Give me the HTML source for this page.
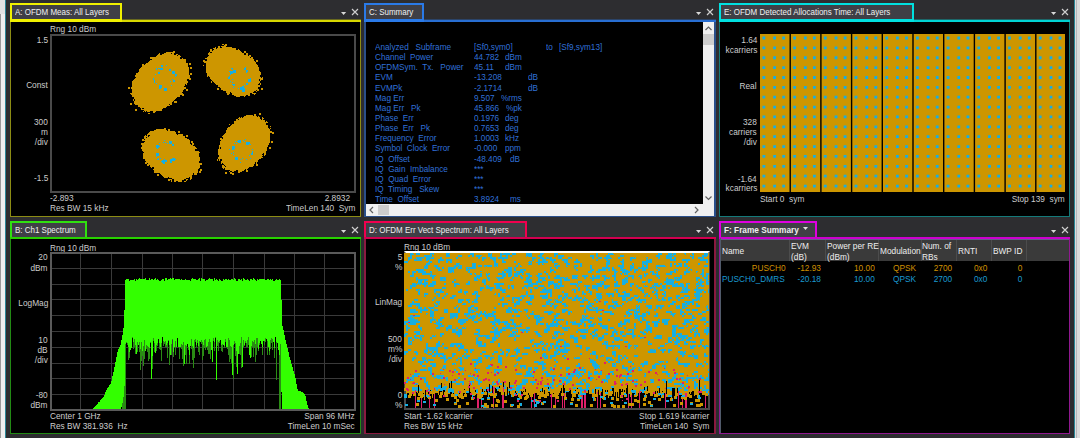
<!DOCTYPE html>
<html><head><meta charset="utf-8"><style>
html,body{margin:0;padding:0;width:1080px;height:438px;overflow:hidden;background:#2d2d30;font-family:"Liberation Sans", sans-serif;}
</style></head><body>
<div style="position:absolute;left:0px;top:0px;width:1px;height:438px;background:#9a9a9a;"></div><div style="position:absolute;left:1px;top:0px;width:4px;height:438px;background:#efefef;"></div><div style="position:absolute;left:0px;top:0px;width:5px;height:14px;background:#e2e2e2;"></div><div style="position:absolute;left:5px;top:0px;width:1px;height:438px;background:#2b8797;"></div><div style="position:absolute;left:1074px;top:0px;width:1px;height:438px;background:#2b8797;"></div><div style="position:absolute;left:1075px;top:0px;width:5px;height:438px;background:#dcdcdc;"></div><div style="position:absolute;left:1076px;top:0px;width:1px;height:438px;background:#b8b8bc;"></div><div style="position:absolute;left:10px;top:19px;width:351px;height:1px;background:#69691f;"></div><div style="position:absolute;left:10px;top:20px;width:351px;height:2px;background:#d8d800;"></div><div style="position:absolute;left:10px;top:3px;width:112px;height:19px;background:#f0f000;"></div><div style="position:absolute;left:12px;top:5px;width:108px;height:14px;background:#3f3f46;"></div><div style="position:absolute;left:10px;top:22px;width:351px;height:195px;background:#8c8c14;"></div><div style="position:absolute;left:11px;top:22px;width:349px;height:194px;background:#000000;"></div><div style="position:absolute;left:15px;top:6px;font-size:9.5px;line-height:12px;color:#f0f0f0;white-space:pre;transform:scaleX(0.84);transform-origin:0 0;">A: OFDM Meas: All Layers</div><svg style="position:absolute;left:341px;top:3px" width="20" height="16" viewBox="0 0 20 16"><path d="M0 9 L5.2 9 L2.6 12 Z" fill="#d8d8d8"/><path d="M11 6 L17 12 M17 6 L11 12" stroke="#cfcfcf" stroke-width="1.15"/></svg><div style="position:absolute;left:364px;top:19px;width:352px;height:1px;background:#2b4469;"></div><div style="position:absolute;left:364px;top:20px;width:352px;height:2px;background:#286ed2;"></div><div style="position:absolute;left:364px;top:3px;width:60px;height:19px;background:#2a7ae8;"></div><div style="position:absolute;left:366px;top:5px;width:56px;height:14px;background:#3f3f46;"></div><div style="position:absolute;left:364px;top:22px;width:352px;height:195px;background:#2a4f8a;"></div><div style="position:absolute;left:366px;top:22px;width:348px;height:194px;background:#000000;"></div><div style="position:absolute;left:369px;top:6px;font-size:9.5px;line-height:12px;color:#f0f0f0;white-space:pre;transform:scaleX(0.84);transform-origin:0 0;">C: Summary</div><svg style="position:absolute;left:696px;top:3px" width="20" height="16" viewBox="0 0 20 16"><path d="M0 9 L5.2 9 L2.6 12 Z" fill="#d8d8d8"/><path d="M11 6 L17 12 M17 6 L11 12" stroke="#cfcfcf" stroke-width="1.15"/></svg><div style="position:absolute;left:719px;top:19px;width:351px;height:1px;background:#1d6769;"></div><div style="position:absolute;left:719px;top:20px;width:351px;height:2px;background:#00d2d2;"></div><div style="position:absolute;left:719px;top:3px;width:195px;height:19px;background:#00e0e0;"></div><div style="position:absolute;left:721px;top:5px;width:191px;height:14px;background:#3f3f46;"></div><div style="position:absolute;left:719px;top:22px;width:351px;height:195px;background:#147a7a;"></div><div style="position:absolute;left:720px;top:22px;width:349px;height:194px;background:#000000;"></div><div style="position:absolute;left:724px;top:6px;font-size:9.5px;line-height:12px;color:#f0f0f0;white-space:pre;transform:scaleX(0.84);transform-origin:0 0;">E: OFDM Detected Allocations Time: All Layers</div><svg style="position:absolute;left:1051px;top:3px" width="20" height="16" viewBox="0 0 20 16"><path d="M0 9 L5.2 9 L2.6 12 Z" fill="#d8d8d8"/><path d="M11 6 L17 12 M17 6 L11 12" stroke="#cfcfcf" stroke-width="1.15"/></svg><div style="position:absolute;left:10px;top:237px;width:351px;height:2px;background:#28d000;"></div><div style="position:absolute;left:10px;top:221px;width:77px;height:16px;background:#30e010;"></div><div style="position:absolute;left:12px;top:223px;width:73px;height:14px;background:#3f3f46;"></div><div style="position:absolute;left:10px;top:239px;width:351px;height:195px;background:#228a14;"></div><div style="position:absolute;left:11px;top:239px;width:349px;height:194px;background:#000000;"></div><div style="position:absolute;left:15px;top:224px;font-size:9.5px;line-height:12px;color:#f0f0f0;white-space:pre;transform:scaleX(0.84);transform-origin:0 0;">B: Ch1 Spectrum</div><svg style="position:absolute;left:341px;top:221px" width="20" height="16" viewBox="0 0 20 16"><path d="M0 9 L5.2 9 L2.6 12 Z" fill="#d8d8d8"/><path d="M11 6 L17 12 M17 6 L11 12" stroke="#cfcfcf" stroke-width="1.15"/></svg><div style="position:absolute;left:364px;top:237px;width:352px;height:2px;background:#d20050;"></div><div style="position:absolute;left:364px;top:221px;width:163px;height:16px;background:#f0004f;"></div><div style="position:absolute;left:366px;top:223px;width:159px;height:14px;background:#3f3f46;"></div><div style="position:absolute;left:364px;top:239px;width:352px;height:195px;background:#8a1a40;"></div><div style="position:absolute;left:366px;top:239px;width:348px;height:194px;background:#000000;"></div><div style="position:absolute;left:369px;top:224px;font-size:9.5px;line-height:12px;color:#f0f0f0;white-space:pre;transform:scaleX(0.84);transform-origin:0 0;">D: OFDM Err Vect Spectrum: All Layers</div><svg style="position:absolute;left:696px;top:221px" width="20" height="16" viewBox="0 0 20 16"><path d="M0 9 L5.2 9 L2.6 12 Z" fill="#d8d8d8"/><path d="M11 6 L17 12 M17 6 L11 12" stroke="#cfcfcf" stroke-width="1.15"/></svg><div style="position:absolute;left:719px;top:237px;width:351px;height:2px;background:#cd00cd;"></div><div style="position:absolute;left:719px;top:221px;width:98px;height:16px;background:#e000e0;"></div><div style="position:absolute;left:721px;top:223px;width:94px;height:14px;background:#3f3f46;"></div><div style="position:absolute;left:719px;top:239px;width:351px;height:195px;background:#901890;"></div><div style="position:absolute;left:720px;top:239px;width:349px;height:194px;background:#000000;"></div><div style="position:absolute;left:724px;top:224px;font-size:9.5px;line-height:12px;color:#f0f0f0;white-space:pre;transform:scaleX(0.87);transform-origin:0 0;font-weight:bold;">F: Frame Summary</div><svg style="position:absolute;left:803px;top:227px" width="6" height="4"><path d="M0 0 L5 0 L2.5 3 Z" fill="#e0e0e0"/></svg><svg style="position:absolute;left:1051px;top:221px" width="20" height="16" viewBox="0 0 20 16"><path d="M0 9 L5.2 9 L2.6 12 Z" fill="#d8d8d8"/><path d="M11 6 L17 12 M17 6 L11 12" stroke="#cfcfcf" stroke-width="1.15"/></svg><div style="position:absolute;left:50px;top:24px;font-size:9.5px;line-height:10px;color:#cccccc;white-space:pre;transform:scaleX(0.874);transform-origin:0 0;">Rng 10 dBm</div><div style="position:absolute;right:1032px;top:35px;font-size:9.5px;line-height:10px;color:#cccccc;white-space:pre;transform:scaleX(0.874);transform-origin:100% 0;text-align:right;">1.5</div><div style="position:absolute;right:1032px;top:80px;font-size:9.5px;line-height:10px;color:#cccccc;white-space:pre;transform:scaleX(0.874);transform-origin:100% 0;text-align:right;">Const</div><div style="position:absolute;right:1032px;top:117px;font-size:9.5px;line-height:10px;color:#cccccc;white-space:pre;transform:scaleX(0.874);transform-origin:100% 0;text-align:right;">300</div><div style="position:absolute;right:1032px;top:127px;font-size:9.5px;line-height:10px;color:#cccccc;white-space:pre;transform:scaleX(0.874);transform-origin:100% 0;text-align:right;">m</div><div style="position:absolute;right:1032px;top:136.5px;font-size:9.5px;line-height:10px;color:#cccccc;white-space:pre;transform:scaleX(0.874);transform-origin:100% 0;text-align:right;">/div</div><div style="position:absolute;right:1032px;top:173px;font-size:9.5px;line-height:10px;color:#cccccc;white-space:pre;transform:scaleX(0.874);transform-origin:100% 0;text-align:right;">-1.5</div><div style="position:absolute;left:50px;top:193px;font-size:9.5px;line-height:10px;color:#cccccc;white-space:pre;transform:scaleX(0.874);transform-origin:0 0;">-2.893</div><div style="position:absolute;right:730px;top:193px;font-size:9.5px;line-height:10px;color:#cccccc;white-space:pre;transform:scaleX(0.874);transform-origin:100% 0;text-align:right;">2.8932</div><div style="position:absolute;left:50px;top:203px;font-size:9.5px;line-height:10px;color:#cccccc;white-space:pre;transform:scaleX(0.874);transform-origin:0 0;">Res BW 15 kHz</div><div style="position:absolute;right:724.5px;top:203px;font-size:9.5px;line-height:10px;color:#cccccc;white-space:pre;transform:scaleX(0.874);transform-origin:100% 0;text-align:right;">TimeLen 140  Sym</div><div style="position:absolute;left:50px;top:34px;width:302px;height:155px;border:2px solid #4a4a4a"></div><svg style="position:absolute;left:0;top:0" width="1080" height="438"><path d="M222 44h2v1h-2zM225 44h2v1h-2zM224 45h3v1h-3zM221 46h5v1h-5zM218 46h2v2h-2zM215 47h1v1h-1zM222 47h10v1h-10zM213 48h3v1h-3zM217 48h19v1h-19zM238 49h1v1h-1zM214 49h22v1h-22zM210 49h2v2h-2zM213 50h27v1h-27zM173 51h2v1h-2zM210 51h31v1h-31zM244 51h2v2h-2zM212 52h30v1h-30zM166 52h9v1h-9zM209 52h1v1h-1zM172 53h2v1h-2zM164 53h7v1h-7zM159 53h1v1h-1zM246 53h2v2h-2zM208 53h36v2h-36zM176 54h2v1h-2zM162 54h12v1h-12zM158 54h2v1h-2zM209 55h39v1h-39zM249 55h2v1h-2zM157 55h20v1h-20zM178 55h2v1h-2zM156 56h25v1h-25zM208 56h43v1h-43zM207 57h43v1h-43zM251 57h2v1h-2zM150 57h30v2h-30zM182 58h1v1h-1zM205 58h48v1h-48zM152 59h34v1h-34zM207 59h47v2h-47zM203 60h2v1h-2zM150 60h36v1h-36zM256 60h2v2h-2zM149 61h37v1h-37zM203 61h52v1h-52zM148 62h38v1h-38zM204 62h52v1h-52zM146 63h42v1h-42zM206 63h50v1h-50zM189 63h2v2h-2zM145 64h43v1h-43zM142 64h2v1h-2zM206 64h51v1h-51zM203 65h1v1h-1zM167 65h21v1h-21zM163 65h3v1h-3zM206 65h52v2h-52zM142 65h19v2h-19zM163 66h25v1h-25zM206 67h39v1h-39zM141 67h48v1h-48zM190 67h2v2h-2zM157 68h1v1h-1zM206 68h25v1h-25zM163 68h26v1h-26zM140 68h16v1h-16zM246 67h13v3h-13zM233 68h11v2h-11zM206 69h26v1h-26zM157 69h3v1h-3zM139 69h17v1h-17zM163 69h6v1h-6zM171 69h18v2h-18zM248 70h11v1h-11zM139 70h30v1h-30zM206 70h27v1h-27zM206 71h23v1h-23zM248 71h12v1h-12zM139 71h33v1h-33zM236 70h10v3h-10zM247 72h14v1h-14zM138 72h20v1h-20zM206 72h24v1h-24zM175 71h14v3h-14zM160 72h12v2h-12zM136 73h22v1h-22zM233 73h28v1h-28zM190 73h2v2h-2zM207 73h23v2h-23zM156 74h19v1h-19zM231 74h30v1h-30zM136 74h19v1h-19zM177 74h12v1h-12zM177 75h13v1h-13zM207 75h53v1h-53zM135 75h40v2h-40zM176 76h14v1h-14zM209 76h20v1h-20zM230 76h30v1h-30zM207 76h1v1h-1zM136 77h54v1h-54zM230 77h31v1h-31zM262 77h1v1h-1zM210 77h18v2h-18zM154 78h37v1h-37zM251 78h12v1h-12zM135 78h18v1h-18zM230 78h20v1h-20zM189 79h2v1h-2zM154 79h18v1h-18zM173 79h14v1h-14zM211 79h21v1h-21zM260 79h3v1h-3zM134 79h19v1h-19zM233 79h15v1h-15zM251 79h8v2h-8zM155 80h18v1h-18zM260 80h1v1h-1zM212 80h36v1h-36zM175 80h12v1h-12zM133 80h21v1h-21zM171 81h2v1h-2zM175 81h13v1h-13zM231 81h17v1h-17zM251 81h9v1h-9zM155 81h15v1h-15zM213 81h17v1h-17zM211 81h1v2h-1zM132 81h22v2h-22zM155 82h33v1h-33zM214 82h18v1h-18zM233 82h27v1h-27zM132 83h24v1h-24zM157 83h30v1h-30zM248 83h11v1h-11zM215 83h31v1h-31zM260 83h1v2h-1zM186 84h1v1h-1zM235 84h11v1h-11zM132 84h53v1h-53zM248 84h10v1h-10zM216 84h16v1h-16zM218 85h15v1h-15zM235 85h9v1h-9zM162 85h9v1h-9zM172 85h13v1h-13zM245 85h15v1h-15zM132 85h27v2h-27zM244 86h16v1h-16zM162 86h22v1h-22zM218 86h24v1h-24zM162 87h24v1h-24zM220 87h13v1h-13zM244 87h14v1h-14zM234 87h6v1h-6zM131 87h28v2h-28zM128 87h2v2h-2zM161 88h3v1h-3zM167 88h19v1h-19zM245 88h13v1h-13zM221 88h17v1h-17zM239 88h1v1h-1zM217 88h2v2h-2zM261 88h2v2h-2zM221 89h19v1h-19zM167 89h17v1h-17zM245 89h14v1h-14zM132 89h32v2h-32zM186 89h2v2h-2zM223 90h19v1h-19zM245 90h11v1h-11zM167 90h16v1h-16zM257 90h2v1h-2zM245 91h9v1h-9zM256 91h1v1h-1zM132 91h51v1h-51zM226 91h16v1h-16zM132 92h50v1h-50zM231 92h22v1h-22zM226 92h4v1h-4zM227 93h3v1h-3zM130 93h53v1h-53zM252 93h4v1h-4zM232 93h18v2h-18zM254 94h1v1h-1zM131 94h53v1h-53zM227 94h2v1h-2zM234 95h12v1h-12zM182 95h2v1h-2zM248 95h2v1h-2zM132 95h48v2h-48zM236 96h4v1h-4zM244 96h1v1h-1zM134 97h43v1h-43zM134 98h42v1h-42zM135 99h40v1h-40zM133 99h1v2h-1zM135 100h39v1h-39zM134 101h39v1h-39zM174 101h3v2h-3zM134 102h38v2h-38zM130 103h2v2h-2zM135 104h34v1h-34zM170 104h2v1h-2zM138 105h32v1h-32zM138 106h29v1h-29zM140 107h26v1h-26zM144 108h19v1h-19zM141 108h1v1h-1zM141 109h21v1h-21zM135 109h2v2h-2zM144 110h18v1h-18zM147 111h3v1h-3zM153 111h3v1h-3zM145 111h1v1h-1zM143 111h1v1h-1zM153 112h2v1h-2zM148 113h2v1h-2zM259 113h2v2h-2zM254 114h2v2h-2zM246 115h7v1h-7zM244 116h13v1h-13zM258 116h1v1h-1zM241 117h1v1h-1zM239 117h1v1h-1zM243 117h17v1h-17zM262 117h1v1h-1zM238 118h22v1h-22zM262 118h2v1h-2zM262 119h1v1h-1zM236 119h2v1h-2zM239 119h22v1h-22zM236 120h29v1h-29zM234 121h31v1h-31zM266 121h1v1h-1zM234 122h34v1h-34zM234 123h32v1h-32zM232 124h34v1h-34zM229 124h1v1h-1zM231 125h37v1h-37zM230 126h38v1h-38zM270 126h1v1h-1zM228 127h40v1h-40zM164 128h2v1h-2zM270 128h1v1h-1zM227 128h42v1h-42zM227 129h43v1h-43zM156 129h10v1h-10zM168 129h2v2h-2zM226 130h44v1h-44zM154 130h13v1h-13zM226 131h46v1h-46zM150 131h25v1h-25zM178 131h2v2h-2zM226 132h48v1h-48zM149 132h27v1h-27zM225 133h45v1h-45zM148 133h28v1h-28zM272 133h2v1h-2zM147 134h30v1h-30zM178 134h5v1h-5zM224 134h46v1h-46zM223 135h47v1h-47zM145 135h1v1h-1zM147 135h1v1h-1zM150 135h33v1h-33zM186 135h2v2h-2zM149 136h36v1h-36zM222 136h48v1h-48zM144 136h4v1h-4zM147 137h38v1h-38zM144 137h2v1h-2zM223 137h47v2h-47zM220 138h2v1h-2zM144 138h43v1h-43zM246 139h24v1h-24zM145 139h44v1h-44zM142 139h2v1h-2zM220 139h25v1h-25zM241 140h2v1h-2zM165 140h25v1h-25zM244 140h26v1h-26zM142 140h22v1h-22zM221 140h17v1h-17zM145 141h24v1h-24zM220 141h15v1h-15zM236 141h1v1h-1zM241 141h3v1h-3zM245 141h25v1h-25zM191 141h2v2h-2zM271 141h2v2h-2zM166 142h3v1h-3zM164 142h1v1h-1zM250 142h20v1h-20zM144 142h19v1h-19zM220 142h18v1h-18zM241 142h5v1h-5zM172 141h18v3h-18zM237 143h9v1h-9zM141 143h18v1h-18zM235 143h1v1h-1zM160 143h7v1h-7zM250 143h19v1h-19zM168 143h1v1h-1zM220 143h14v1h-14zM192 143h2v2h-2zM249 144h1v1h-1zM220 144h26v1h-26zM174 144h17v1h-17zM251 144h18v1h-18zM141 144h31v1h-31zM159 145h13v1h-13zM174 145h19v1h-19zM219 145h49v1h-49zM142 145h14v2h-14zM160 146h35v1h-35zM235 146h33v1h-33zM219 146h13v1h-13zM141 147h15v1h-15zM159 147h37v1h-37zM219 147h1v2h-1zM221 147h11v2h-11zM235 147h32v2h-32zM269 147h2v2h-2zM158 148h39v1h-39zM141 148h16v1h-16zM234 149h18v1h-18zM253 149h14v1h-14zM218 149h11v1h-11zM230 149h2v1h-2zM142 149h53v2h-53zM218 150h49v1h-49zM143 151h56v1h-56zM218 151h34v1h-34zM253 151h13v2h-13zM144 152h56v1h-56zM234 152h18v1h-18zM218 152h15v1h-15zM253 153h10v1h-10zM232 153h19v1h-19zM218 153h13v1h-13zM264 153h2v2h-2zM218 154h15v1h-15zM234 154h17v1h-17zM253 154h9v1h-9zM159 153h40v3h-40zM219 155h30v1h-30zM264 155h1v1h-1zM250 155h13v1h-13zM143 153h13v4h-13zM219 156h43v1h-43zM157 156h42v1h-42zM143 157h57v1h-57zM238 157h25v1h-25zM218 157h17v2h-17zM251 158h10v1h-10zM175 158h25v1h-25zM238 158h4v1h-4zM143 158h15v1h-15zM243 158h7v1h-7zM161 158h11v1h-11zM159 158h1v1h-1zM247 159h12v1h-12zM238 159h2v1h-2zM222 159h13v1h-13zM165 159h5v1h-5zM176 159h24v1h-24zM159 159h5v1h-5zM145 159h12v1h-12zM241 159h5v1h-5zM219 159h1v2h-1zM217 159h1v2h-1zM222 160h36v1h-36zM175 160h25v1h-25zM145 160h17v1h-17zM167 160h3v2h-3zM221 161h37v1h-37zM146 161h15v1h-15zM172 161h27v2h-27zM221 162h19v1h-19zM241 162h14v1h-14zM165 162h5v1h-5zM145 162h17v1h-17zM256 162h1v2h-1zM145 163h2v1h-2zM223 163h32v1h-32zM165 163h37v1h-37zM221 163h1v1h-1zM148 163h15v1h-15zM224 164h30v1h-30zM147 164h55v1h-55zM256 164h2v2h-2zM147 165h2v1h-2zM225 165h29v1h-29zM222 165h2v1h-2zM150 165h50v2h-50zM226 166h27v1h-27zM222 166h3v1h-3zM151 167h1v1h-1zM222 167h27v1h-27zM154 167h46v1h-46zM225 168h23v1h-23zM154 168h45v1h-45zM223 168h1v1h-1zM246 169h1v1h-1zM225 169h20v1h-20zM153 169h45v1h-45zM200 169h2v2h-2zM230 170h6v1h-6zM238 170h6v1h-6zM246 170h2v2h-2zM238 171h4v1h-4zM232 171h2v1h-2zM229 171h1v1h-1zM154 170h44v3h-44zM199 171h2v2h-2zM238 172h2v1h-2zM230 172h2v1h-2zM225 172h2v2h-2zM230 173h4v1h-4zM160 173h33v1h-33zM194 173h3v2h-3zM161 174h32v1h-32zM232 174h2v1h-2zM157 174h2v2h-2zM162 175h30v1h-30zM163 176h29v1h-29zM169 177h20v1h-20zM164 177h4v1h-4zM190 177h2v2h-2zM172 178h14v1h-14zM174 179h10v1h-10zM190 179h1v1h-1zM186 179h2v1h-2zM168 179h4v1h-4zM186 180h1v1h-1zM168 180h2v1h-2zM174 180h8v1h-8zM171 180h1v2h-1zM178 181h4v1h-4zM184 181h2v1h-2zM174 181h2v1h-2z" fill="#cd9600"/><path d="M166 65h1v1h-1zM161 65h2v2h-2zM245 67h1v1h-1zM231 68h2v1h-2zM158 68h5v1h-5zM244 68h2v2h-2zM156 68h1v2h-1zM160 69h3v1h-3zM232 69h1v1h-1zM169 69h2v2h-2zM233 70h3v1h-3zM246 70h2v2h-2zM229 71h7v1h-7zM230 72h6v1h-6zM246 72h1v1h-1zM172 71h3v3h-3zM158 72h2v2h-2zM230 73h3v1h-3zM155 74h1v1h-1zM230 74h1v1h-1zM175 74h2v2h-2zM175 76h1v1h-1zM229 76h1v1h-1zM228 77h2v2h-2zM250 78h1v1h-1zM153 78h1v2h-1zM232 79h1v1h-1zM172 79h1v1h-1zM248 79h3v3h-3zM173 80h2v2h-2zM170 81h1v1h-1zM230 81h1v1h-1zM154 80h1v3h-1zM232 82h1v1h-1zM156 83h1v1h-1zM246 83h2v2h-2zM232 84h3v1h-3zM244 85h1v1h-1zM233 85h2v1h-2zM171 85h1v1h-1zM242 86h2v1h-2zM159 85h3v3h-3zM240 87h4v1h-4zM233 87h1v1h-1zM238 88h1v1h-1zM159 88h2v1h-2zM240 88h5v2h-5zM164 88h3v3h-3zM242 90h3v2h-3zM245 139h1v1h-1zM164 140h1v1h-1zM243 140h1v1h-1zM238 140h3v1h-3zM237 141h4v1h-4zM244 141h1v1h-1zM235 141h1v1h-1zM163 142h1v1h-1zM165 142h1v1h-1zM238 142h3v1h-3zM169 141h3v3h-3zM246 142h4v2h-4zM167 143h1v1h-1zM234 143h1v1h-1zM236 143h1v1h-1zM159 143h1v1h-1zM250 144h1v1h-1zM246 144h3v1h-3zM172 144h2v2h-2zM156 145h3v1h-3zM156 146h4v1h-4zM156 147h3v1h-3zM232 146h3v3h-3zM157 148h1v1h-1zM252 149h1v1h-1zM232 149h2v1h-2zM229 149h1v1h-1zM252 151h1v2h-1zM233 152h1v1h-1zM231 153h1v1h-1zM251 153h2v2h-2zM233 154h1v1h-1zM156 153h3v3h-3zM249 155h1v1h-1zM156 156h1v1h-1zM242 158h1v1h-1zM158 158h1v1h-1zM160 158h1v1h-1zM250 158h1v1h-1zM172 158h3v1h-3zM235 157h3v3h-3zM157 159h2v1h-2zM164 159h1v1h-1zM240 159h1v1h-1zM246 159h1v1h-1zM170 159h6v1h-6zM170 160h5v1h-5zM162 160h5v1h-5zM161 161h6v1h-6zM170 161h2v2h-2zM162 162h3v1h-3zM240 162h1v1h-1zM163 163h2v1h-2z" fill="#18aee0"/></svg><div style="position:absolute;left:50px;top:242.5px;font-size:9.5px;line-height:10px;color:#cccccc;white-space:pre;transform:scaleX(0.874);transform-origin:0 0;">Rng 10 dBm</div><div style="position:absolute;right:1032px;top:252px;font-size:9.5px;line-height:10px;color:#cccccc;white-space:pre;transform:scaleX(0.874);transform-origin:100% 0;text-align:right;">20</div><div style="position:absolute;right:1032px;top:262.5px;font-size:9.5px;line-height:10px;color:#cccccc;white-space:pre;transform:scaleX(0.874);transform-origin:100% 0;text-align:right;">dBm</div><div style="position:absolute;right:1032px;top:297.5px;font-size:9.5px;line-height:10px;color:#cccccc;white-space:pre;transform:scaleX(0.874);transform-origin:100% 0;text-align:right;">LogMag</div><div style="position:absolute;right:1032px;top:334.5px;font-size:9.5px;line-height:10px;color:#cccccc;white-space:pre;transform:scaleX(0.874);transform-origin:100% 0;text-align:right;">10</div><div style="position:absolute;right:1032px;top:344.5px;font-size:9.5px;line-height:10px;color:#cccccc;white-space:pre;transform:scaleX(0.874);transform-origin:100% 0;text-align:right;">dB</div><div style="position:absolute;right:1032px;top:354.5px;font-size:9.5px;line-height:10px;color:#cccccc;white-space:pre;transform:scaleX(0.874);transform-origin:100% 0;text-align:right;">/div</div><div style="position:absolute;right:1032px;top:390px;font-size:9.5px;line-height:10px;color:#cccccc;white-space:pre;transform:scaleX(0.874);transform-origin:100% 0;text-align:right;">-80</div><div style="position:absolute;right:1032px;top:400px;font-size:9.5px;line-height:10px;color:#cccccc;white-space:pre;transform:scaleX(0.874);transform-origin:100% 0;text-align:right;">dBm</div><div style="position:absolute;left:50px;top:411px;font-size:9.5px;line-height:10px;color:#cccccc;white-space:pre;transform:scaleX(0.874);transform-origin:0 0;">Center 1 GHz</div><div style="position:absolute;right:725px;top:411px;font-size:9.5px;line-height:10px;color:#cccccc;white-space:pre;transform:scaleX(0.874);transform-origin:100% 0;text-align:right;">Span 96 MHz</div><div style="position:absolute;left:50px;top:421px;font-size:9.5px;line-height:10px;color:#cccccc;white-space:pre;transform:scaleX(0.874);transform-origin:0 0;">Res BW 381.936  Hz</div><div style="position:absolute;right:725px;top:421px;font-size:9.5px;line-height:10px;color:#cccccc;white-space:pre;transform:scaleX(0.874);transform-origin:100% 0;text-align:right;">TimeLen 10 mSec</div><svg style="position:absolute;left:0;top:0" width="1080" height="438"><path d="M80 253h1v157h-1zM51 268h304v1h-304zM111 253h1v157h-1zM51 284h304v1h-304zM142 253h1v157h-1zM51 299h304v1h-304zM172 253h1v157h-1zM51 315h304v1h-304zM202 253h1v157h-1zM51 331h304v1h-304zM233 253h1v157h-1zM51 347h304v1h-304zM264 253h1v157h-1zM51 363h304v1h-304zM294 253h1v157h-1zM51 378h304v1h-304zM324 253h1v157h-1zM51 394h304v1h-304z" fill="#3a3a3a"/></svg><div style="position:absolute;left:50px;top:252px;width:302px;height:155px;border:2px solid #5a5a5a"></div><svg style="position:absolute;left:0;top:0" width="1080" height="438"><path d="M215 337h1v1h-1zM132 337h1v1h-1zM271 338h1v1h-1zM248 337h1v3h-1zM228 338h1v2h-1zM205 339h1v1h-1zM172 339h1v1h-1zM271 339h2v1h-2zM195 339h1v1h-1zM265 338h1v3h-1zM153 338h1v3h-1zM213 338h1v3h-1zM168 340h1v1h-1zM225 339h1v3h-1zM209 339h1v3h-1zM134 339h1v3h-1zM194 340h2v2h-2zM217 340h1v2h-1zM254 340h1v2h-1zM201 340h1v2h-1zM252 341h1v1h-1zM165 341h1v1h-1zM264 341h2v1h-2zM163 341h1v1h-1zM219 341h1v1h-1zM241 337h1v6h-1zM197 340h1v3h-1zM270 340h3v3h-3zM247 340h2v3h-2zM234 341h1v2h-1zM245 341h1v2h-1zM126 342h1v1h-1zM150 342h1v1h-1zM217 342h3v1h-3zM256 338h2v6h-2zM252 342h3v2h-3zM201 342h2v2h-2zM163 342h3v2h-3zM234 343h2v1h-2zM243 340h1v5h-1zM204 340h2v5h-2zM264 342h1v3h-1zM133 342h2v3h-2zM183 342h1v3h-1zM246 343h3v2h-3zM157 343h1v2h-1zM259 343h1v2h-1zM167 343h1v2h-1zM127 343h1v2h-1zM202 344h1v1h-1zM165 344h1v1h-1zM222 344h1v1h-1zM181 344h1v1h-1zM191 339h1v7h-1zM228 340h2v6h-2zM144 340h1v6h-1zM199 341h1v5h-1zM208 342h3v4h-3zM240 343h2v3h-2zM217 343h2v3h-2zM252 344h6v2h-6zM163 344h1v2h-1zM185 345h1v1h-1zM243 345h2v1h-2zM156 345h2v1h-2zM146 345h1v1h-1zM161 343h1v4h-1zM159 343h1v4h-1zM133 345h3v2h-3zM246 345h2v2h-2zM165 345h3v2h-3zM196 345h1v2h-1zM243 346h1v1h-1zM228 346h3v1h-3zM146 346h2v1h-2zM251 346h7v1h-7zM194 342h1v6h-1zM202 345h4v3h-4zM191 346h2v2h-2zM224 346h1v2h-1zM146 347h3v1h-3zM253 347h4v1h-4zM139 342h1v7h-1zM141 342h1v7h-1zM270 343h1v6h-1zM181 345h3v4h-3zM133 347h1v2h-1zM159 347h3v2h-3zM227 347h5v2h-5zM191 348h4v1h-4zM146 348h4v1h-4zM272 343h1v7h-1zM207 346h4v4h-4zM188 347h1v3h-1zM205 348h1v2h-1zM160 349h2v1h-2zM214 342h1v9h-1zM235 344h1v7h-1zM221 345h2v6h-2zM156 346h1v5h-1zM218 346h1v5h-1zM143 346h2v5h-2zM258 349h1v2h-1zM139 349h3v2h-3zM137 342h1v10h-1zM154 343h1v9h-1zM198 346h2v6h-2zM128 347h1v5h-1zM147 349h3v3h-3zM222 351h1v1h-1zM139 351h6v1h-6zM239 346h3v8h-3zM135 347h1v7h-1zM208 350h3v4h-3zM175 341h1v14h-1zM267 341h1v14h-1zM280 344h1v11h-1zM171 344h1v11h-1zM185 346h2v9h-2zM262 347h1v8h-1zM255 348h2v7h-2zM228 349h4v6h-4zM269 351h1v4h-1zM199 352h1v3h-1zM240 354h2v1h-2zM202 348h2v8h-2zM235 351h2v5h-2zM140 352h5v4h-5zM251 347h1v10h-1zM253 348h1v9h-1zM173 352h1v5h-1zM167 347h1v11h-1zM274 348h1v10h-1zM192 349h3v9h-3zM128 352h2v6h-2zM179 347h1v12h-1zM182 349h2v10h-2zM148 352h2v7h-2zM210 354h1v5h-1zM229 355h3v4h-3zM143 356h2v3h-2zM202 356h1v4h-1zM192 358h2v2h-2zM128 358h1v2h-1zM161 350h1v11h-1zM140 356h2v5h-2zM148 359h1v2h-1zM255 355h1v7h-1zM229 359h1v3h-1zM231 359h1v4h-1zM189 355h1v9h-1zM186 355h1v9h-1zM169 345h1v20h-1zM143 359h1v7h-1zM183 359h1v7h-1zM236 356h1v11h-1zM241 355h1v13h-1zM193 360h1v8h-1zM152 356h1v13h-1zM140 361h1v9h-1zM233 345h1v34h-1zM276 342h1v38h-1zM125 344h1v42h-1zM124 386h2v11h-2zM123 397h3v6h-3zM279 355h2v54h-2zM122 403h4v6h-4z" fill="#2a8c14"/><path d="M172 278h2v1h-2zM253 278h1v1h-1zM155 278h1v1h-1zM170 278h1v1h-1zM234 278h1v1h-1zM145 278h1v1h-1zM209 278h1v1h-1zM243 278h1v1h-1zM199 278h1v1h-1zM192 278h1v1h-1zM201 278h1v1h-1zM139 278h1v1h-1zM165 278h2v2h-2zM214 278h1v2h-1zM149 278h1v2h-1zM198 279h2v1h-2zM253 279h2v1h-2zM168 279h6v1h-6zM216 279h1v1h-1zM208 279h5v1h-5zM231 279h2v1h-2zM257 279h1v1h-1zM250 279h2v1h-2zM276 279h1v1h-1zM154 279h2v1h-2zM157 279h1v1h-1zM134 279h1v1h-1zM272 279h1v1h-1zM191 279h5v1h-5zM185 279h1v1h-1zM181 279h1v1h-1zM238 279h2v1h-2zM241 279h1v1h-1zM151 279h2v1h-2zM223 279h1v1h-1zM136 279h1v1h-1zM225 279h2v1h-2zM234 279h2v1h-2zM243 279h2v1h-2zM259 279h6v1h-6zM138 279h8v1h-8zM219 279h1v1h-1zM228 279h1v1h-1zM126 279h3v1h-3zM270 279h1v1h-1zM279 279h1v1h-1zM247 279h1v1h-1zM175 279h5v1h-5zM162 279h2v1h-2zM267 279h2v1h-2zM201 279h4v2h-4zM223 280h13v1h-13zM250 280h6v1h-6zM136 280h23v1h-23zM257 280h16v1h-16zM165 280h25v1h-25zM206 280h7v1h-7zM191 280h9v1h-9zM125 280h4v1h-4zM275 280h6v1h-6zM161 280h3v1h-3zM238 280h4v1h-4zM130 280h5v1h-5zM214 280h4v1h-4zM243 280h6v1h-6zM219 280h2v1h-2zM125 281h156v19h-156zM125 300h157v10h-157zM124 310h158v16h-158zM124 326h159v2h-159zM123 328h160v2h-160zM123 330h161v5h-161zM122 335h163v2h-163zM249 337h26v1h-26zM133 337h29v1h-29zM163 337h52v1h-52zM216 337h25v1h-25zM133 338h20v1h-20zM154 338h8v1h-8zM163 338h14v1h-14zM266 338h5v1h-5zM178 338h35v1h-35zM216 338h12v1h-12zM272 338h3v1h-3zM122 337h10v3h-10zM242 337h6v3h-6zM276 337h9v3h-9zM249 338h7v2h-7zM229 338h12v2h-12zM163 339h9v1h-9zM196 339h9v1h-9zM192 339h3v1h-3zM267 339h4v1h-4zM216 339h9v1h-9zM135 339h18v1h-18zM258 338h7v3h-7zM173 339h4v2h-4zM249 340h5v1h-5zM218 340h2v1h-2zM163 340h5v1h-5zM267 340h3v1h-3zM244 340h3v1h-3zM198 340h3v1h-3zM230 340h11v1h-11zM214 338h1v4h-1zM133 339h1v3h-1zM273 339h2v3h-2zM210 339h3v3h-3zM206 339h3v3h-3zM178 339h13v3h-13zM121 340h11v2h-11zM145 340h8v2h-8zM276 340h10v2h-10zM202 340h2v2h-2zM135 340h9v2h-9zM253 341h1v1h-1zM200 341h1v1h-1zM218 341h1v1h-1zM164 341h1v1h-1zM159 339h3v4h-3zM154 339h4v4h-4zM235 341h6v2h-6zM246 341h1v2h-1zM166 341h2v2h-2zM258 341h2v2h-2zM127 342h5v1h-5zM277 342h9v1h-9zM221 340h4v4h-4zM169 340h3v4h-3zM255 340h1v4h-1zM261 341h2v3h-2zM121 342h5v2h-5zM184 342h7v2h-7zM178 342h5v2h-5zM278 343h8v1h-8zM196 340h1v5h-1zM230 341h4v4h-4zM244 341h1v4h-1zM138 342h1v3h-1zM135 342h2v3h-2zM145 342h5v3h-5zM203 342h1v3h-1zM166 343h1v2h-1zM155 343h2v2h-2zM221 344h1v1h-1zM223 344h2v1h-2zM121 344h4v1h-4zM169 344h2v1h-2zM184 344h3v1h-3zM182 344h1v1h-1zM192 340h2v6h-2zM198 341h1v5h-1zM249 341h3v5h-3zM142 342h2v4h-2zM206 342h2v4h-2zM236 343h4v3h-4zM188 344h3v2h-3zM147 345h3v1h-3zM230 345h3v1h-3zM186 345h1v1h-1zM224 345h1v1h-1zM226 339h2v8h-2zM268 341h2v6h-2zM176 341h1v6h-1zM173 341h2v6h-2zM160 343h1v4h-1zM128 343h4v4h-4zM178 344h3v3h-3zM262 344h1v3h-1zM120 345h5v2h-5zM206 346h1v1h-1zM231 346h2v1h-2zM188 346h2v1h-2zM148 346h2v1h-2zM274 342h1v6h-1zM281 344h6v4h-6zM193 346h1v2h-1zM129 347h3v1h-3zM149 347h1v1h-1zM140 342h1v7h-1zM258 343h1v6h-1zM119 347h6v2h-6zM211 342h2v8h-2zM278 344h2v6h-2zM129 348h2v2h-2zM145 345h1v6h-1zM142 346h1v5h-1zM236 346h3v5h-3zM269 347h1v4h-1zM173 347h1v5h-1zM281 348h7v4h-7zM118 349h7v3h-7zM129 350h1v2h-1zM155 345h1v8h-1zM136 345h1v9h-1zM237 351h2v3h-2zM170 345h1v10h-1zM249 346h2v9h-2zM189 347h1v8h-1zM279 350h1v5h-1zM151 342h2v14h-2zM281 352h8v5h-8zM117 352h8v5h-8zM250 355h1v3h-1zM281 357h9v3h-9zM212 350h1v12h-1zM116 357h9v5h-9zM184 345h1v19h-1zM281 360h10v4h-10zM242 340h1v27h-1zM115 362h10v5h-10zM281 364h11v3h-11zM281 367h12v4h-12zM114 367h11v5h-11zM237 354h1v20h-1zM281 371h13v3h-13zM232 347h1v28h-1zM113 372h12v4h-12zM281 374h14v4h-14zM151 356h1v23h-1zM216 340h1v40h-1zM112 376h13v5h-13zM281 378h15v6h-15zM111 381h14v3h-14zM110 384h15v1h-15zM109 385h16v1h-16zM109 386h15v1h-15zM108 387h16v1h-16zM281 384h16v5h-16zM107 388h17v2h-17zM281 389h17v2h-17zM106 390h18v2h-18zM281 391h20v1h-20zM282 392h21v1h-21zM282 393h22v1h-22zM105 392h19v3h-19zM282 394h23v2h-23zM104 395h20v2h-20zM103 397h20v1h-20zM102 398h21v1h-21zM101 399h22v1h-22zM282 396h24v5h-24zM100 400h23v2h-23zM98 402h25v1h-25zM98 403h24v1h-24zM282 401h25v4h-25zM97 404h25v1h-25zM96 405h26v1h-26zM95 406h27v1h-27zM282 405h26v3h-26zM94 407h27v1h-27zM93 408h28v1h-28zM282 408h27v1h-27z" fill="#33ff00"/></svg><div style="position:absolute;left:404px;top:242px;font-size:9.5px;line-height:10px;color:#cccccc;white-space:pre;transform:scaleX(0.874);transform-origin:0 0;">Rng 10 dBm</div><div style="position:absolute;right:678px;top:251.5px;font-size:9.5px;line-height:10px;color:#cccccc;white-space:pre;transform:scaleX(0.874);transform-origin:100% 0;text-align:right;">5</div><div style="position:absolute;right:678px;top:261.5px;font-size:9.5px;line-height:10px;color:#cccccc;white-space:pre;transform:scaleX(0.874);transform-origin:100% 0;text-align:right;">%</div><div style="position:absolute;right:678px;top:297px;font-size:9.5px;line-height:10px;color:#cccccc;white-space:pre;transform:scaleX(0.874);transform-origin:100% 0;text-align:right;">LinMag</div><div style="position:absolute;right:678px;top:334px;font-size:9.5px;line-height:10px;color:#cccccc;white-space:pre;transform:scaleX(0.874);transform-origin:100% 0;text-align:right;">500</div><div style="position:absolute;right:678px;top:344px;font-size:9.5px;line-height:10px;color:#cccccc;white-space:pre;transform:scaleX(0.874);transform-origin:100% 0;text-align:right;">m%</div><div style="position:absolute;right:678px;top:354px;font-size:9.5px;line-height:10px;color:#cccccc;white-space:pre;transform:scaleX(0.874);transform-origin:100% 0;text-align:right;">/div</div><div style="position:absolute;right:678px;top:389.5px;font-size:9.5px;line-height:10px;color:#cccccc;white-space:pre;transform:scaleX(0.874);transform-origin:100% 0;text-align:right;">0</div><div style="position:absolute;right:678px;top:399.5px;font-size:9.5px;line-height:10px;color:#cccccc;white-space:pre;transform:scaleX(0.874);transform-origin:100% 0;text-align:right;">%</div><div style="position:absolute;left:404px;top:411px;font-size:9.5px;line-height:10px;color:#cccccc;white-space:pre;transform:scaleX(0.874);transform-origin:0 0;">Start -1.62 kcarrier</div><div style="position:absolute;right:370.5px;top:411px;font-size:9.5px;line-height:10px;color:#cccccc;white-space:pre;transform:scaleX(0.874);transform-origin:100% 0;text-align:right;">Stop 1.619 kcarrier</div><div style="position:absolute;left:404px;top:421px;font-size:9.5px;line-height:10px;color:#cccccc;white-space:pre;transform:scaleX(0.874);transform-origin:0 0;">Res BW 15 kHz</div><div style="position:absolute;right:370.5px;top:421px;font-size:9.5px;line-height:10px;color:#cccccc;white-space:pre;transform:scaleX(0.874);transform-origin:100% 0;text-align:right;">TimeLen 140  Sym</div><div style="position:absolute;left:404px;top:251px;width:302px;height:155px;border:2px solid #4a4a4a;border-top-color:#ffffff"></div><svg style="position:absolute;left:0;top:0" width="1080" height="438"><path d="M599 301h2v1h-2zM602 310h2v1h-2zM413 315h2v1h-2zM408 322h2v1h-2zM521 332h2v1h-2zM644 337h2v1h-2zM560 346h2v1h-2zM625 346h2v1h-2zM540 357h2v2h-2zM589 358h1v1h-1zM567 358h2v2h-2zM604 362h2v2h-2zM470 363h2v2h-2zM490 364h3v1h-3zM491 365h2v1h-2zM630 366h1v1h-1zM505 366h2v2h-2zM497 366h2v2h-2zM579 367h2v2h-2zM475 368h1v1h-1zM664 368h1v1h-1zM553 368h2v2h-2zM443 369h1v1h-1zM595 369h1v1h-1zM673 369h2v2h-2zM515 369h2v2h-2zM574 369h2v2h-2zM616 369h2v2h-2zM465 370h1v1h-1zM601 370h1v1h-1zM415 370h2v2h-2zM449 370h2v2h-2zM632 370h2v2h-2zM452 371h2v2h-2zM573 371h2v2h-2zM533 371h2v2h-2zM648 371h2v2h-2zM491 372h1v1h-1zM497 372h2v2h-2zM655 372h2v2h-2zM674 372h2v2h-2zM487 372h2v2h-2zM470 373h1v1h-1zM440 373h1v1h-1zM608 373h2v2h-2zM568 373h2v2h-2zM627 373h2v2h-2zM458 373h2v2h-2zM432 373h2v2h-2zM657 374h1v1h-1zM410 374h1v1h-1zM620 374h2v1h-2zM560 374h2v2h-2zM473 374h2v2h-2zM494 374h2v2h-2zM687 375h1v1h-1zM452 375h1v1h-1zM619 375h3v1h-3zM477 375h2v2h-2zM616 375h2v2h-2zM418 376h1v1h-1zM619 376h2v1h-2zM598 376h2v2h-2zM533 377h1v1h-1zM619 377h1v1h-1zM541 377h2v2h-2zM588 377h2v2h-2zM443 377h2v2h-2zM407 377h2v2h-2zM485 378h2v1h-2zM699 378h2v2h-2zM679 378h2v2h-2zM464 378h2v2h-2zM420 378h2v2h-2zM676 378h2v2h-2zM596 379h1v1h-1zM410 379h1v1h-1zM483 379h4v1h-4zM547 379h1v1h-1zM454 379h2v2h-2zM535 379h2v2h-2zM553 379h2v2h-2zM488 379h2v2h-2zM658 379h2v2h-2zM542 380h1v1h-1zM483 380h2v1h-2zM515 380h2v2h-2zM559 380h2v2h-2zM632 380h2v2h-2zM538 381h1v1h-1zM469 381h1v1h-1zM636 381h1v1h-1zM502 381h1v1h-1zM644 381h2v2h-2zM614 381h2v2h-2zM601 381h2v2h-2zM504 381h2v2h-2zM496 381h2v2h-2zM413 382h2v1h-2zM682 382h2v2h-2zM404 382h2v2h-2zM514 382h2v2h-2zM614 383h3v1h-3zM626 383h2v1h-2zM412 383h3v1h-3zM540 381h2v4h-2zM497 383h2v2h-2zM563 383h2v2h-2zM537 383h2v2h-2zM547 383h2v2h-2zM469 383h2v2h-2zM416 384h1v1h-1zM614 384h2v1h-2zM444 384h1v1h-1zM625 384h3v1h-3zM640 384h2v2h-2zM572 384h2v2h-2zM621 384h2v2h-2zM516 385h1v1h-1zM635 385h2v2h-2zM468 386h2v2h-2zM688 386h2v2h-2zM550 387h1v1h-1zM523 387h2v2h-2zM473 387h2v2h-2zM536 387h2v2h-2zM510 387h2v2h-2zM493 387h2v2h-2zM406 388h2v1h-2zM688 388h1v1h-1zM665 388h1v1h-1zM569 388h2v2h-2zM434 388h1v2h-1zM428 389h1v1h-1zM406 389h3v1h-3zM487 389h2v2h-2zM407 390h2v1h-2zM503 387h1v5h-1zM426 390h2v2h-2zM584 390h2v2h-2zM415 390h1v3h-1zM459 391h2v2h-2zM698 391h4v2h-4zM639 391h2v2h-2zM493 389h1v5h-1zM653 392h2v2h-2zM597 392h1v2h-1zM412 392h2v2h-2zM585 392h1v3h-1zM470 393h2v2h-2zM581 393h1v2h-1zM477 394h1v1h-1zM551 394h1v1h-1zM429 391h1v5h-1zM515 394h2v2h-2zM521 394h2v2h-2zM581 395h2v1h-2zM564 393h1v4h-1zM685 393h2v4h-2zM550 395h2v2h-2zM443 395h2v2h-2zM621 395h2v2h-2zM628 394h1v4h-1zM534 393h1v6h-1zM582 396h1v3h-1zM473 397h2v2h-2zM639 393h1v7h-1zM626 398h3v2h-3zM622 400h1v1h-1zM682 399h1v3h-1zM533 400h2v2h-2zM539 400h2v2h-2zM557 400h2v2h-2zM517 400h2v2h-2zM631 395h1v8h-1zM628 400h1v3h-1zM493 398h1v6h-1zM555 398h1v7h-1zM678 391h1v17h-1zM600 393h1v15h-1zM665 393h1v15h-1zM434 394h1v14h-1zM502 395h2v13h-2zM584 395h2v13h-2zM705 396h1v12h-1zM415 396h1v12h-1zM562 396h1v12h-1zM597 397h1v11h-1zM551 397h1v11h-1zM531 397h1v11h-1zM477 398h2v10h-2zM421 398h1v10h-1zM481 399h1v9h-1zM581 399h2v9h-2zM429 399h1v9h-1zM564 400h1v8h-1zM685 400h2v8h-2zM534 402h1v6h-1zM639 403h1v5h-1zM682 405h1v3h-1zM628 406h1v2h-1zM631 406h1v2h-1zM493 407h1v1h-1z" fill="#e0206a"/><path d="M490 253h1v1h-1zM450 253h20v1h-20zM676 253h8v1h-8zM613 253h45v1h-45zM672 253h1v1h-1zM502 253h1v1h-1zM413 253h3v1h-3zM544 253h10v1h-10zM532 253h8v2h-8zM420 253h10v2h-10zM662 253h6v2h-6zM686 253h6v2h-6zM510 253h2v2h-2zM434 253h12v2h-12zM474 253h14v2h-14zM694 253h10v2h-10zM598 253h10v2h-10zM516 253h10v2h-10zM558 253h38v2h-38zM614 254h44v1h-44zM676 254h9v1h-9zM414 254h2v1h-2zM609 254h1v1h-1zM543 254h11v1h-11zM432 254h1v1h-1zM449 254h21v1h-21zM708 253h1v3h-1zM691 255h2v1h-2zM672 255h1v1h-1zM482 255h6v1h-6zM492 253h8v4h-8zM404 253h6v4h-6zM564 255h26v2h-26zM556 255h2v2h-2zM450 255h8v2h-8zM694 255h8v2h-8zM624 255h32v2h-32zM432 255h14v2h-14zM610 255h10v2h-10zM674 255h16v2h-16zM598 255h8v2h-8zM462 255h6v2h-6zM594 255h2v2h-2zM474 255h2v2h-2zM470 255h2v2h-2zM412 255h12v2h-12zM532 255h6v2h-6zM502 255h4v2h-4zM512 255h14v2h-14zM508 255h2v2h-2zM542 255h12v2h-12zM707 256h2v1h-2zM481 256h7v1h-7zM527 256h1v1h-1zM549 257h1v1h-1zM636 257h10v1h-10zM431 257h1v1h-1zM611 257h7v1h-7zM634 257h1v1h-1zM660 255h6v4h-6zM458 257h20v2h-20zM412 257h4v2h-4zM496 257h2v2h-2zM536 257h4v2h-4zM562 257h6v2h-6zM602 257h2v2h-2zM434 257h6v2h-6zM486 257h4v2h-4zM672 257h2v2h-2zM424 257h2v2h-2zM442 257h14v2h-14zM620 257h10v2h-10zM694 257h4v2h-4zM704 257h5v2h-5zM480 257h2v2h-2zM544 257h2v2h-2zM508 257h24v2h-24zM648 257h10v2h-10zM572 257h20v2h-20zM594 257h4v2h-4zM676 257h16v2h-16zM552 257h6v2h-6zM701 258h1v1h-1zM612 258h6v1h-6zM422 258h1v1h-1zM570 258h1v1h-1zM636 258h11v1h-11zM416 259h1v1h-1zM484 259h8v1h-8zM648 259h1v1h-1zM608 259h14v1h-14zM410 259h4v1h-4zM404 257h4v4h-4zM676 259h6v2h-6zM452 259h30v2h-30zM598 259h8v2h-8zM422 259h4v2h-4zM504 259h28v2h-28zM546 259h4v2h-4zM540 259h2v2h-2zM578 259h18v2h-18zM624 259h6v2h-6zM430 259h8v2h-8zM568 259h8v2h-8zM632 259h14v2h-14zM690 259h10v2h-10zM444 259h2v2h-2zM534 259h4v2h-4zM556 259h6v2h-6zM652 259h18v2h-18zM409 260h5v1h-5zM484 260h9v1h-9zM428 260h1v1h-1zM610 260h12v1h-12zM580 261h27v1h-27zM610 261h10v1h-10zM408 261h21v1h-21zM516 261h13v1h-13zM532 261h6v1h-6zM708 259h1v4h-1zM496 259h6v4h-6zM448 261h2v2h-2zM506 261h8v2h-8zM548 261h4v2h-4zM624 261h18v2h-18zM688 261h18v2h-18zM440 261h6v2h-6zM452 261h42v2h-42zM554 261h10v2h-10zM652 261h34v2h-34zM432 261h6v2h-6zM568 261h6v2h-6zM610 262h11v1h-11zM408 262h20v1h-20zM516 262h12v1h-12zM532 262h4v1h-4zM580 262h26v1h-26zM530 262h1v1h-1zM460 263h12v1h-12zM520 263h9v1h-9zM543 263h11v1h-11zM676 263h2v1h-2zM558 263h8v1h-8zM624 263h8v2h-8zM686 263h12v2h-12zM700 263h9v2h-9zM672 263h2v2h-2zM476 263h18v2h-18zM404 263h22v2h-22zM570 263h10v2h-10zM540 263h2v2h-2zM582 263h24v2h-24zM610 263h12v2h-12zM532 263h6v2h-6zM648 263h22v2h-22zM498 263h20v2h-20zM430 263h26v2h-26zM676 264h3v1h-3zM557 264h9v1h-9zM459 264h13v1h-13zM643 264h1v1h-1zM519 264h9v1h-9zM544 264h10v1h-10zM665 265h5v1h-5zM567 265h7v1h-7zM632 265h1v1h-1zM521 265h33v1h-33zM404 265h21v1h-21zM555 265h2v1h-2zM634 263h8v4h-8zM682 263h2v4h-2zM428 265h6v2h-6zM462 265h10v2h-10zM482 265h2v2h-2zM592 265h14v2h-14zM644 265h2v2h-2zM492 265h2v2h-2zM498 265h18v2h-18zM688 265h16v2h-16zM708 265h1v2h-1zM476 265h2v2h-2zM672 265h4v2h-4zM560 265h6v2h-6zM518 265h2v2h-2zM582 265h8v2h-8zM608 265h10v2h-10zM578 265h2v2h-2zM438 265h16v2h-16zM458 266h1v1h-1zM486 266h1v1h-1zM679 266h1v1h-1zM568 266h6v1h-6zM496 266h1v1h-1zM666 266h4v1h-4zM575 266h1v1h-1zM522 266h32v1h-32zM624 265h6v3h-6zM552 267h4v1h-4zM657 267h31v1h-31zM690 267h19v1h-19zM640 267h1v1h-1zM648 265h8v4h-8zM404 266h20v3h-20zM516 267h34v2h-34zM462 267h4v2h-4zM558 267h16v2h-16zM444 267h4v2h-4zM428 267h8v2h-8zM456 267h2v2h-2zM592 267h10v2h-10zM614 267h6v2h-6zM576 267h14v2h-14zM634 267h4v2h-4zM476 267h32v2h-32zM440 267h2v2h-2zM551 268h5v1h-5zM623 268h7v1h-7zM689 268h20v1h-20zM658 268h30v1h-30zM468 268h1v1h-1zM688 269h2v1h-2zM616 269h5v1h-5zM578 269h13v1h-13zM441 269h7v1h-7zM626 269h4v1h-4zM512 267h2v4h-2zM610 267h2v4h-2zM606 269h2v2h-2zM470 269h34v2h-34zM554 269h22v2h-22zM692 269h10v2h-10zM526 269h24v2h-24zM424 269h14v2h-14zM638 269h4v2h-4zM646 269h12v2h-12zM632 269h2v2h-2zM454 269h12v2h-12zM594 269h4v2h-4zM516 269h4v2h-4zM678 269h8v2h-8zM404 269h12v2h-12zM660 269h14v2h-14zM442 270h6v1h-6zM468 270h1v1h-1zM523 270h1v1h-1zM616 270h4v1h-4zM578 270h12v1h-12zM688 270h3v1h-3zM676 270h1v1h-1zM628 270h2v1h-2zM482 271h20v1h-20zM552 271h2v1h-2zM698 271h4v1h-4zM654 271h2v1h-2zM470 271h10v1h-10zM618 271h4v1h-4zM704 269h5v4h-5zM512 271h4v2h-4zM454 271h14v2h-14zM690 271h6v2h-6zM426 271h4v2h-4zM658 271h12v2h-12zM410 271h2v2h-2zM556 271h32v2h-32zM592 271h4v2h-4zM524 271h20v2h-20zM546 271h4v2h-4zM676 271h8v2h-8zM404 271h4v2h-4zM432 271h16v2h-16zM630 271h4v2h-4zM636 271h14v2h-14zM416 271h2v2h-2zM504 271h2v2h-2zM600 271h14v2h-14zM673 272h1v1h-1zM517 272h1v1h-1zM651 272h1v1h-1zM654 272h3v1h-3zM617 272h5v1h-5zM551 272h3v1h-3zM470 272h32v1h-32zM452 272h1v1h-1zM697 272h5v1h-5zM430 273h1v1h-1zM655 273h1v1h-1zM686 273h15v1h-15zM487 273h1v1h-1zM616 273h4v1h-4zM625 273h1v1h-1zM523 273h3v1h-3zM472 273h2v1h-2zM645 273h1v1h-1zM476 273h4v2h-4zM672 273h12v2h-12zM404 273h8v2h-8zM414 273h8v2h-8zM628 273h16v2h-16zM520 273h2v2h-2zM432 273h38v2h-38zM530 273h8v2h-8zM658 273h8v2h-8zM548 273h66v2h-66zM622 273h2v2h-2zM648 273h4v2h-4zM542 273h4v2h-4zM490 273h8v2h-8zM616 274h5v1h-5zM524 274h2v1h-2zM686 274h14v1h-14zM472 274h3v1h-3zM482 273h4v3h-4zM512 273h2v3h-2zM549 275h7v1h-7zM634 275h5v1h-5zM532 275h4v1h-4zM436 275h40v1h-40zM660 275h20v1h-20zM521 275h7v1h-7zM506 273h2v4h-2zM704 273h2v4h-2zM646 275h10v2h-10zM578 275h4v2h-4zM594 275h2v2h-2zM488 275h14v2h-14zM414 275h16v2h-16zM588 275h4v2h-4zM606 275h6v2h-6zM540 275h8v2h-8zM682 275h20v2h-20zM560 275h12v2h-12zM404 275h6v2h-6zM518 275h2v2h-2zM600 275h2v2h-2zM642 275h2v2h-2zM616 275h12v2h-12zM532 276h5v1h-5zM511 276h3v1h-3zM435 276h41v1h-41zM482 276h5v1h-5zM522 276h6v1h-6zM659 276h21v1h-21zM634 276h4v1h-4zM550 276h6v1h-6zM577 277h7v1h-7zM546 277h2v1h-2zM660 277h7v1h-7zM591 277h1v1h-1zM490 277h6v1h-6zM565 277h1v1h-1zM514 277h6v1h-6zM608 277h1v1h-1zM616 277h9v1h-9zM568 277h4v2h-4zM586 277h4v2h-4zM418 277h14v2h-14zM668 277h6v2h-6zM600 277h4v2h-4zM610 277h4v2h-4zM628 277h4v2h-4zM434 277h6v2h-6zM550 277h4v2h-4zM642 277h16v2h-16zM530 277h8v2h-8zM523 277h3v2h-3zM682 277h14v2h-14zM446 277h28v2h-28zM504 277h8v2h-8zM700 277h4v2h-4zM480 277h7v2h-7zM634 277h6v2h-6zM490 278h7v1h-7zM616 278h8v1h-8zM514 278h7v1h-7zM477 278h1v1h-1zM545 278h3v1h-3zM660 278h6v1h-6zM578 278h6v1h-6zM677 278h1v1h-1zM562 278h1v1h-1zM708 275h1v5h-1zM673 279h1v1h-1zM545 279h15v1h-15zM477 279h6v1h-6zM626 279h1v1h-1zM529 279h1v1h-1zM512 279h14v1h-14zM443 279h1v1h-1zM404 277h12v4h-12zM486 279h2v2h-2zM628 279h20v2h-20zM428 279h12v2h-12zM606 279h8v2h-8zM698 279h2v2h-2zM456 279h18v2h-18zM652 279h14v2h-14zM500 279h10v2h-10zM702 279h4v2h-4zM446 279h8v2h-8zM675 279h1v2h-1zM562 279h2v2h-2zM540 279h2v2h-2zM680 279h16v2h-16zM532 279h6v2h-6zM570 279h22v2h-22zM490 279h8v2h-8zM594 279h10v2h-10zM616 279h6v2h-6zM546 280h14v1h-14zM417 280h1v1h-1zM513 280h13v1h-13zM478 280h4v1h-4zM423 280h1v1h-1zM426 281h6v1h-6zM708 281h1v1h-1zM699 281h1v1h-1zM646 281h2v1h-2zM562 281h16v2h-16zM628 281h14v2h-14zM422 281h2v2h-2zM454 281h14v2h-14zM554 281h4v2h-4zM486 281h38v2h-38zM404 281h14v2h-14zM470 281h12v2h-12zM532 281h4v2h-4zM604 281h12v2h-12zM436 281h16v2h-16zM704 281h2v2h-2zM582 281h18v2h-18zM674 281h24v2h-24zM650 281h14v2h-14zM542 281h6v2h-6zM601 282h1v1h-1zM645 282h3v1h-3zM428 282h4v1h-4zM577 283h1v1h-1zM416 283h1v1h-1zM674 283h1v1h-1zM459 283h7v1h-7zM579 283h17v1h-17zM683 283h3v1h-3zM699 283h1v1h-1zM530 283h1v1h-1zM626 283h4v1h-4zM618 281h4v4h-4zM436 283h8v2h-8zM604 283h10v2h-10zM486 283h8v2h-8zM690 283h6v2h-6zM404 283h8v2h-8zM428 283h2v2h-2zM634 283h20v2h-20zM702 283h4v2h-4zM446 283h8v2h-8zM658 283h2v2h-2zM470 283h14v2h-14zM562 283h8v2h-8zM504 283h24v2h-24zM558 283h2v2h-2zM662 283h4v2h-4zM538 283h10v2h-10zM678 283h2v2h-2zM460 284h6v1h-6zM421 284h1v1h-1zM625 284h5v1h-5zM578 284h1v1h-1zM688 284h1v1h-1zM418 284h1v1h-1zM580 284h17v1h-17zM552 284h1v1h-1zM647 285h5v1h-5zM688 285h8v1h-8zM490 285h6v1h-6zM510 285h1v1h-1zM488 285h1v1h-1zM697 285h2v1h-2zM645 285h1v1h-1zM684 284h2v3h-2zM500 285h8v2h-8zM632 285h4v2h-4zM533 285h5v2h-5zM456 285h30v2h-30zM602 285h2v2h-2zM610 285h4v2h-4zM550 285h4v2h-4zM514 285h10v2h-10zM620 285h10v2h-10zM590 285h2v2h-2zM704 285h5v2h-5zM578 285h6v2h-6zM564 285h12v2h-12zM434 285h20v2h-20zM416 285h8v2h-8zM660 285h2v2h-2zM426 285h2v2h-2zM638 285h6v2h-6zM544 285h4v2h-4zM666 285h6v2h-6zM509 286h2v1h-2zM648 286h4v1h-4zM653 286h1v1h-1zM585 286h1v1h-1zM688 286h9v1h-9zM655 286h2v1h-2zM489 286h7v1h-7zM700 286h1v1h-1zM524 287h2v1h-2zM608 287h30v1h-30zM556 287h1v1h-1zM656 287h6v1h-6zM404 285h6v4h-6zM514 287h8v2h-8zM598 287h6v2h-6zM502 287h6v2h-6zM688 287h8v2h-8zM546 287h8v2h-8zM538 287h6v2h-6zM698 287h11v2h-11zM510 287h2v2h-2zM666 287h2v2h-2zM484 287h2v2h-2zM588 287h4v2h-4zM412 287h30v2h-30zM494 287h2v2h-2zM670 287h12v2h-12zM528 287h6v2h-6zM560 287h18v2h-18zM446 287h34v2h-34zM642 287h8v2h-8zM683 288h1v1h-1zM656 288h7v1h-7zM652 288h1v1h-1zM607 288h31v1h-31zM654 288h1v1h-1zM524 288h3v1h-3zM641 289h1v1h-1zM656 289h1v1h-1zM547 289h1v1h-1zM580 287h6v4h-6zM506 289h24v2h-24zM408 289h8v2h-8zM404 289h2v2h-2zM482 289h8v2h-8zM442 289h18v2h-18zM590 289h6v2h-6zM552 289h20v2h-20zM492 289h8v2h-8zM532 289h10v2h-10zM618 289h12v2h-12zM658 289h2v2h-2zM462 289h18v2h-18zM664 289h18v2h-18zM576 289h2v2h-2zM644 289h10v2h-10zM598 289h16v2h-16zM632 289h8v2h-8zM690 289h4v2h-4zM704 289h4v2h-4zM573 290h1v1h-1zM683 290h1v1h-1zM615 290h1v1h-1zM418 290h1v1h-1zM588 290h1v1h-1zM658 291h6v1h-6zM584 291h5v1h-5zM618 291h5v1h-5zM505 291h21v1h-21zM666 291h15v1h-15zM420 289h14v4h-14zM532 291h8v2h-8zM528 291h2v2h-2zM688 291h8v2h-8zM576 291h6v2h-6zM644 291h8v2h-8zM436 291h4v2h-4zM564 291h10v2h-10zM552 291h10v2h-10zM468 291h6v2h-6zM654 291h2v2h-2zM462 291h2v2h-2zM706 291h2v2h-2zM592 291h24v2h-24zM626 291h16v2h-16zM444 291h14v2h-14zM478 291h24v2h-24zM702 291h2v2h-2zM666 292h14v1h-14zM506 292h20v1h-20zM657 292h7v1h-7zM584 292h4v1h-4zM618 292h4v1h-4zM476 293h1v1h-1zM664 293h1v1h-1zM448 293h16v1h-16zM478 293h17v1h-17zM630 293h14v1h-14zM528 293h19v1h-19zM645 293h1v1h-1zM648 293h7v1h-7zM602 293h4v1h-4zM404 291h14v4h-14zM420 293h4v2h-4zM500 293h26v2h-26zM586 293h4v2h-4zM496 293h2v2h-2zM466 293h6v2h-6zM700 293h9v2h-9zM428 293h8v2h-8zM592 293h4v2h-4zM620 293h4v2h-4zM440 293h6v2h-6zM666 293h28v2h-28zM658 293h4v2h-4zM568 293h14v2h-14zM552 293h12v2h-12zM630 294h15v1h-15zM583 294h1v1h-1zM478 294h16v1h-16zM448 294h17v1h-17zM528 294h18v1h-18zM648 294h6v1h-6zM601 294h5v1h-5zM475 294h1v1h-1zM425 295h13v1h-13zM510 295h11v1h-11zM562 295h3v1h-3zM500 295h7v1h-7zM689 295h6v1h-6zM700 295h1v1h-1zM614 293h4v4h-4zM548 293h2v4h-2zM446 295h6v2h-6zM658 295h6v2h-6zM534 295h6v2h-6zM440 295h4v2h-4zM404 295h20v2h-20zM480 295h18v2h-18zM702 295h7v2h-7zM650 295h6v2h-6zM456 295h20v2h-20zM526 295h2v2h-2zM680 295h4v2h-4zM666 295h10v2h-10zM630 295h4v2h-4zM578 295h18v2h-18zM568 295h8v2h-8zM646 295h2v2h-2zM638 295h6v2h-6zM552 295h6v2h-6zM610 295h2v2h-2zM602 295h6v2h-6zM426 296h12v1h-12zM510 296h10v1h-10zM562 296h2v1h-2zM500 296h6v1h-6zM690 296h4v1h-4zM652 297h5v1h-5zM585 297h12v1h-12zM684 297h5v1h-5zM634 297h5v1h-5zM626 297h5v1h-5zM678 297h3v1h-3zM640 297h11v1h-11zM404 297h30v2h-30zM524 297h6v2h-6zM560 297h2v2h-2zM664 297h4v2h-4zM690 297h6v2h-6zM602 297h20v2h-20zM566 297h2v2h-2zM520 297h2v2h-2zM454 297h22v2h-22zM444 297h6v2h-6zM534 297h8v2h-8zM572 297h2v2h-2zM436 297h6v2h-6zM672 297h4v2h-4zM658 297h4v2h-4zM582 297h2v2h-2zM548 297h10v2h-10zM478 297h24v2h-24zM586 298h10v1h-10zM514 298h1v1h-1zM564 298h1v1h-1zM684 298h4v1h-4zM652 298h4v1h-4zM634 298h4v1h-4zM626 298h4v1h-4zM678 298h2v1h-2zM640 298h10v1h-10zM504 297h8v3h-8zM660 299h1v1h-1zM552 299h2v1h-2zM555 299h1v1h-1zM557 299h5v1h-5zM404 299h10v1h-10zM478 299h22v1h-22zM585 299h1v1h-1zM470 299h4v1h-4zM700 297h9v4h-9zM596 299h2v2h-2zM564 299h8v2h-8zM670 299h8v2h-8zM632 299h4v2h-4zM464 299h2v2h-2zM418 299h14v2h-14zM666 299h2v2h-2zM514 299h4v2h-4zM613 299h9v2h-9zM434 299h24v2h-24zM532 299h16v2h-16zM626 299h2v2h-2zM580 299h2v2h-2zM576 299h2v2h-2zM646 299h12v2h-12zM600 299h12v2h-12zM522 299h8v2h-8zM588 299h6v2h-6zM680 299h12v2h-12zM558 300h4v1h-4zM477 300h23v1h-23zM510 300h2v1h-2zM469 300h5v1h-5zM404 300h11v1h-11zM504 300h4v1h-4zM661 300h1v1h-1zM698 300h1v1h-1zM552 300h3v1h-3zM628 301h10v1h-10zM478 301h35v1h-35zM676 301h8v1h-8zM642 301h3v1h-3zM601 301h3v1h-3zM618 301h8v1h-8zM598 301h1v1h-1zM520 301h6v2h-6zM404 301h8v2h-8zM590 301h6v2h-6zM555 301h1v2h-1zM550 301h4v2h-4zM562 301h18v2h-18zM462 301h6v2h-6zM470 301h2v2h-2zM414 301h22v2h-22zM440 301h18v2h-18zM584 301h4v2h-4zM530 301h16v2h-16zM694 301h15v2h-15zM608 301h4v2h-4zM514 301h2v2h-2zM646 301h26v2h-26zM598 302h6v1h-6zM642 302h2v1h-2zM676 302h9v1h-9zM617 302h9v1h-9zM473 302h1v1h-1zM639 302h1v1h-1zM627 302h11v1h-11zM478 302h34v1h-34zM549 303h1v1h-1zM439 303h24v1h-24zM435 303h3v1h-3zM589 303h1v1h-1zM566 303h22v1h-22zM686 303h1v1h-1zM532 303h14v2h-14zM606 303h8v2h-8zM698 303h11v2h-11zM694 303h2v2h-2zM520 303h8v2h-8zM500 303h2v2h-2zM690 303h2v2h-2zM508 303h6v2h-6zM624 303h46v2h-46zM420 303h14v2h-14zM466 303h32v2h-32zM554 303h8v2h-8zM594 303h10v2h-10zM404 303h6v2h-6zM618 303h4v2h-4zM674 303h8v2h-8zM436 304h2v1h-2zM591 304h1v1h-1zM440 304h22v1h-22zM550 304h1v1h-1zM566 304h23v1h-23zM700 305h7v1h-7zM458 305h13v1h-13zM558 305h6v1h-6zM420 305h15v1h-15zM687 305h9v1h-9zM638 305h1v1h-1zM677 305h1v1h-1zM438 305h19v1h-19zM664 305h4v2h-4zM412 305h4v2h-4zM640 305h6v2h-6zM552 305h2v2h-2zM504 305h10v2h-10zM584 305h2v2h-2zM546 305h4v2h-4zM592 305h16v2h-16zM568 305h12v2h-12zM404 305h4v2h-4zM622 305h14v2h-14zM516 305h26v2h-26zM670 305h6v2h-6zM614 305h2v2h-2zM474 305h28v2h-28zM688 306h8v1h-8zM637 306h1v1h-1zM417 306h1v1h-1zM438 306h18v1h-18zM700 306h6v1h-6zM620 306h1v1h-1zM684 306h1v1h-1zM458 306h12v1h-12zM420 306h14v1h-14zM566 306h1v1h-1zM557 306h7v1h-7zM589 307h3v1h-3zM456 307h3v1h-3zM686 307h20v1h-20zM594 307h1v1h-1zM426 307h2v1h-2zM472 307h2v1h-2zM610 307h2v1h-2zM680 305h2v4h-2zM652 305h4v4h-4zM708 305h1v4h-1zM556 307h30v2h-30zM422 307h2v2h-2zM404 307h14v2h-14zM616 307h20v2h-20zM662 307h14v2h-14zM658 307h2v2h-2zM640 307h8v2h-8zM478 307h16v2h-16zM512 307h42v2h-42zM598 307h10v2h-10zM434 307h20v2h-20zM496 307h12v2h-12zM590 308h3v1h-3zM471 308h3v1h-3zM456 308h2v1h-2zM426 308h3v1h-3zM610 308h3v1h-3zM685 308h22v1h-22zM471 309h1v1h-1zM595 309h1v1h-1zM633 309h1v1h-1zM638 309h1v1h-1zM510 309h1v1h-1zM431 309h3v1h-3zM593 309h1v1h-1zM630 309h1v1h-1zM598 309h1v1h-1zM473 309h3v1h-3zM698 309h9v1h-9zM416 309h4v2h-4zM568 309h16v2h-16zM517 309h1v2h-1zM438 309h6v2h-6zM428 309h2v2h-2zM604 309h24v2h-24zM690 309h2v2h-2zM528 309h34v2h-34zM640 309h14v2h-14zM478 309h28v2h-28zM656 309h24v2h-24zM520 309h4v2h-4zM586 309h2v2h-2zM682 309h4v2h-4zM698 310h8v1h-8zM432 310h2v1h-2zM474 310h2v1h-2zM635 310h1v1h-1zM511 310h1v1h-1zM637 310h2v1h-2zM471 311h1v1h-1zM476 311h4v1h-4zM522 311h4v1h-4zM629 311h5v1h-5zM553 311h9v1h-9zM566 311h2v1h-2zM647 311h1v1h-1zM528 311h4v1h-4zM649 311h17v1h-17zM518 311h2v1h-2zM534 311h10v1h-10zM460 307h8v6h-8zM448 309h10v4h-10zM404 309h6v4h-6zM598 311h6v2h-6zM422 311h8v2h-8zM418 311h2v2h-2zM482 311h2v2h-2zM586 311h10v2h-10zM640 311h6v2h-6zM572 311h12v2h-12zM672 311h8v2h-8zM706 311h3v2h-3zM612 311h14v2h-14zM496 311h10v2h-10zM512 311h2v2h-2zM486 311h6v2h-6zM684 311h18v2h-18zM434 311h10v2h-10zM474 312h6v1h-6zM650 312h16v1h-16zM533 312h11v1h-11zM570 312h1v1h-1zM630 312h4v1h-4zM554 312h8v1h-8zM565 312h3v1h-3zM518 312h8v1h-8zM527 312h5v1h-5zM485 313h1v1h-1zM428 313h2v1h-2zM478 313h1v1h-1zM487 313h1v1h-1zM552 313h4v1h-4zM614 313h12v1h-12zM635 313h1v1h-1zM658 313h13v1h-13zM676 313h4v1h-4zM560 313h8v2h-8zM570 313h30v2h-30zM470 313h6v2h-6zM602 313h8v2h-8zM702 313h7v2h-7zM650 313h6v2h-6zM686 313h2v2h-2zM638 313h4v2h-4zM494 313h36v2h-36zM534 313h14v2h-14zM404 313h22v2h-22zM682 313h2v2h-2zM692 313h6v2h-6zM458 313h6v2h-6zM632 313h2v2h-2zM646 313h2v2h-2zM551 314h5v1h-5zM481 314h1v1h-1zM658 314h12v1h-12zM675 314h5v1h-5zM614 314h13v1h-13zM628 314h1v1h-1zM427 314h3v1h-3zM471 315h1v1h-1zM520 315h6v1h-6zM491 315h1v1h-1zM658 315h14v1h-14zM585 315h1v1h-1zM434 313h16v4h-16zM468 315h2v2h-2zM420 315h10v2h-10zM588 315h36v2h-36zM684 315h8v2h-8zM626 315h2v2h-2zM558 315h24v2h-24zM496 315h16v2h-16zM476 315h2v2h-2zM630 315h4v2h-4zM540 315h14v2h-14zM528 315h6v2h-6zM404 315h6v2h-6zM646 315h8v2h-8zM694 315h15v2h-15zM480 315h4v2h-4zM514 315h2v2h-2zM674 315h8v2h-8zM458 315h8v2h-8zM658 316h15v1h-15zM583 316h1v1h-1zM520 316h7v1h-7zM476 317h4v1h-4zM602 317h33v1h-33zM412 317h1v1h-1zM458 317h10v1h-10zM592 317h1v1h-1zM584 317h1v1h-1zM538 317h1v1h-1zM433 317h7v1h-7zM599 317h1v1h-1zM454 317h2v2h-2zM488 317h6v2h-6zM586 317h4v2h-4zM644 317h48v2h-48zM556 317h26v2h-26zM696 317h6v2h-6zM496 317h32v2h-32zM482 317h4v2h-4zM404 317h4v2h-4zM444 317h6v2h-6zM594 317h4v2h-4zM530 317h4v2h-4zM544 317h10v2h-10zM414 317h18v2h-18zM434 318h6v1h-6zM602 318h32v1h-32zM542 318h1v1h-1zM475 318h5v1h-5zM457 318h11v1h-11zM452 318h1v1h-1zM416 319h1v1h-1zM670 319h14v1h-14zM404 319h5v1h-5zM693 319h7v1h-7zM442 319h17v1h-17zM542 319h10v1h-10zM706 317h3v4h-3zM640 317h2v4h-2zM436 319h2v2h-2zM590 319h9v2h-9zM468 319h4v2h-4zM500 319h10v2h-10zM564 319h16v2h-16zM630 319h8v2h-8zM646 319h12v2h-12zM474 319h4v2h-4zM660 319h2v2h-2zM418 319h12v2h-12zM482 319h12v2h-12zM602 319h6v2h-6zM610 319h14v2h-14zM542 320h11v1h-11zM689 320h1v1h-1zM556 320h1v1h-1zM404 320h4v1h-4zM669 320h15v1h-15zM561 320h1v1h-1zM442 320h16v1h-16zM694 320h6v1h-6zM434 320h1v1h-1zM573 321h1v1h-1zM659 321h3v1h-3zM501 321h1v1h-1zM437 321h1v1h-1zM571 321h1v1h-1zM576 321h4v1h-4zM514 319h22v4h-22zM420 321h10v2h-10zM508 321h4v2h-4zM642 321h4v2h-4zM540 321h12v2h-12zM622 321h2v2h-2zM592 321h28v2h-28zM432 321h4v2h-4zM466 321h8v2h-8zM440 321h18v2h-18zM558 321h8v2h-8zM568 321h2v2h-2zM584 321h4v2h-4zM630 321h10v2h-10zM554 321h2v2h-2zM650 321h2v2h-2zM690 321h16v2h-16zM668 321h16v2h-16zM478 321h12v2h-12zM495 322h1v1h-1zM576 322h5v1h-5zM660 322h2v1h-2zM627 322h1v1h-1zM496 323h2v1h-2zM559 323h7v1h-7zM416 323h18v1h-18zM406 323h2v1h-2zM668 323h14v1h-14zM464 323h28v1h-28zM511 323h1v1h-1zM594 323h1v1h-1zM591 323h2v1h-2zM596 323h2v2h-2zM568 323h4v2h-4zM658 323h6v2h-6zM586 323h4v2h-4zM442 323h18v2h-18zM500 323h4v2h-4zM538 323h2v2h-2zM706 323h3v2h-3zM626 323h8v2h-8zM548 323h2v2h-2zM544 323h2v2h-2zM602 323h16v2h-16zM692 323h12v2h-12zM582 323h2v2h-2zM686 323h4v2h-4zM516 323h4v2h-4zM522 323h14v2h-14zM648 323h6v2h-6zM463 324h29v1h-29zM406 324h3v1h-3zM668 324h15v1h-15zM510 324h1v1h-1zM495 324h3v1h-3zM560 324h6v1h-6zM507 324h1v1h-1zM416 324h20v1h-20zM636 323h10v3h-10zM521 325h25v1h-25zM517 325h1v1h-1zM440 325h1v1h-1zM620 325h1v1h-1zM510 325h4v1h-4zM678 325h9v1h-9zM688 325h6v1h-6zM562 325h16v2h-16zM650 325h4v2h-4zM444 325h4v2h-4zM594 325h6v2h-6zM698 325h11v2h-11zM622 325h12v2h-12zM452 325h42v2h-42zM420 325h18v2h-18zM408 325h10v2h-10zM658 325h14v2h-14zM496 325h10v2h-10zM558 325h2v2h-2zM586 325h2v2h-2zM580 325h4v2h-4zM608 325h10v2h-10zM554 326h1v1h-1zM510 326h5v1h-5zM635 326h11v1h-11zM688 326h7v1h-7zM522 326h24v1h-24zM678 326h8v1h-8zM696 327h10v1h-10zM513 327h1v1h-1zM652 327h20v1h-20zM410 327h8v1h-8zM693 327h1v1h-1zM464 327h1v1h-1zM530 327h17v1h-17zM570 327h19v1h-19zM636 327h10v2h-10zM422 327h14v2h-14zM684 327h8v2h-8zM614 327h10v2h-10zM590 327h12v2h-12zM458 327h4v2h-4zM626 327h8v2h-8zM676 327h2v2h-2zM608 327h2v2h-2zM440 327h6v2h-6zM494 327h2v2h-2zM550 327h12v2h-12zM466 327h26v2h-26zM452 327h4v2h-4zM516 327h10v2h-10zM498 327h4v2h-4zM410 328h9v1h-9zM570 328h18v1h-18zM568 328h1v1h-1zM652 328h21v1h-21zM696 328h11v1h-11zM530 328h16v1h-16zM512 329h4v1h-4zM504 329h1v1h-1zM528 329h16v1h-16zM566 329h1v1h-1zM408 329h12v1h-12zM526 329h1v1h-1zM404 325h2v6h-2zM550 329h14v2h-14zM448 329h4v2h-4zM568 329h10v2h-10zM694 329h2v2h-2zM608 329h6v2h-6zM598 329h8v2h-8zM456 329h2v2h-2zM498 329h2v2h-2zM506 329h4v2h-4zM634 329h10v2h-10zM480 329h14v2h-14zM462 329h14v2h-14zM422 329h24v2h-24zM518 329h2v2h-2zM588 329h6v2h-6zM616 329h12v2h-12zM408 330h13v1h-13zM530 330h14v1h-14zM512 330h5v1h-5zM631 330h1v1h-1zM691 330h1v1h-1zM586 331h1v1h-1zM518 331h4v1h-4zM642 331h1v1h-1zM644 331h2v1h-2zM596 331h16v1h-16zM692 331h2v1h-2zM618 331h2v1h-2zM528 331h6v1h-6zM578 331h2v1h-2zM652 329h20v4h-20zM676 329h14v4h-14zM698 329h6v4h-6zM624 331h8v2h-8zM538 331h6v2h-6zM462 331h16v2h-16zM548 331h6v2h-6zM648 331h2v2h-2zM524 331h2v2h-2zM560 331h16v2h-16zM404 331h10v2h-10zM588 331h4v2h-4zM502 331h10v2h-10zM420 331h32v2h-32zM480 331h10v2h-10zM634 331h6v2h-6zM644 332h3v1h-3zM696 332h1v1h-1zM617 332h3v1h-3zM528 332h7v1h-7zM518 332h3v1h-3zM692 332h3v1h-3zM578 332h3v1h-3zM516 332h1v1h-1zM595 332h17v1h-17zM592 333h2v1h-2zM595 333h1v1h-1zM513 333h1v1h-1zM479 333h15v1h-15zM634 333h8v1h-8zM597 333h7v1h-7zM404 333h1v1h-1zM561 333h1v1h-1zM511 333h1v1h-1zM676 333h1v1h-1zM408 333h8v2h-8zM564 333h26v2h-26zM700 333h6v2h-6zM682 333h12v2h-12zM500 333h10v2h-10zM462 333h12v2h-12zM444 333h12v2h-12zM516 333h20v2h-20zM618 333h2v2h-2zM708 333h1v2h-1zM558 333h2v2h-2zM540 333h14v2h-14zM420 333h20v2h-20zM622 333h4v2h-4zM614 333h2v2h-2zM608 333h4v2h-4zM646 333h26v2h-26zM598 334h6v1h-6zM697 334h1v1h-1zM556 334h1v1h-1zM480 334h14v1h-14zM592 334h3v1h-3zM634 334h9v1h-9zM604 335h7v1h-7zM541 335h11v1h-11zM490 335h4v1h-4zM553 335h3v1h-3zM500 335h9v1h-9zM696 335h2v1h-2zM434 335h1v1h-1zM416 335h4v2h-4zM460 335h18v2h-18zM626 335h6v2h-6zM520 335h18v2h-18zM496 335h2v2h-2zM700 335h9v2h-9zM436 335h4v2h-4zM558 335h12v2h-12zM424 335h8v2h-8zM586 335h6v2h-6zM676 335h2v2h-2zM406 335h8v2h-8zM636 335h2v2h-2zM598 335h4v2h-4zM662 335h10v2h-10zM688 335h6v2h-6zM442 335h16v2h-16zM574 335h6v2h-6zM614 335h8v2h-8zM514 335h2v2h-2zM640 335h16v2h-16zM500 336h8v1h-8zM421 336h1v1h-1zM542 336h11v1h-11zM604 336h6v1h-6zM696 336h3v1h-3zM489 336h5v1h-5zM483 336h1v1h-1zM554 336h2v1h-2zM586 337h7v1h-7zM419 337h1v1h-1zM498 337h17v1h-17zM412 337h2v1h-2zM620 337h12v1h-12zM646 337h8v1h-8zM604 337h10v2h-10zM662 337h6v2h-6zM422 337h8v2h-8zM692 337h17v2h-17zM556 337h14v2h-14zM478 337h8v2h-8zM578 337h4v2h-4zM516 337h36v2h-36zM432 337h44v2h-44zM686 337h2v2h-2zM672 337h4v2h-4zM594 337h4v2h-4zM490 337h2v2h-2zM678 337h2v2h-2zM634 337h6v2h-6zM498 338h16v1h-16zM642 338h1v1h-1zM417 338h1v1h-1zM586 338h6v1h-6zM412 338h3v1h-3zM620 338h13v1h-13zM644 338h10v1h-10zM681 338h1v1h-1zM571 338h1v1h-1zM602 339h12v1h-12zM679 339h2v1h-2zM531 339h1v1h-1zM422 339h54v2h-54zM578 339h20v2h-20zM670 339h2v2h-2zM684 339h2v2h-2zM478 339h14v2h-14zM534 339h24v2h-24zM410 339h2v2h-2zM564 339h10v2h-10zM516 339h14v2h-14zM704 339h5v2h-5zM623 339h45v2h-45zM690 339h10v2h-10zM414 339h6v2h-6zM674 339h2v2h-2zM496 339h18v2h-18zM619 340h1v1h-1zM602 340h13v1h-13zM543 341h13v1h-13zM532 341h8v2h-8zM628 341h20v2h-20zM696 341h4v2h-4zM578 341h26v2h-26zM482 341h8v2h-8zM614 341h10v2h-10zM702 341h7v2h-7zM672 341h2v2h-2zM560 341h4v2h-4zM566 341h8v2h-8zM650 341h18v2h-18zM494 341h36v2h-36zM680 341h4v2h-4zM440 341h36v2h-36zM686 341h4v2h-4zM608 341h4v2h-4zM412 341h26v2h-26zM544 342h12v1h-12zM606 342h1v1h-1zM542 342h1v1h-1zM410 342h1v1h-1zM691 342h1v1h-1zM444 343h7v1h-7zM541 343h1v1h-1zM608 343h21v1h-21zM649 343h1v1h-1zM701 343h8v1h-8zM668 343h7v1h-7zM569 343h33v1h-33zM404 337h4v8h-4zM630 343h18v2h-18zM482 343h2v2h-2zM558 343h6v2h-6zM548 343h2v2h-2zM500 343h34v2h-34zM652 343h13v2h-13zM678 343h6v2h-6zM544 343h2v2h-2zM462 343h14v2h-14zM554 343h2v2h-2zM688 343h12v2h-12zM412 343h14v2h-14zM440 343h2v2h-2zM540 344h1v1h-1zM666 344h8v1h-8zM477 344h1v1h-1zM702 344h7v1h-7zM570 344h32v1h-32zM444 344h6v1h-6zM608 344h20v1h-20zM603 344h1v1h-1zM560 345h2v1h-2zM620 345h8v1h-8zM440 345h1v1h-1zM579 345h1v1h-1zM708 345h1v1h-1zM632 345h2v1h-2zM704 345h1v1h-1zM691 345h1v1h-1zM428 343h8v4h-8zM486 343h12v4h-12zM454 345h2v2h-2zM538 345h6v2h-6zM500 345h32v2h-32zM464 345h14v2h-14zM546 345h4v2h-4zM442 345h8v2h-8zM534 345h2v2h-2zM680 345h10v2h-10zM638 345h22v2h-22zM700 345h2v2h-2zM582 345h24v2h-24zM696 345h2v2h-2zM664 345h14v2h-14zM458 345h2v2h-2zM570 345h6v2h-6zM620 346h5v1h-5zM631 346h3v1h-3zM615 346h1v1h-1zM635 346h1v1h-1zM627 346h1v1h-1zM550 347h1v1h-1zM464 347h53v1h-53zM630 347h5v1h-5zM608 347h5v1h-5zM552 345h2v4h-2zM404 345h22v4h-22zM636 347h22v2h-22zM448 347h10v2h-10zM556 347h2v2h-2zM530 347h12v2h-12zM620 347h8v2h-8zM614 347h4v2h-4zM438 347h6v2h-6zM582 347h4v2h-4zM560 347h4v2h-4zM566 347h14v2h-14zM706 347h3v2h-3zM694 347h10v2h-10zM518 347h6v2h-6zM682 347h8v2h-8zM544 347h4v2h-4zM660 347h20v2h-20zM590 347h16v2h-16zM464 348h52v1h-52zM630 348h4v1h-4zM608 348h4v1h-4zM425 349h1v1h-1zM438 349h21v1h-21zM535 349h1v1h-1zM656 349h5v1h-5zM654 349h1v1h-1zM411 349h13v2h-13zM546 349h2v2h-2zM666 349h2v2h-2zM520 349h14v2h-14zM510 349h4v2h-4zM404 349h4v2h-4zM474 349h26v2h-26zM428 349h1v2h-1zM540 349h2v2h-2zM588 349h62v2h-62zM460 349h4v2h-4zM570 349h16v2h-16zM550 349h6v2h-6zM502 349h4v2h-4zM672 349h37v2h-37zM656 350h4v1h-4zM432 350h1v1h-1zM438 350h20v1h-20zM543 350h1v1h-1zM683 351h1v1h-1zM417 351h7v1h-7zM428 351h4v1h-4zM510 351h6v1h-6zM468 349h2v4h-2zM438 351h28v2h-28zM670 351h8v2h-8zM486 351h8v2h-8zM664 351h4v2h-4zM504 351h4v2h-4zM472 351h10v2h-10zM616 351h32v2h-32zM568 351h24v2h-24zM656 351h6v2h-6zM434 351h2v2h-2zM686 351h23v2h-23zM558 351h2v2h-2zM408 351h6v2h-6zM520 351h16v2h-16zM538 351h16v2h-16zM498 351h4v2h-4zM427 352h5v1h-5zM509 352h7v1h-7zM561 352h1v1h-1zM418 352h6v1h-6zM560 353h20v1h-20zM418 353h8v1h-8zM428 353h1v1h-1zM685 353h7v1h-7zM528 353h15v1h-15zM557 353h1v1h-1zM596 351h16v4h-16zM546 353h8v2h-8zM432 353h2v2h-2zM518 353h4v2h-4zM494 353h6v2h-6zM706 353h3v2h-3zM456 353h8v2h-8zM482 353h10v2h-10zM694 353h10v2h-10zM466 353h14v2h-14zM444 353h8v2h-8zM508 353h8v2h-8zM582 353h8v2h-8zM406 353h10v2h-10zM504 353h2v2h-2zM616 353h64v2h-64zM528 354h14v1h-14zM686 354h6v1h-6zM591 354h1v1h-1zM560 354h4v1h-4zM566 354h14v1h-14zM418 354h10v1h-10zM598 355h3v1h-3zM692 355h1v1h-1zM508 355h3v1h-3zM440 355h2v1h-2zM436 355h2v2h-2zM604 355h10v2h-10zM446 355h6v2h-6zM454 355h8v2h-8zM464 355h2v2h-2zM564 355h32v2h-32zM616 355h2v2h-2zM638 355h44v2h-44zM626 355h8v2h-8zM684 355h4v2h-4zM622 355h2v2h-2zM470 355h14v2h-14zM516 355h26v2h-26zM404 355h28v2h-28zM708 355h1v2h-1zM500 355h6v2h-6zM698 355h6v2h-6zM490 355h8v2h-8zM556 355h6v2h-6zM545 356h1v1h-1zM507 356h3v1h-3zM598 356h2v1h-2zM620 356h1v1h-1zM440 356h3v1h-3zM602 356h1v1h-1zM459 357h1v1h-1zM566 357h8v1h-8zM628 357h49v1h-49zM575 357h1v1h-1zM404 357h9v1h-9zM580 357h16v1h-16zM548 355h2v4h-2zM494 357h4v2h-4zM624 357h2v2h-2zM620 357h2v2h-2zM698 357h11v2h-11zM612 357h6v2h-6zM452 357h6v2h-6zM542 357h2v2h-2zM678 357h16v2h-16zM446 357h2v2h-2zM598 357h8v2h-8zM468 357h10v2h-10zM488 357h2v2h-2zM482 357h4v2h-4zM416 357h6v2h-6zM522 357h18v2h-18zM462 357h2v2h-2zM502 357h16v2h-16zM426 357h14v2h-14zM552 357h12v2h-12zM569 358h5v1h-5zM580 358h9v1h-9zM590 358h6v1h-6zM492 358h1v1h-1zM566 358h1v1h-1zM628 358h48v1h-48zM492 359h6v1h-6zM425 359h1v1h-1zM556 359h11v1h-11zM414 359h8v1h-8zM592 359h1v1h-1zM448 359h8v1h-8zM569 359h21v1h-21zM480 359h1v1h-1zM404 358h8v3h-8zM462 359h10v2h-10zM594 359h12v2h-12zM482 359h8v2h-8zM614 359h4v2h-4zM678 359h31v2h-31zM502 359h14v2h-14zM622 359h54v2h-54zM427 359h1v2h-1zM608 359h2v2h-2zM520 359h34v2h-34zM458 359h2v2h-2zM434 359h10v2h-10zM447 360h9v1h-9zM491 360h7v1h-7zM620 360h1v1h-1zM556 360h34v1h-34zM479 360h1v1h-1zM414 360h9v1h-9zM539 361h2v1h-2zM478 361h1v1h-1zM648 361h10v1h-10zM596 361h12v1h-12zM618 361h1v1h-1zM620 361h8v2h-8zM404 361h14v2h-14zM544 361h12v2h-12zM446 361h14v2h-14zM424 361h2v2h-2zM706 361h3v2h-3zM632 361h12v2h-12zM482 361h16v2h-16zM502 361h32v2h-32zM610 361h6v2h-6zM428 361h16v2h-16zM462 361h14v2h-14zM664 361h2v2h-2zM558 361h32v2h-32zM668 361h10v2h-10zM680 361h24v2h-24zM596 362h8v1h-8zM606 362h2v1h-2zM648 362h11v1h-11zM662 362h1v1h-1zM502 363h15v1h-15zM659 363h19v1h-19zM597 363h7v1h-7zM648 363h7v1h-7zM634 363h7v1h-7zM478 363h22v1h-22zM606 363h6v1h-6zM699 363h1v1h-1zM422 363h8v2h-8zM690 363h6v2h-6zM546 363h32v2h-32zM702 363h4v2h-4zM436 363h16v2h-16zM404 363h16v2h-16zM708 363h1v2h-1zM616 363h16v2h-16zM456 363h4v2h-4zM462 363h8v2h-8zM472 363h2v2h-2zM518 363h20v2h-20zM614 364h1v1h-1zM454 364h1v1h-1zM502 364h14v1h-14zM598 364h14v1h-14zM660 364h18v1h-18zM493 364h7v1h-7zM648 364h6v1h-6zM478 364h12v1h-12zM634 364h6v1h-6zM580 363h12v3h-12zM493 365h21v1h-21zM600 365h12v1h-12zM624 365h18v1h-18zM666 365h18v2h-18zM688 365h8v2h-8zM544 365h10v2h-10zM556 365h20v2h-20zM644 365h8v2h-8zM436 365h7v2h-7zM476 365h12v2h-12zM698 365h4v2h-4zM426 365h6v2h-6zM704 365h5v2h-5zM656 365h6v2h-6zM516 365h4v2h-4zM446 365h28v2h-28zM616 365h6v2h-6zM404 365h18v2h-18zM526 365h16v2h-16zM492 366h5v1h-5zM631 366h11v1h-11zM624 366h6v1h-6zM507 366h7v1h-7zM663 366h1v1h-1zM580 366h13v1h-13zM599 366h13v1h-13zM499 366h6v2h-6zM462 367h1v1h-1zM446 367h12v1h-12zM490 367h7v1h-7zM552 367h8v1h-8zM633 367h1v1h-1zM546 367h4v1h-4zM464 367h22v1h-22zM636 367h2v1h-2zM584 367h10v1h-10zM507 367h13v1h-13zM532 367h2v2h-2zM570 367h9v2h-9zM640 367h12v2h-12zM628 367h4v2h-4zM600 367h22v2h-22zM526 367h2v2h-2zM432 367h10v2h-10zM522 367h2v2h-2zM538 367h4v2h-4zM666 367h43v2h-43zM656 367h8v2h-8zM562 367h4v2h-4zM404 367h24v2h-24zM581 367h1v2h-1zM555 368h5v1h-5zM476 368h10v1h-10zM546 368h5v1h-5zM464 368h11v1h-11zM583 368h11v1h-11zM490 368h31v1h-31zM552 368h1v1h-1zM635 368h4v1h-4zM598 368h1v1h-1zM446 368h13v1h-13zM443 368h1v1h-1zM555 369h11v1h-11zM596 369h20v1h-20zM444 369h10v1h-10zM544 369h6v1h-6zM464 369h10v1h-10zM586 369h9v1h-9zM404 369h16v1h-16zM532 369h3v1h-3zM442 369h1v1h-1zM432 369h8v2h-8zM568 369h6v2h-6zM427 369h1v2h-1zM536 369h6v2h-6zM618 369h8v2h-8zM634 369h4v2h-4zM480 369h14v2h-14zM456 369h4v2h-4zM502 369h13v2h-13zM517 369h11v2h-11zM652 369h21v2h-21zM578 369h2v2h-2zM642 369h8v2h-8zM628 369h2v2h-2zM675 369h33v2h-33zM462 370h1v1h-1zM602 370h14v1h-14zM551 370h1v1h-1zM464 370h1v1h-1zM531 370h3v1h-3zM554 370h12v1h-12zM586 370h15v1h-15zM478 370h1v1h-1zM417 370h3v1h-3zM466 370h8v1h-8zM543 370h7v1h-7zM444 370h5v1h-5zM451 370h3v1h-3zM404 370h11v2h-11zM496 371h2v1h-2zM548 371h24v1h-24zM634 371h14v1h-14zM432 371h17v1h-17zM417 371h13v1h-13zM650 371h12v1h-12zM478 371h16v1h-16zM668 371h26v1h-26zM451 371h1v1h-1zM631 371h1v1h-1zM614 371h14v1h-14zM454 371h2v2h-2zM500 371h26v2h-26zM698 371h11v2h-11zM535 371h9v2h-9zM602 371h8v2h-8zM598 371h2v2h-2zM530 371h2v2h-2zM458 371h18v2h-18zM586 371h2v2h-2zM580 371h4v2h-4zM590 371h4v2h-4zM632 372h16v1h-16zM668 372h6v1h-6zM676 372h18v1h-18zM657 372h5v1h-5zM404 372h26v1h-26zM492 372h2v1h-2zM432 372h20v1h-20zM613 372h15v1h-15zM496 372h1v1h-1zM489 372h2v1h-2zM650 372h5v1h-5zM478 372h9v1h-9zM548 372h25v1h-25zM471 373h16v1h-16zM614 373h13v1h-13zM434 373h6v1h-6zM441 373h17v1h-17zM550 373h16v1h-16zM404 373h10v1h-10zM646 373h9v1h-9zM464 373h6v1h-6zM499 373h17v1h-17zM629 373h15v1h-15zM489 373h7v1h-7zM657 373h9v1h-9zM420 373h10v2h-10zM592 373h2v2h-2zM522 373h4v2h-4zM684 373h8v2h-8zM694 373h14v2h-14zM460 373h2v2h-2zM532 373h10v2h-10zM670 373h4v2h-4zM544 373h2v2h-2zM584 373h4v2h-4zM678 373h2v2h-2zM610 373h2v2h-2zM602 373h6v2h-6zM475 374h19v1h-19zM577 374h1v1h-1zM411 374h3v1h-3zM597 374h1v1h-1zM498 374h18v1h-18zM434 374h24v1h-24zM550 374h10v1h-10zM658 374h8v1h-8zM614 374h6v1h-6zM622 374h5v1h-5zM570 374h1v1h-1zM629 374h16v1h-16zM464 374h9v1h-9zM404 374h6v1h-6zM646 374h11v1h-11zM581 374h1v1h-1zM562 374h4v2h-4zM471 375h1v1h-1zM688 375h8v1h-8zM418 375h14v1h-14zM479 375h15v1h-15zM578 375h1v1h-1zM676 375h11v1h-11zM453 375h15v1h-15zM475 375h2v1h-2zM496 375h28v1h-28zM626 375h1v1h-1zM556 375h3v1h-3zM669 375h5v1h-5zM444 375h8v1h-8zM590 375h16v1h-16zM698 375h2v2h-2zM574 375h2v2h-2zM404 375h8v2h-8zM534 375h12v2h-12zM646 375h22v2h-22zM632 375h12v2h-12zM582 375h6v2h-6zM434 375h2v2h-2zM610 375h6v2h-6zM702 375h6v2h-6zM618 375h1v2h-1zM567 376h1v1h-1zM474 376h3v1h-3zM556 376h2v1h-2zM670 376h4v1h-4zM479 376h45v1h-45zM590 376h8v1h-8zM676 376h20v1h-20zM444 376h24v1h-24zM419 376h13v1h-13zM560 376h6v1h-6zM621 376h1v1h-1zM600 376h6v2h-6zM440 377h1v1h-1zM593 377h5v1h-5zM445 377h1v1h-1zM460 377h14v1h-14zM698 377h1v1h-1zM580 377h8v1h-8zM610 377h9v1h-9zM478 377h55v1h-55zM676 377h4v1h-4zM620 377h6v1h-6zM534 377h7v1h-7zM475 377h1v1h-1zM543 377h9v2h-9zM448 377h10v2h-10zM684 377h2v2h-2zM628 377h44v2h-44zM572 377h6v2h-6zM566 377h2v2h-2zM409 377h1v2h-1zM554 377h6v2h-6zM704 377h2v2h-2zM426 377h8v2h-8zM404 377h3v2h-3zM579 378h9v1h-9zM696 378h1v1h-1zM412 378h1v1h-1zM594 378h12v1h-12zM487 378h54v1h-54zM678 378h1v1h-1zM610 378h16v1h-16zM478 378h7v1h-7zM466 378h8v1h-8zM460 378h4v1h-4zM435 378h2v1h-2zM414 377h6v3h-6zM466 379h10v1h-10zM422 379h2v1h-2zM597 379h5v1h-5zM688 379h5v1h-5zM404 379h2v1h-2zM683 379h1v1h-1zM555 379h7v1h-7zM569 379h1v1h-1zM592 379h4v1h-4zM606 379h1v1h-1zM500 379h22v1h-22zM537 379h10v1h-10zM701 379h3v1h-3zM478 379h1v1h-1zM487 379h1v1h-1zM458 379h6v1h-6zM630 379h1v1h-1zM632 379h2v1h-2zM681 379h1v1h-1zM548 379h4v1h-4zM674 379h2v1h-2zM654 379h4v2h-4zM572 379h10v2h-10zM624 379h2v2h-2zM586 379h4v2h-4zM694 379h5v2h-5zM480 379h3v2h-3zM666 379h2v2h-2zM608 379h12v2h-12zM528 379h7v2h-7zM448 379h6v2h-6zM660 379h2v2h-2zM490 379h8v2h-8zM426 379h20v2h-20zM638 379h12v2h-12zM543 380h9v1h-9zM537 380h5v1h-5zM680 380h2v1h-2zM674 380h4v1h-4zM555 380h4v1h-4zM485 380h3v1h-3zM688 380h4v1h-4zM592 380h10v1h-10zM414 380h10v1h-10zM458 380h18v1h-18zM500 380h15v1h-15zM404 380h3v1h-3zM700 380h4v1h-4zM561 380h1v2h-1zM517 380h5v2h-5zM506 381h9v1h-9zM503 381h1v1h-1zM464 381h5v1h-5zM426 381h1v1h-1zM404 381h2v1h-2zM482 381h11v1h-11zM637 381h7v1h-7zM634 381h2v1h-2zM672 381h14v1h-14zM408 381h16v1h-16zM539 381h1v1h-1zM554 381h5v1h-5zM582 381h2v1h-2zM646 381h5v1h-5zM536 381h2v1h-2zM500 381h2v1h-2zM528 381h2v2h-2zM654 381h10v2h-10zM608 381h6v2h-6zM696 381h3v2h-3zM586 381h15v2h-15zM542 381h10v2h-10zM616 381h4v2h-4zM570 381h10v2h-10zM494 381h2v2h-2zM456 381h4v2h-4zM688 381h6v2h-6zM428 381h22v2h-22zM474 381h4v2h-4zM603 381h1v2h-1zM667 381h1v2h-1zM622 381h10v2h-10zM564 381h2v2h-2zM605 382h2v1h-2zM408 382h5v1h-5zM684 382h2v1h-2zM499 382h4v1h-4zM646 382h4v1h-4zM516 382h6v1h-6zM536 382h4v1h-4zM472 382h1v1h-1zM415 382h9v1h-9zM482 382h10v1h-10zM582 382h3v1h-3zM634 382h10v1h-10zM464 382h6v1h-6zM554 382h8v1h-8zM672 382h10v1h-10zM506 382h3v1h-3zM510 382h4v2h-4zM406 383h6v1h-6zM617 383h9v1h-9zM480 383h12v1h-12zM638 383h28v1h-28zM554 383h5v1h-5zM442 383h7v1h-7zM568 383h8v1h-8zM589 383h25v1h-25zM493 383h1v1h-1zM516 383h4v1h-4zM700 381h9v4h-9zM464 383h5v2h-5zM499 383h1v2h-1zM418 383h8v2h-8zM542 383h5v2h-5zM526 383h6v2h-6zM534 383h3v2h-3zM460 383h2v2h-2zM584 383h2v2h-2zM565 383h1v2h-1zM684 383h10v2h-10zM496 383h1v2h-1zM472 383h6v2h-6zM628 383h6v2h-6zM428 383h13v2h-13zM502 383h1v2h-1zM539 383h1v2h-1zM667 383h7v2h-7zM452 383h4v2h-4zM504 383h5v2h-5zM562 383h1v2h-1zM554 384h4v1h-4zM574 384h2v1h-2zM638 384h2v1h-2zM616 384h5v1h-5zM480 384h9v1h-9zM590 384h24v1h-24zM445 384h4v1h-4zM442 384h2v1h-2zM510 384h10v1h-10zM623 384h2v1h-2zM567 384h5v1h-5zM490 384h2v1h-2zM405 384h9v1h-9zM549 383h1v3h-1zM642 384h24v2h-24zM564 385h8v1h-8zM590 385h31v1h-31zM623 385h4v1h-4zM492 385h11v1h-11zM505 385h4v1h-4zM637 385h3v1h-3zM452 385h17v1h-17zM588 385h1v1h-1zM681 385h1v1h-1zM688 385h6v1h-6zM442 385h7v1h-7zM667 385h13v1h-13zM574 385h12v1h-12zM514 385h2v1h-2zM698 383h1v4h-1zM684 385h2v2h-2zM522 385h22v2h-22zM700 385h4v2h-4zM628 385h7v2h-7zM552 385h4v2h-4zM405 385h13v2h-13zM558 385h5v2h-5zM419 385h7v2h-7zM430 385h8v2h-8zM470 385h19v2h-19zM493 386h6v1h-6zM504 386h1v1h-1zM637 386h10v1h-10zM590 386h21v1h-21zM564 386h22v1h-22zM442 386h2v1h-2zM667 386h14v1h-14zM514 386h3v1h-3zM506 386h3v1h-3zM450 383h1v5h-1zM614 386h13v2h-13zM447 386h2v2h-2zM660 386h6v2h-6zM690 386h4v2h-4zM648 386h9v2h-9zM452 386h16v2h-16zM512 387h4v1h-4zM681 387h3v1h-3zM508 387h1v1h-1zM495 387h1v1h-1zM674 387h1v1h-1zM554 387h9v1h-9zM676 387h2v1h-2zM576 387h2v1h-2zM405 387h7v1h-7zM588 387h7v1h-7zM564 387h9v1h-9zM538 387h10v1h-10zM602 387h9v1h-9zM706 385h3v4h-3zM500 386h3v3h-3zM522 387h1v2h-1zM470 387h3v2h-3zM582 387h4v2h-4zM628 387h16v2h-16zM482 387h4v2h-4zM686 387h2v2h-2zM525 387h11v2h-11zM506 387h1v2h-1zM475 387h5v2h-5zM420 387h8v2h-8zM696 387h2v2h-2zM702 387h2v2h-2zM446 388h3v1h-3zM589 388h6v1h-6zM689 388h5v1h-5zM554 388h7v1h-7zM550 388h1v1h-1zM408 388h4v1h-4zM571 388h2v1h-2zM491 388h1v1h-1zM452 388h17v1h-17zM614 388h12v1h-12zM682 388h2v1h-2zM602 388h10v1h-10zM543 388h4v1h-4zM676 388h1v1h-1zM538 388h4v1h-4zM508 388h2v1h-2zM660 388h5v1h-5zM576 388h1v1h-1zM599 388h1v1h-1zM430 387h4v3h-4zM404 388h2v2h-2zM565 388h4v2h-4zM515 388h1v2h-1zM641 389h1v1h-1zM435 389h1v1h-1zM571 389h9v1h-9zM470 389h6v1h-6zM628 389h4v1h-4zM596 389h4v1h-4zM623 389h3v1h-3zM543 389h5v1h-5zM454 389h10v1h-10zM633 389h7v1h-7zM422 389h6v1h-6zM465 389h4v1h-4zM603 389h7v1h-7zM704 389h1v1h-1zM648 388h11v3h-11zM550 389h11v2h-11zM667 389h3v2h-3zM688 389h11v2h-11zM646 389h1v2h-1zM446 389h2v2h-2zM520 389h5v2h-5zM660 389h6v2h-6zM438 389h2v2h-2zM680 389h4v2h-4zM700 389h2v2h-2zM498 389h5v2h-5zM409 389h3v2h-3zM490 389h2v2h-2zM621 389h1v2h-1zM636 390h4v1h-4zM512 390h4v1h-4zM565 390h5v1h-5zM545 390h3v1h-3zM608 390h2v1h-2zM432 390h4v1h-4zM422 390h3v1h-3zM454 390h15v1h-15zM571 390h4v1h-4zM404 390h3v1h-3zM599 390h1v1h-1zM478 389h4v3h-4zM504 389h3v3h-3zM526 389h14v3h-14zM483 389h1v3h-1zM614 389h5v3h-5zM596 390h2v2h-2zM623 390h1v2h-1zM606 390h1v2h-1zM470 390h5v2h-5zM625 390h1v2h-1zM628 390h3v2h-3zM543 390h1v2h-1zM576 390h4v2h-4zM485 391h1v1h-1zM522 391h1v1h-1zM641 391h1v1h-1zM490 391h1v1h-1zM499 391h4v1h-4zM406 391h9v1h-9zM599 391h3v1h-3zM663 391h3v1h-3zM541 391h1v1h-1zM644 391h11v1h-11zM679 391h13v1h-13zM545 391h15v1h-15zM519 391h1v1h-1zM428 391h1v1h-1zM524 391h1v1h-1zM445 391h3v1h-3zM416 391h2v1h-2zM442 391h1v1h-1zM660 391h2v1h-2zM582 391h2v1h-2zM562 388h1v5h-1zM494 389h1v4h-1zM589 389h3v4h-3zM675 389h2v4h-2zM594 389h1v4h-1zM419 391h6v2h-6zM508 391h1v2h-1zM510 391h5v2h-5zM656 391h1v2h-1zM636 391h3v2h-3zM454 391h4v2h-4zM702 391h4v2h-4zM430 391h9v2h-9zM571 391h2v2h-2zM516 391h2v2h-2zM461 391h5v2h-5zM694 391h4v2h-4zM708 391h1v2h-1zM586 391h2v2h-2zM658 391h1v2h-1zM644 392h9v1h-9zM444 392h4v1h-4zM406 392h6v1h-6zM417 392h1v1h-1zM628 392h4v1h-4zM550 392h10v1h-10zM679 392h10v1h-10zM545 392h3v1h-3zM660 392h6v1h-6zM414 392h1v1h-1zM582 392h3v1h-3zM599 392h2v1h-2zM576 392h2v1h-2zM621 392h5v1h-5zM523 392h21v1h-21zM471 392h5v1h-5zM478 392h3v1h-3zM603 390h2v4h-2zM667 391h5v3h-5zM608 391h5v3h-5zM484 392h3v2h-3zM596 392h1v2h-1zM579 392h1v2h-1zM690 392h1v2h-1zM426 392h2v2h-2zM589 393h6v1h-6zM454 393h5v1h-5zM545 393h4v1h-4zM418 393h5v1h-5zM414 393h2v1h-2zM628 393h1v1h-1zM645 393h3v1h-3zM661 393h1v1h-1zM494 393h3v1h-3zM488 393h5v1h-5zM529 393h5v1h-5zM537 393h7v1h-7zM510 393h4v1h-4zM444 393h6v1h-6zM472 393h9v1h-9zM550 393h3v1h-3zM687 393h2v1h-2zM430 393h5v1h-5zM424 393h1v1h-1zM465 393h1v1h-1zM554 393h5v1h-5zM452 393h1v1h-1zM571 393h7v1h-7zM406 393h1v1h-1zM656 393h2v1h-2zM460 393h3v1h-3zM505 392h2v3h-2zM440 392h3v3h-3zM501 392h3v3h-3zM621 393h3v2h-3zM694 393h5v2h-5zM682 393h3v2h-3zM630 393h2v2h-2zM636 393h2v2h-2zM702 393h6v2h-6zM409 393h3v2h-3zM438 393h1v2h-1zM518 393h2v2h-2zM599 393h1v2h-1zM523 393h5v2h-5zM654 394h4v1h-4zM511 394h3v1h-3zM488 394h9v1h-9zM444 394h4v1h-4zM603 394h9v1h-9zM472 394h4v1h-4zM687 394h3v1h-3zM666 394h6v1h-6zM426 394h3v1h-3zM418 394h7v1h-7zM645 394h1v1h-1zM552 394h7v1h-7zM529 394h4v1h-4zM537 394h12v1h-12zM478 394h9v1h-9zM578 394h2v1h-2zM614 392h1v4h-1zM650 393h3v3h-3zM675 393h3v3h-3zM561 393h3v3h-3zM451 394h4v2h-4zM464 394h3v2h-3zM413 394h3v2h-3zM458 394h5v2h-5zM603 395h3v1h-3zM526 395h3v1h-3zM654 395h6v1h-6zM512 395h3v1h-3zM408 395h4v1h-4zM505 395h1v1h-1zM705 395h3v1h-3zM490 395h6v1h-6zM694 395h1v1h-1zM518 395h3v1h-3zM634 395h4v1h-4zM474 395h1v1h-1zM580 395h1v1h-1zM539 395h10v1h-10zM418 395h6v1h-6zM552 395h6v1h-6zM608 395h4v1h-4zM618 392h1v5h-1zM565 393h1v4h-1zM572 394h4v3h-4zM592 394h6v3h-6zM624 395h2v2h-2zM530 395h3v2h-3zM646 395h1v2h-1zM666 395h2v2h-2zM662 395h2v2h-2zM620 395h1v2h-1zM630 395h1v2h-1zM445 395h3v2h-3zM687 395h5v2h-5zM477 395h6v2h-6zM488 395h1v2h-1zM420 396h4v1h-4zM451 396h6v1h-6zM654 396h4v1h-4zM430 396h1v1h-1zM538 396h9v1h-9zM426 396h1v1h-1zM518 396h4v1h-4zM580 396h2v1h-2zM603 396h2v1h-2zM552 396h7v1h-7zM674 396h3v1h-3zM458 396h9v1h-9zM512 396h2v1h-2zM525 396h4v1h-4zM634 396h3v1h-3zM616 392h1v6h-1zM432 394h1v4h-1zM697 395h1v3h-1zM439 395h3v3h-3zM493 396h3v2h-3zM408 396h3v2h-3zM608 396h1v2h-1zM644 397h3v1h-3zM477 397h5v1h-5zM544 397h3v1h-3zM555 397h4v1h-4zM524 397h5v1h-5zM459 397h5v1h-5zM417 397h6v1h-6zM661 397h3v1h-3zM671 397h1v1h-1zM689 397h3v1h-3zM594 397h1v1h-1zM603 397h1v1h-1zM620 397h3v1h-3zM519 397h3v1h-3zM572 397h1v1h-1zM428 397h3v2h-3zM471 397h1v2h-1zM538 397h3v2h-3zM681 397h6v2h-6zM612 397h2v2h-2zM564 397h3v2h-3zM454 397h3v2h-3zM674 397h2v2h-2zM461 398h3v1h-3zM602 398h2v1h-2zM520 398h2v1h-2zM479 398h2v1h-2zM524 398h4v1h-4zM670 398h3v1h-3zM556 398h3v1h-3zM424 397h1v3h-1zM417 398h3v2h-3zM536 399h1v1h-1zM471 399h3v1h-3zM603 399h1v1h-1zM611 399h3v1h-3zM684 399h3v1h-3zM487 399h3v1h-3zM496 399h3v1h-3zM634 399h3v1h-3zM564 399h2v1h-2zM524 399h3v1h-3zM446 398h3v3h-3zM658 398h3v3h-3zM571 398h3v3h-3zM594 398h2v3h-2zM643 398h3v3h-3zM616 398h3v3h-3zM670 399h2v2h-2zM577 399h3v2h-3zM536 400h3v1h-3zM456 399h3v3h-3zM435 399h3v3h-3zM695 399h5v3h-5zM496 400h4v2h-4zM634 400h6v2h-6zM504 400h3v3h-3zM541 402h2v1h-2zM456 402h1v1h-1zM637 402h3v1h-3zM690 402h3v1h-3zM497 402h3v1h-3zM570 402h3v1h-3zM648 401h3v3h-3zM700 403h3v1h-3zM466 402h3v3h-3zM680 402h3v3h-3zM519 403h1v2h-1zM484 403h3v2h-3zM542 403h2v2h-2zM454 403h3v2h-3zM650 404h3v1h-3zM611 404h3v1h-3zM643 403h3v3h-3zM416 403h3v3h-3zM628 403h6v3h-6zM696 404h7v2h-7zM510 404h1v2h-1zM575 404h3v3h-3zM603 404h3v3h-3zM590 404h3v3h-3zM673 404h3v3h-3zM495 404h3v3h-3zM491 404h3v3h-3zM484 405h5v2h-5zM611 405h5v2h-5zM696 406h5v1h-5zM651 406h1v1h-1zM510 406h3v1h-3zM517 405h3v3h-3zM617 405h3v3h-3zM458 405h3v3h-3zM622 405h3v3h-3zM553 405h3v3h-3zM613 407h3v1h-3zM483 407h1v1h-1zM486 407h3v1h-3z" fill="#cd9600"/><path d="M430 253h4v1h-4zM503 253h7v1h-7zM684 253h2v1h-2zM673 253h3v1h-3zM488 253h2v1h-2zM491 253h1v1h-1zM608 253h5v1h-5zM446 253h4v1h-4zM668 253h4v1h-4zM410 253h3v1h-3zM500 253h2v1h-2zM540 253h4v1h-4zM416 253h4v2h-4zM512 253h4v2h-4zM554 253h4v2h-4zM692 253h2v2h-2zM658 253h4v2h-4zM470 253h4v2h-4zM704 253h4v2h-4zM446 254h3v1h-3zM610 254h4v1h-4zM540 254h3v1h-3zM500 254h10v1h-10zM668 254h8v1h-8zM685 254h1v1h-1zM410 254h4v1h-4zM430 254h2v1h-2zM433 254h1v1h-1zM608 254h1v1h-1zM526 253h6v3h-6zM673 255h1v1h-1zM693 255h1v1h-1zM476 255h6v1h-6zM702 255h6v1h-6zM690 255h1v1h-1zM666 255h6v1h-6zM596 253h2v4h-2zM488 254h4v3h-4zM468 255h2v2h-2zM510 255h2v2h-2zM656 255h4v2h-4zM506 255h2v2h-2zM458 255h4v2h-4zM410 255h2v2h-2zM606 255h4v2h-4zM558 255h6v2h-6zM424 255h8v2h-8zM620 255h4v2h-4zM446 255h4v2h-4zM554 255h2v2h-2zM538 255h4v2h-4zM590 255h4v2h-4zM472 255h2v2h-2zM500 255h2v2h-2zM702 256h5v1h-5zM666 256h8v1h-8zM528 256h4v1h-4zM476 256h5v1h-5zM690 256h4v1h-4zM526 256h1v1h-1zM550 257h2v1h-2zM604 257h7v1h-7zM568 257h4v1h-4zM432 257h2v1h-2zM635 257h1v1h-1zM630 257h4v1h-4zM546 257h3v1h-3zM698 257h6v1h-6zM426 257h5v1h-5zM416 257h8v1h-8zM646 257h2v1h-2zM558 257h4v2h-4zM592 257h2v2h-2zM478 257h2v2h-2zM532 257h4v2h-4zM456 257h2v2h-2zM408 257h4v2h-4zM658 257h2v2h-2zM482 257h4v2h-4zM490 257h6v2h-6zM618 257h2v2h-2zM598 257h4v2h-4zM674 257h2v2h-2zM440 257h2v2h-2zM666 257h6v2h-6zM692 257h2v2h-2zM540 257h4v2h-4zM498 257h10v2h-10zM630 258h6v1h-6zM702 258h2v1h-2zM647 258h1v1h-1zM416 258h6v1h-6zM423 258h1v1h-1zM604 258h8v1h-8zM568 258h2v1h-2zM546 258h6v1h-6zM698 258h3v1h-3zM426 258h8v1h-8zM571 258h1v1h-1zM606 259h2v1h-2zM649 259h3v1h-3zM408 259h2v1h-2zM426 259h4v1h-4zM414 259h2v1h-2zM492 259h4v1h-4zM646 259h2v1h-2zM417 259h5v1h-5zM532 259h2v2h-2zM596 259h2v2h-2zM446 259h6v2h-6zM482 259h2v2h-2zM438 259h6v2h-6zM562 259h6v2h-6zM502 259h2v2h-2zM630 259h2v2h-2zM538 259h2v2h-2zM622 259h2v2h-2zM542 259h4v2h-4zM576 259h2v2h-2zM682 259h8v2h-8zM700 259h8v2h-8zM670 259h6v2h-6zM550 259h6v2h-6zM493 260h3v1h-3zM414 260h8v1h-8zM606 260h4v1h-4zM408 260h1v1h-1zM646 260h6v1h-6zM426 260h2v1h-2zM429 260h1v1h-1zM607 261h3v1h-3zM620 261h4v1h-4zM538 261h10v1h-10zM429 261h3v1h-3zM529 261h3v1h-3zM706 261h2v2h-2zM686 261h2v2h-2zM404 261h4v2h-4zM438 261h2v2h-2zM564 261h4v2h-4zM642 261h10v2h-10zM574 261h6v2h-6zM446 261h2v2h-2zM450 261h2v2h-2zM514 261h2v2h-2zM494 261h2v2h-2zM552 261h2v2h-2zM502 261h4v2h-4zM528 262h2v1h-2zM531 262h1v1h-1zM621 262h3v1h-3zM536 262h12v1h-12zM428 262h4v1h-4zM529 263h3v1h-3zM554 263h4v1h-4zM678 263h4v1h-4zM542 263h1v1h-1zM642 263h6v1h-6zM456 263h4v1h-4zM518 263h2v1h-2zM606 262h4v3h-4zM698 263h2v2h-2zM684 263h2v2h-2zM426 263h4v2h-4zM538 263h2v2h-2zM622 263h2v2h-2zM566 263h4v2h-4zM632 263h2v2h-2zM674 263h2v2h-2zM456 264h3v1h-3zM518 264h1v1h-1zM542 264h2v1h-2zM642 264h1v1h-1zM528 264h4v1h-4zM554 264h3v1h-3zM644 264h4v1h-4zM679 264h3v1h-3zM494 263h4v3h-4zM454 265h8v1h-8zM554 265h1v1h-1zM676 265h6v1h-6zM557 265h3v1h-3zM630 265h2v1h-2zM633 265h1v1h-1zM425 265h3v1h-3zM574 265h4v1h-4zM484 265h8v1h-8zM656 265h9v1h-9zM566 265h1v1h-1zM520 265h1v1h-1zM670 263h2v4h-2zM472 263h4v4h-4zM580 263h2v4h-2zM606 265h2v2h-2zM618 265h6v2h-6zM684 265h4v2h-4zM516 265h2v2h-2zM478 265h4v2h-4zM646 265h2v2h-2zM704 265h4v2h-4zM642 265h2v2h-2zM434 265h4v2h-4zM676 266h3v1h-3zM680 266h2v1h-2zM487 266h5v1h-5zM656 266h10v1h-10zM566 266h2v1h-2zM454 266h4v1h-4zM520 266h2v1h-2zM484 266h2v1h-2zM554 266h6v1h-6zM574 266h1v1h-1zM576 266h2v1h-2zM497 266h1v1h-1zM459 266h3v1h-3zM494 266h2v1h-2zM550 267h2v1h-2zM466 267h10v1h-10zM688 267h2v1h-2zM641 267h7v1h-7zM638 267h2v1h-2zM656 267h1v1h-1zM620 267h4v1h-4zM590 265h2v4h-2zM630 266h4v3h-4zM424 266h4v3h-4zM556 267h2v2h-2zM508 267h4v2h-4zM574 267h2v2h-2zM602 267h8v2h-8zM458 267h4v2h-4zM436 267h4v2h-4zM442 267h2v2h-2zM612 267h2v2h-2zM448 267h8v2h-8zM550 268h1v1h-1zM688 268h1v1h-1zM469 268h7v1h-7zM638 268h10v1h-10zM466 268h2v1h-2zM620 268h3v1h-3zM656 268h2v1h-2zM520 269h6v1h-6zM438 269h3v1h-3zM674 269h4v1h-4zM690 269h2v1h-2zM621 269h5v1h-5zM591 269h3v1h-3zM466 269h4v1h-4zM514 267h2v4h-2zM642 269h4v2h-4zM550 269h4v2h-4zM630 269h2v2h-2zM598 269h8v2h-8zM658 269h2v2h-2zM686 269h2v2h-2zM608 269h2v2h-2zM576 269h2v2h-2zM634 269h4v2h-4zM416 269h8v2h-8zM612 269h4v2h-4zM504 269h8v2h-8zM520 270h3v1h-3zM620 270h8v1h-8zM524 270h2v1h-2zM469 270h1v1h-1zM466 270h2v1h-2zM677 270h1v1h-1zM590 270h4v1h-4zM438 270h4v1h-4zM674 270h2v1h-2zM691 270h1v1h-1zM448 269h6v3h-6zM550 271h2v1h-2zM650 271h4v1h-4zM614 271h4v1h-4zM516 271h8v1h-8zM480 271h2v1h-2zM670 271h6v1h-6zM696 271h2v1h-2zM656 271h2v1h-2zM702 269h2v4h-2zM468 271h2v2h-2zM408 271h2v2h-2zM418 271h8v2h-8zM412 271h4v2h-4zM634 271h2v2h-2zM596 271h4v2h-4zM502 271h2v2h-2zM622 271h8v2h-8zM544 271h2v2h-2zM588 271h4v2h-4zM430 271h2v2h-2zM554 271h2v2h-2zM684 271h6v2h-6zM506 271h6v2h-6zM696 272h1v1h-1zM448 272h4v1h-4zM650 272h1v1h-1zM652 272h2v1h-2zM453 272h1v1h-1zM550 272h1v1h-1zM614 272h3v1h-3zM518 272h6v1h-6zM657 272h1v1h-1zM670 272h3v1h-3zM516 272h1v1h-1zM674 272h2v1h-2zM422 273h8v1h-8zM522 273h1v1h-1zM620 273h2v1h-2zM431 273h1v1h-1zM486 273h1v1h-1zM624 273h1v1h-1zM488 273h2v1h-2zM626 273h2v1h-2zM474 273h2v1h-2zM701 273h3v1h-3zM644 273h1v1h-1zM652 273h3v1h-3zM646 273h2v1h-2zM656 273h2v1h-2zM546 273h2v2h-2zM684 273h2v2h-2zM706 273h3v2h-3zM470 273h2v2h-2zM480 273h2v2h-2zM498 273h8v2h-8zM514 273h6v2h-6zM538 273h4v2h-4zM412 273h2v2h-2zM614 273h2v2h-2zM526 273h4v2h-4zM666 273h6v2h-6zM486 274h4v1h-4zM422 274h10v1h-10zM624 274h4v1h-4zM644 274h4v1h-4zM522 274h2v1h-2zM621 274h1v1h-1zM652 274h6v1h-6zM700 274h4v1h-4zM475 274h1v1h-1zM508 273h4v3h-4zM486 275h2v1h-2zM536 275h4v1h-4zM656 275h4v1h-4zM430 275h6v1h-6zM520 275h1v1h-1zM548 275h1v1h-1zM639 275h3v1h-3zM592 275h2v2h-2zM680 275h2v2h-2zM514 275h4v2h-4zM644 275h2v2h-2zM596 275h4v2h-4zM572 275h6v2h-6zM476 275h6v2h-6zM528 275h4v2h-4zM556 275h4v2h-4zM582 275h6v2h-6zM602 275h4v2h-4zM628 275h6v2h-6zM410 275h4v2h-4zM502 275h4v2h-4zM706 275h2v2h-2zM612 275h4v2h-4zM702 275h2v2h-2zM520 276h2v1h-2zM508 276h3v1h-3zM487 276h1v1h-1zM638 276h4v1h-4zM656 276h3v1h-3zM430 276h5v1h-5zM537 276h3v1h-3zM520 277h3v1h-3zM592 277h8v1h-8zM474 277h6v1h-6zM609 277h1v1h-1zM496 277h8v1h-8zM566 277h2v1h-2zM538 277h8v1h-8zM572 277h5v1h-5zM667 277h1v1h-1zM590 277h1v1h-1zM554 277h11v1h-11zM625 277h3v1h-3zM674 277h8v1h-8zM604 277h4v1h-4zM548 276h2v3h-2zM696 277h4v2h-4zM432 277h2v2h-2zM584 277h2v2h-2zM658 277h2v2h-2zM640 277h2v2h-2zM440 277h6v2h-6zM512 277h2v2h-2zM632 277h2v2h-2zM416 277h2v2h-2zM526 277h4v2h-4zM704 277h4v2h-4zM487 277h3v2h-3zM678 278h4v1h-4zM478 278h2v1h-2zM666 278h2v1h-2zM604 278h6v1h-6zM572 278h6v1h-6zM624 278h4v1h-4zM521 278h2v1h-2zM497 278h7v1h-7zM674 278h3v1h-3zM538 278h7v1h-7zM563 278h5v1h-5zM554 278h8v1h-8zM590 278h10v1h-10zM474 278h3v2h-3zM510 279h2v1h-2zM526 279h3v1h-3zM674 279h1v1h-1zM530 279h2v1h-2zM416 279h12v1h-12zM440 279h3v1h-3zM666 279h7v1h-7zM706 279h2v1h-2zM444 279h2v1h-2zM622 279h4v1h-4zM542 279h3v1h-3zM483 279h3v1h-3zM627 279h1v1h-1zM614 277h2v4h-2zM454 279h2v2h-2zM592 279h2v2h-2zM560 279h2v2h-2zM538 279h2v2h-2zM488 279h2v2h-2zM648 279h4v2h-4zM498 279h2v2h-2zM700 279h2v2h-2zM564 279h6v2h-6zM604 279h2v2h-2zM696 279h2v2h-2zM676 279h4v2h-4zM416 280h1v1h-1zM418 280h5v1h-5zM526 280h6v1h-6zM706 280h3v1h-3zM542 280h4v1h-4zM440 280h6v1h-6zM424 280h4v1h-4zM474 280h4v1h-4zM510 280h3v1h-3zM666 280h9v1h-9zM600 281h4v1h-4zM642 281h4v1h-4zM698 281h1v1h-1zM424 281h2v1h-2zM706 281h2v1h-2zM700 281h4v1h-4zM622 280h6v3h-6zM482 280h4v3h-4zM468 281h2v2h-2zM558 281h4v2h-4zM664 281h10v2h-10zM548 281h6v2h-6zM648 281h2v2h-2zM616 281h2v2h-2zM578 281h4v2h-4zM524 281h8v2h-8zM418 281h4v2h-4zM452 281h2v2h-2zM536 281h6v2h-6zM432 281h4v2h-4zM600 282h1v1h-1zM602 282h2v1h-2zM642 282h3v1h-3zM424 282h4v1h-4zM698 282h6v1h-6zM596 283h8v1h-8zM528 283h2v1h-2zM454 283h5v1h-5zM531 283h7v1h-7zM412 283h4v1h-4zM666 283h8v1h-8zM578 283h1v1h-1zM696 283h3v1h-3zM570 283h7v1h-7zM700 283h2v1h-2zM675 283h3v1h-3zM622 283h4v1h-4zM686 283h4v1h-4zM548 283h10v1h-10zM680 283h3v1h-3zM417 283h11v1h-11zM706 282h3v3h-3zM654 283h4v2h-4zM560 283h2v2h-2zM494 283h10v2h-10zM614 283h4v2h-4zM430 283h6v2h-6zM484 283h2v2h-2zM630 283h4v2h-4zM660 283h2v2h-2zM444 283h2v2h-2zM466 283h4v2h-4zM666 284h12v1h-12zM622 284h3v1h-3zM570 284h8v1h-8zM419 284h2v1h-2zM597 284h7v1h-7zM696 284h6v1h-6zM689 284h1v1h-1zM528 284h10v1h-10zM412 284h6v1h-6zM680 284h4v1h-4zM579 284h1v1h-1zM553 284h5v1h-5zM454 284h6v1h-6zM422 284h6v1h-6zM548 284h4v1h-4zM486 285h2v1h-2zM696 285h1v1h-1zM584 285h6v1h-6zM652 285h8v1h-8zM646 285h1v1h-1zM699 285h5v1h-5zM644 285h1v1h-1zM508 285h2v1h-2zM489 285h1v1h-1zM686 284h2v3h-2zM410 285h6v2h-6zM428 285h6v2h-6zM524 285h9v2h-9zM454 285h2v2h-2zM511 285h3v2h-3zM538 285h6v2h-6zM672 285h12v2h-12zM554 285h10v2h-10zM604 285h6v2h-6zM630 285h2v2h-2zM424 285h2v2h-2zM592 285h10v2h-10zM548 285h2v2h-2zM614 285h6v2h-6zM496 285h4v2h-4zM576 285h2v2h-2zM636 285h2v2h-2zM586 286h4v1h-4zM508 286h1v1h-1zM652 286h1v1h-1zM701 286h3v1h-3zM697 286h3v1h-3zM644 286h4v1h-4zM486 286h3v1h-3zM584 286h1v1h-1zM657 286h3v1h-3zM654 286h1v1h-1zM662 285h4v3h-4zM557 287h3v1h-3zM682 287h6v1h-6zM650 287h6v1h-6zM526 287h2v1h-2zM554 287h2v1h-2zM604 287h4v1h-4zM486 287h8v2h-8zM410 287h2v2h-2zM668 287h2v2h-2zM638 287h4v2h-4zM544 287h2v2h-2zM512 287h2v2h-2zM696 287h2v2h-2zM442 287h4v2h-4zM522 287h2v2h-2zM586 287h2v2h-2zM592 287h6v2h-6zM508 287h2v2h-2zM534 287h4v2h-4zM480 287h4v2h-4zM496 287h6v2h-6zM527 288h1v1h-1zM655 288h1v1h-1zM663 288h3v1h-3zM604 288h3v1h-3zM684 288h4v1h-4zM554 288h6v1h-6zM653 288h1v1h-1zM650 288h2v1h-2zM682 288h1v1h-1zM572 289h4v1h-4zM416 289h4v1h-4zM586 289h4v1h-4zM542 289h5v1h-5zM614 289h4v1h-4zM657 289h1v1h-1zM682 289h8v1h-8zM654 289h2v1h-2zM548 289h4v1h-4zM640 289h1v1h-1zM642 289h2v1h-2zM578 287h2v4h-2zM596 289h2v2h-2zM660 289h4v2h-4zM460 289h2v2h-2zM630 289h2v2h-2zM406 289h2v2h-2zM694 289h10v2h-10zM480 289h2v2h-2zM434 289h8v2h-8zM500 289h6v2h-6zM490 289h2v2h-2zM654 290h4v1h-4zM614 290h1v1h-1zM542 290h10v1h-10zM419 290h1v1h-1zM589 290h1v1h-1zM416 290h2v1h-2zM586 290h2v1h-2zM684 290h6v1h-6zM640 290h4v1h-4zM682 290h1v1h-1zM572 290h1v1h-1zM589 291h3v1h-3zM502 291h3v1h-3zM623 291h3v1h-3zM681 291h7v1h-7zM656 291h2v1h-2zM530 289h2v4h-2zM708 289h1v4h-1zM574 290h2v3h-2zM616 290h2v3h-2zM652 291h2v2h-2zM440 291h4v2h-4zM458 291h4v2h-4zM540 291h12v2h-12zM696 291h6v2h-6zM464 291h4v2h-4zM704 291h2v2h-2zM434 291h2v2h-2zM562 291h2v2h-2zM664 291h2v2h-2zM474 291h4v2h-4zM582 291h2v2h-2zM642 291h2v2h-2zM656 292h1v1h-1zM680 292h8v1h-8zM588 292h4v1h-4zM502 292h4v1h-4zM622 292h4v1h-4zM464 293h2v1h-2zM665 293h1v1h-1zM582 293h4v1h-4zM472 293h4v1h-4zM495 293h1v1h-1zM662 293h2v1h-2zM477 293h1v1h-1zM547 293h1v1h-1zM655 293h3v1h-3zM644 293h1v1h-1zM596 293h6v1h-6zM646 293h2v1h-2zM418 291h2v4h-2zM526 291h2v4h-2zM606 293h8v2h-8zM564 293h4v2h-4zM436 293h4v2h-4zM446 293h2v2h-2zM590 293h2v2h-2zM618 293h2v2h-2zM624 293h6v2h-6zM424 293h4v2h-4zM694 293h6v2h-6zM654 294h4v1h-4zM546 294h2v1h-2zM582 294h1v1h-1zM645 294h3v1h-3zM584 294h2v1h-2zM472 294h3v1h-3zM476 294h2v1h-2zM494 294h2v1h-2zM662 294h4v1h-4zM465 294h1v1h-1zM596 294h5v1h-5zM701 295h1v1h-1zM507 295h3v1h-3zM684 295h5v1h-5zM695 295h5v1h-5zM521 295h5v1h-5zM424 295h1v1h-1zM565 295h3v1h-3zM550 293h2v4h-2zM498 293h2v4h-2zM476 295h4v2h-4zM558 295h4v2h-4zM648 295h2v2h-2zM644 295h2v2h-2zM618 295h12v2h-12zM612 295h2v2h-2zM608 295h2v2h-2zM438 295h2v2h-2zM576 295h2v2h-2zM634 295h4v2h-4zM596 295h6v2h-6zM540 295h8v2h-8zM664 295h2v2h-2zM528 295h6v2h-6zM444 295h2v2h-2zM676 295h4v2h-4zM452 295h4v2h-4zM656 295h2v2h-2zM520 296h6v1h-6zM694 296h8v1h-8zM564 296h4v1h-4zM424 296h2v1h-2zM506 296h4v1h-4zM684 296h6v1h-6zM597 297h5v1h-5zM681 297h3v1h-3zM631 297h3v1h-3zM651 297h1v1h-1zM689 297h1v1h-1zM639 297h1v1h-1zM657 297h1v1h-1zM584 297h1v1h-1zM512 297h8v1h-8zM562 297h4v1h-4zM568 297h4v2h-4zM696 297h4v2h-4zM574 297h8v2h-8zM662 297h2v2h-2zM502 297h2v2h-2zM442 297h2v2h-2zM450 297h4v2h-4zM676 297h2v2h-2zM434 297h2v2h-2zM476 297h2v2h-2zM558 297h2v2h-2zM522 297h2v2h-2zM530 297h4v2h-4zM668 297h4v2h-4zM542 297h6v2h-6zM688 298h2v1h-2zM638 298h2v1h-2zM515 298h5v1h-5zM584 298h2v1h-2zM565 298h1v1h-1zM680 298h4v1h-4zM596 298h6v1h-6zM630 298h4v1h-4zM650 298h2v1h-2zM656 298h2v1h-2zM661 299h5v1h-5zM554 299h1v1h-1zM658 299h2v1h-2zM556 299h1v1h-1zM582 299h3v1h-3zM414 299h4v1h-4zM586 299h2v1h-2zM474 299h4v1h-4zM466 299h4v1h-4zM692 299h8v1h-8zM622 297h4v4h-4zM562 298h2v3h-2zM512 298h2v3h-2zM572 299h4v2h-4zM636 299h10v2h-10zM432 299h2v2h-2zM518 299h4v2h-4zM628 299h4v2h-4zM500 299h4v2h-4zM598 299h2v2h-2zM594 299h2v2h-2zM530 299h2v2h-2zM668 299h2v2h-2zM458 299h6v2h-6zM612 299h1v2h-1zM548 299h4v2h-4zM678 299h2v2h-2zM578 299h2v2h-2zM474 300h3v1h-3zM658 300h3v1h-3zM415 300h3v1h-3zM466 300h3v1h-3zM582 300h6v1h-6zM555 300h3v1h-3zM692 300h6v1h-6zM662 300h4v1h-4zM699 300h1v1h-1zM508 300h2v1h-2zM612 301h6v1h-6zM513 301h1v1h-1zM626 301h2v1h-2zM638 301h4v1h-4zM684 301h10v1h-10zM472 301h6v1h-6zM645 301h1v1h-1zM468 301h2v2h-2zM596 301h2v2h-2zM554 301h1v2h-1zM588 301h2v2h-2zM458 301h4v2h-4zM436 301h4v2h-4zM546 301h4v2h-4zM672 301h4v2h-4zM412 301h2v2h-2zM516 301h4v2h-4zM556 301h6v2h-6zM580 301h4v2h-4zM526 301h4v2h-4zM604 301h4v2h-4zM685 302h9v1h-9zM472 302h1v1h-1zM644 302h2v1h-2zM638 302h1v1h-1zM612 302h5v1h-5zM640 302h2v1h-2zM512 302h2v1h-2zM626 302h1v1h-1zM474 302h4v1h-4zM550 303h4v1h-4zM687 303h3v1h-3zM434 303h1v1h-1zM588 303h1v1h-1zM463 303h3v1h-3zM546 303h3v1h-3zM438 303h1v1h-1zM590 303h4v1h-4zM682 303h4v1h-4zM502 303h6v2h-6zM614 303h4v2h-4zM670 303h4v2h-4zM528 303h4v2h-4zM622 303h2v2h-2zM498 303h2v2h-2zM604 303h2v2h-2zM410 303h10v2h-10zM514 303h6v2h-6zM696 303h2v2h-2zM562 303h4v2h-4zM692 303h2v2h-2zM592 304h2v1h-2zM462 304h4v1h-4zM589 304h2v1h-2zM546 304h4v1h-4zM438 304h2v1h-2zM434 304h2v1h-2zM682 304h8v1h-8zM551 304h3v1h-3zM416 305h4v1h-4zM554 305h4v1h-4zM564 305h4v1h-4zM471 305h3v1h-3zM707 305h1v1h-1zM435 305h3v1h-3zM639 305h1v1h-1zM636 305h2v1h-2zM682 305h5v1h-5zM676 305h1v1h-1zM678 305h2v1h-2zM616 305h6v1h-6zM457 305h1v1h-1zM550 305h2v2h-2zM696 305h4v2h-4zM608 305h6v2h-6zM502 305h2v2h-2zM408 305h4v2h-4zM586 305h6v2h-6zM668 305h2v2h-2zM542 305h4v2h-4zM646 305h6v2h-6zM580 305h4v2h-4zM656 305h8v2h-8zM514 305h2v2h-2zM567 306h1v1h-1zM416 306h1v1h-1zM418 306h2v1h-2zM638 306h2v1h-2zM685 306h3v1h-3zM456 306h2v1h-2zM554 306h3v1h-3zM616 306h4v1h-4zM682 306h2v1h-2zM621 306h1v1h-1zM470 306h4v1h-4zM564 306h2v1h-2zM636 306h1v1h-1zM434 306h4v1h-4zM706 306h2v2h-2zM428 307h6v1h-6zM592 307h2v1h-2zM459 307h1v1h-1zM468 307h4v1h-4zM586 307h3v1h-3zM595 307h3v1h-3zM612 307h4v1h-4zM682 307h4v1h-4zM676 306h4v3h-4zM636 307h4v2h-4zM454 307h2v2h-2zM508 307h4v2h-4zM424 307h2v2h-2zM418 307h4v2h-4zM608 307h2v2h-2zM648 307h4v2h-4zM494 307h2v2h-2zM554 307h2v2h-2zM474 307h4v2h-4zM660 307h2v2h-2zM656 307h2v2h-2zM586 308h4v1h-4zM593 308h5v1h-5zM682 308h3v1h-3zM613 308h3v1h-3zM707 308h1v1h-1zM429 308h5v1h-5zM468 308h3v2h-3zM596 309h2v1h-2zM430 309h1v1h-1zM511 309h6v1h-6zM707 309h2v1h-2zM472 309h1v1h-1zM588 309h5v1h-5zM631 309h2v1h-2zM599 309h5v1h-5zM506 309h4v1h-4zM634 309h4v1h-4zM594 309h1v1h-1zM628 309h2v1h-2zM410 309h6v2h-6zM680 309h2v2h-2zM562 309h6v2h-6zM639 309h1v2h-1zM524 309h4v2h-4zM476 309h2v2h-2zM692 309h6v2h-6zM654 309h2v2h-2zM420 309h8v2h-8zM686 309h4v2h-4zM518 309h2v2h-2zM434 309h4v2h-4zM506 310h5v1h-5zM628 310h7v1h-7zM588 310h14v1h-14zM706 310h3v1h-3zM468 310h6v1h-6zM430 310h2v1h-2zM512 310h5v1h-5zM636 310h1v1h-1zM532 311h2v1h-2zM568 311h4v1h-4zM626 311h3v1h-3zM646 311h1v1h-1zM472 311h4v1h-4zM544 311h9v1h-9zM520 311h2v1h-2zM526 311h2v1h-2zM648 311h1v1h-1zM468 311h3v1h-3zM562 311h4v1h-4zM458 308h2v5h-2zM444 309h4v4h-4zM584 309h2v4h-2zM596 311h2v2h-2zM634 311h6v2h-6zM514 311h4v2h-4zM410 311h8v2h-8zM702 311h4v2h-4zM484 311h2v2h-2zM680 311h4v2h-4zM480 311h2v2h-2zM492 311h4v2h-4zM420 311h2v2h-2zM604 311h8v2h-8zM666 311h6v2h-6zM506 311h6v2h-6zM646 312h4v1h-4zM562 312h3v1h-3zM532 312h1v1h-1zM468 312h6v1h-6zM626 312h4v1h-4zM571 312h1v1h-1zM526 312h1v1h-1zM544 312h10v1h-10zM488 313h6v1h-6zM626 313h6v1h-6zM479 313h6v1h-6zM671 313h5v1h-5zM486 313h1v1h-1zM634 313h1v1h-1zM636 313h2v1h-2zM476 313h2v1h-2zM426 313h2v1h-2zM548 313h4v1h-4zM568 312h2v3h-2zM684 313h2v2h-2zM648 313h2v2h-2zM680 313h2v2h-2zM642 313h4v2h-4zM610 313h4v2h-4zM688 313h4v2h-4zM698 313h4v2h-4zM556 313h4v2h-4zM464 313h6v2h-6zM530 313h4v2h-4zM600 313h2v2h-2zM656 313h2v2h-2zM670 314h5v1h-5zM426 314h1v1h-1zM548 314h3v1h-3zM634 314h4v1h-4zM476 314h5v1h-5zM629 314h3v1h-3zM482 314h12v1h-12zM627 314h1v1h-1zM472 315h4v1h-4zM672 315h2v1h-2zM410 315h3v1h-3zM582 315h3v1h-3zM526 315h2v1h-2zM415 315h5v1h-5zM492 315h4v1h-4zM586 315h2v1h-2zM484 315h7v1h-7zM470 315h1v1h-1zM430 311h4v6h-4zM450 313h8v4h-8zM654 315h4v2h-4zM624 315h2v2h-2zM554 315h4v2h-4zM534 315h6v2h-6zM478 315h2v2h-2zM692 315h2v2h-2zM682 315h2v2h-2zM466 315h2v2h-2zM512 315h2v2h-2zM516 315h4v2h-4zM628 315h2v2h-2zM634 315h12v2h-12zM673 316h1v1h-1zM582 316h1v1h-1zM527 316h1v1h-1zM484 316h12v1h-12zM470 316h6v1h-6zM410 316h10v1h-10zM584 316h4v1h-4zM468 317h8v1h-8zM635 317h5v1h-5zM456 317h2v1h-2zM408 317h4v1h-4zM539 317h5v1h-5zM450 317h4v1h-4zM413 317h1v1h-1zM590 317h2v1h-2zM593 317h1v1h-1zM432 317h1v1h-1zM598 317h1v1h-1zM585 317h1v1h-1zM582 317h2v1h-2zM534 317h4v1h-4zM600 317h2v1h-2zM486 317h2v2h-2zM528 317h2v2h-2zM440 317h4v2h-4zM692 317h4v2h-4zM702 317h4v2h-4zM480 317h2v2h-2zM494 317h2v2h-2zM554 317h2v2h-2zM642 317h2v2h-2zM450 318h2v1h-2zM453 318h1v1h-1zM432 318h2v1h-2zM582 318h4v1h-4zM468 318h7v1h-7zM534 318h8v1h-8zM543 318h1v1h-1zM598 318h4v1h-4zM408 318h6v1h-6zM456 318h1v1h-1zM590 318h4v1h-4zM634 318h6v1h-6zM417 319h1v1h-1zM430 319h6v1h-6zM662 319h8v1h-8zM409 319h7v1h-7zM459 319h9v1h-9zM684 319h9v1h-9zM552 319h12v1h-12zM638 319h2v2h-2zM599 319h3v2h-3zM642 319h4v2h-4zM700 319h6v2h-6zM494 319h6v2h-6zM658 319h2v2h-2zM510 319h4v2h-4zM608 319h2v2h-2zM478 319h4v2h-4zM536 319h6v2h-6zM580 319h10v2h-10zM438 319h4v2h-4zM472 319h2v2h-2zM430 320h4v1h-4zM435 320h1v1h-1zM684 320h5v1h-5zM553 320h3v1h-3zM458 320h10v1h-10zM408 320h10v1h-10zM562 320h2v1h-2zM662 320h7v1h-7zM690 320h4v1h-4zM557 320h4v1h-4zM624 319h6v3h-6zM502 321h6v1h-6zM574 321h2v1h-2zM436 321h1v1h-1zM652 321h7v1h-7zM438 321h2v1h-2zM404 321h16v1h-16zM570 321h1v1h-1zM490 321h11v1h-11zM580 321h4v1h-4zM572 321h1v1h-1zM662 321h6v2h-6zM556 321h2v2h-2zM620 321h2v2h-2zM646 321h4v2h-4zM536 321h4v2h-4zM552 321h2v2h-2zM706 321h3v2h-3zM640 321h2v2h-2zM588 321h4v2h-4zM430 321h2v2h-2zM512 321h2v2h-2zM474 321h4v2h-4zM684 321h6v2h-6zM458 321h8v2h-8zM652 322h8v1h-8zM581 322h3v1h-3zM570 322h6v1h-6zM436 322h4v1h-4zM404 322h4v1h-4zM410 322h10v1h-10zM624 322h3v1h-3zM490 322h5v1h-5zM496 322h12v1h-12zM628 322h2v1h-2zM595 323h1v1h-1zM408 323h8v1h-8zM512 323h4v1h-4zM504 323h7v1h-7zM593 323h1v1h-1zM434 323h8v1h-8zM492 323h4v1h-4zM460 323h4v1h-4zM550 323h9v1h-9zM590 323h1v1h-1zM682 323h4v1h-4zM566 321h2v4h-2zM572 323h10v2h-10zM546 323h2v2h-2zM664 323h4v2h-4zM404 323h2v2h-2zM520 323h2v2h-2zM690 323h2v2h-2zM704 323h2v2h-2zM498 323h2v2h-2zM618 323h8v2h-8zM598 323h4v2h-4zM646 323h2v2h-2zM536 323h2v2h-2zM540 323h4v2h-4zM590 324h6v1h-6zM511 324h5v1h-5zM550 324h10v1h-10zM409 324h7v1h-7zM504 324h3v1h-3zM683 324h3v1h-3zM436 324h6v1h-6zM508 324h2v1h-2zM492 324h3v1h-3zM460 324h3v1h-3zM634 323h2v3h-2zM687 325h1v1h-1zM518 325h3v1h-3zM438 325h2v1h-2zM694 325h4v1h-4zM618 325h2v1h-2zM514 325h3v1h-3zM621 325h1v1h-1zM546 325h12v1h-12zM441 325h3v1h-3zM654 323h4v4h-4zM584 323h2v4h-2zM672 325h6v2h-6zM560 325h2v2h-2zM448 325h4v2h-4zM418 325h2v2h-2zM646 325h4v2h-4zM406 325h2v2h-2zM506 325h4v2h-4zM494 325h2v2h-2zM600 325h8v2h-8zM578 325h2v2h-2zM588 325h6v2h-6zM546 326h8v1h-8zM695 326h3v1h-3zM438 326h6v1h-6zM686 326h2v1h-2zM634 326h1v1h-1zM555 326h3v1h-3zM515 326h7v1h-7zM618 326h4v1h-4zM694 327h2v1h-2zM692 327h1v1h-1zM502 327h11v1h-11zM418 327h4v1h-4zM706 327h3v1h-3zM562 327h8v1h-8zM589 327h1v1h-1zM462 327h2v1h-2zM672 327h4v1h-4zM465 327h1v1h-1zM547 327h3v1h-3zM514 327h2v1h-2zM446 327h6v2h-6zM624 327h2v2h-2zM496 327h2v2h-2zM634 327h2v2h-2zM610 327h4v2h-4zM492 327h2v2h-2zM436 327h4v2h-4zM456 327h2v2h-2zM678 327h6v2h-6zM646 327h6v2h-6zM526 327h4v2h-4zM406 327h4v2h-4zM602 327h6v2h-6zM462 328h4v1h-4zM707 328h2v1h-2zM562 328h6v1h-6zM588 328h2v1h-2zM692 328h4v1h-4zM569 328h1v1h-1zM673 328h3v1h-3zM502 328h14v1h-14zM546 328h4v1h-4zM419 328h3v1h-3zM567 329h1v1h-1zM520 329h6v1h-6zM527 329h1v1h-1zM500 329h4v1h-4zM505 329h1v1h-1zM516 329h2v1h-2zM628 329h6v1h-6zM420 329h2v1h-2zM690 329h4v1h-4zM564 329h2v1h-2zM606 329h2v2h-2zM476 329h4v2h-4zM494 329h4v2h-4zM510 329h2v2h-2zM544 329h6v2h-6zM458 329h4v2h-4zM644 329h8v2h-8zM578 329h10v2h-10zM446 329h2v2h-2zM406 329h2v2h-2zM696 329h2v2h-2zM594 329h4v2h-4zM452 329h4v2h-4zM614 329h2v2h-2zM517 330h1v1h-1zM421 330h1v1h-1zM564 330h4v1h-4zM628 330h3v1h-3zM500 330h6v1h-6zM690 330h1v1h-1zM520 330h10v1h-10zM692 330h2v1h-2zM612 331h6v1h-6zM580 331h6v1h-6zM587 331h1v1h-1zM592 331h4v1h-4zM512 331h6v1h-6zM643 331h1v1h-1zM694 331h4v1h-4zM640 331h2v1h-2zM522 331h2v1h-2zM646 331h2v1h-2zM534 331h4v1h-4zM704 329h5v4h-5zM632 330h2v3h-2zM478 331h2v2h-2zM690 331h2v2h-2zM620 331h4v2h-4zM554 331h6v2h-6zM490 331h12v2h-12zM526 331h2v2h-2zM576 331h2v2h-2zM650 331h2v2h-2zM452 331h10v2h-10zM414 331h6v2h-6zM544 331h4v2h-4zM581 332h7v1h-7zM512 332h4v1h-4zM517 332h1v1h-1zM535 332h3v1h-3zM697 332h1v1h-1zM523 332h1v1h-1zM647 332h1v1h-1zM612 332h5v1h-5zM592 332h3v1h-3zM695 332h1v1h-1zM640 332h4v1h-4zM672 329h4v5h-4zM512 333h1v1h-1zM554 333h4v1h-4zM642 333h4v1h-4zM596 333h1v1h-1zM560 333h1v1h-1zM474 333h5v1h-5zM510 333h1v1h-1zM677 333h5v1h-5zM562 333h2v1h-2zM594 333h1v1h-1zM405 333h3v1h-3zM694 333h6v1h-6zM514 333h2v1h-2zM416 333h4v2h-4zM456 333h6v2h-6zM620 333h2v2h-2zM536 333h4v2h-4zM616 333h2v2h-2zM440 333h4v2h-4zM494 333h6v2h-6zM626 333h8v2h-8zM612 333h2v2h-2zM590 333h2v2h-2zM706 333h2v2h-2zM604 333h4v2h-4zM474 334h6v1h-6zM560 334h4v1h-4zM595 334h3v1h-3zM404 334h4v1h-4zM554 334h2v1h-2zM643 334h3v1h-3zM672 334h10v1h-10zM557 334h1v1h-1zM694 334h3v1h-3zM510 334h6v1h-6zM698 334h2v2h-2zM509 335h5v1h-5zM420 335h4v1h-4zM538 335h3v1h-3zM435 335h1v1h-1zM432 335h2v1h-2zM552 335h1v1h-1zM611 335h3v1h-3zM478 335h12v1h-12zM632 335h4v2h-4zM556 335h2v2h-2zM404 335h2v2h-2zM580 335h6v2h-6zM638 335h2v2h-2zM678 335h10v2h-10zM694 335h2v2h-2zM414 335h2v2h-2zM602 335h2v2h-2zM656 335h6v2h-6zM498 335h2v2h-2zM570 335h4v2h-4zM494 335h2v2h-2zM672 335h4v2h-4zM592 335h6v2h-6zM622 335h4v2h-4zM516 335h4v2h-4zM440 335h2v2h-2zM458 335h2v2h-2zM422 336h2v1h-2zM478 336h5v1h-5zM610 336h4v1h-4zM508 336h6v1h-6zM484 336h5v1h-5zM432 336h4v1h-4zM699 336h1v1h-1zM538 336h4v1h-4zM553 336h1v1h-1zM420 336h1v1h-1zM414 337h5v1h-5zM570 337h8v1h-8zM593 337h1v1h-1zM515 337h1v1h-1zM420 337h2v1h-2zM632 337h2v1h-2zM640 337h4v1h-4zM680 337h6v1h-6zM492 337h6v2h-6zM598 337h6v2h-6zM582 337h4v2h-4zM486 337h4v2h-4zM688 337h4v2h-4zM408 337h4v2h-4zM676 337h2v2h-2zM614 337h6v2h-6zM552 337h4v2h-4zM654 337h8v2h-8zM430 337h2v2h-2zM668 337h4v2h-4zM592 338h2v1h-2zM572 338h6v1h-6zM633 338h1v1h-1zM418 338h4v1h-4zM643 338h1v1h-1zM680 338h1v1h-1zM640 338h2v1h-2zM415 338h2v1h-2zM570 338h1v1h-1zM682 338h4v1h-4zM532 339h2v1h-2zM530 339h1v1h-1zM614 339h9v1h-9zM681 339h3v1h-3zM676 339h3v1h-3zM476 337h2v4h-2zM514 338h2v3h-2zM668 339h2v2h-2zM408 339h2v2h-2zM412 339h2v2h-2zM686 339h4v2h-4zM558 339h6v2h-6zM672 339h2v2h-2zM492 339h4v2h-4zM420 339h2v2h-2zM700 339h4v2h-4zM598 339h4v2h-4zM530 340h4v1h-4zM620 340h3v1h-3zM615 340h4v1h-4zM676 340h8v1h-8zM540 341h3v1h-3zM690 341h6v1h-6zM408 341h4v1h-4zM604 341h4v1h-4zM574 339h4v4h-4zM556 341h4v2h-4zM438 341h2v2h-2zM612 341h2v2h-2zM668 341h4v2h-4zM700 341h2v2h-2zM684 341h2v2h-2zM674 341h6v2h-6zM490 341h4v2h-4zM624 341h4v2h-4zM530 341h2v2h-2zM648 341h2v2h-2zM564 341h2v2h-2zM408 342h2v1h-2zM692 342h4v1h-4zM540 342h2v1h-2zM604 342h2v1h-2zM543 342h1v1h-1zM607 342h1v1h-1zM690 342h1v1h-1zM411 342h1v1h-1zM476 341h6v3h-6zM564 343h5v1h-5zM542 343h2v1h-2zM451 343h11v1h-11zM629 343h1v1h-1zM648 343h1v1h-1zM665 343h3v1h-3zM675 343h3v1h-3zM650 343h2v1h-2zM534 343h7v1h-7zM602 343h6v1h-6zM700 343h1v1h-1zM546 343h2v2h-2zM556 343h2v2h-2zM550 343h4v2h-4zM408 343h4v2h-4zM442 343h2v2h-2zM684 343h4v2h-4zM484 343h2v2h-2zM476 344h1v1h-1zM534 344h6v1h-6zM665 344h1v1h-1zM674 344h4v1h-4zM648 344h4v1h-4zM478 344h4v1h-4zM602 344h1v1h-1zM700 344h2v1h-2zM564 344h6v1h-6zM541 344h3v1h-3zM450 344h12v1h-12zM628 344h2v1h-2zM604 344h4v1h-4zM436 343h4v3h-4zM606 345h14v1h-14zM576 345h3v1h-3zM628 345h4v1h-4zM692 345h4v1h-4zM705 345h3v1h-3zM580 345h2v1h-2zM441 345h1v1h-1zM634 345h4v1h-4zM690 345h1v1h-1zM702 345h2v1h-2zM498 343h2v4h-2zM426 343h2v4h-2zM532 345h2v2h-2zM550 345h2v2h-2zM698 345h2v2h-2zM660 345h4v2h-4zM478 345h8v2h-8zM456 345h2v2h-2zM450 345h4v2h-4zM554 345h6v2h-6zM544 345h2v2h-2zM562 345h8v2h-8zM460 345h4v2h-4zM678 345h2v2h-2zM536 345h2v2h-2zM690 346h6v1h-6zM576 346h6v1h-6zM702 346h7v1h-7zM616 346h4v1h-4zM634 346h1v1h-1zM636 346h2v1h-2zM628 346h3v1h-3zM436 346h6v1h-6zM606 346h9v1h-9zM613 347h1v1h-1zM517 347h1v1h-1zM551 347h1v1h-1zM548 347h2v1h-2zM635 347h1v1h-1zM524 347h6v2h-6zM606 347h2v2h-2zM586 347h4v2h-4zM444 347h4v2h-4zM542 347h2v2h-2zM680 347h2v2h-2zM658 347h2v2h-2zM580 347h2v2h-2zM426 347h12v2h-12zM704 347h2v2h-2zM618 347h2v2h-2zM458 347h6v2h-6zM628 347h2v2h-2zM558 347h2v2h-2zM554 347h2v2h-2zM690 347h4v2h-4zM564 347h2v2h-2zM634 348h2v1h-2zM612 348h2v1h-2zM516 348h2v1h-2zM548 348h4v1h-4zM661 349h5v1h-5zM650 349h4v1h-4zM655 349h1v1h-1zM536 349h4v1h-4zM459 349h1v1h-1zM429 349h9v1h-9zM542 349h4v1h-4zM424 349h1v1h-1zM426 349h2v1h-2zM534 349h1v1h-1zM556 349h14v2h-14zM464 349h4v2h-4zM548 349h2v2h-2zM506 349h4v2h-4zM514 349h6v2h-6zM408 349h3v2h-3zM586 349h2v2h-2zM668 349h4v2h-4zM470 349h4v2h-4zM500 349h2v2h-2zM534 350h6v1h-6zM429 350h3v1h-3zM650 350h6v1h-6zM433 350h5v1h-5zM660 350h6v1h-6zM542 350h1v1h-1zM544 350h2v1h-2zM458 350h2v1h-2zM424 350h4v2h-4zM560 351h8v1h-8zM684 351h2v1h-2zM508 351h2v1h-2zM678 351h5v1h-5zM414 351h3v1h-3zM436 351h2v2h-2zM494 351h4v2h-4zM554 351h4v2h-4zM432 351h2v2h-2zM648 351h8v2h-8zM662 351h2v2h-2zM502 351h2v2h-2zM592 351h4v2h-4zM482 351h4v2h-4zM668 351h2v2h-2zM470 351h2v2h-2zM404 351h4v2h-4zM466 351h2v2h-2zM516 351h4v2h-4zM536 351h2v2h-2zM424 352h3v1h-3zM508 352h1v1h-1zM562 352h6v1h-6zM560 352h1v1h-1zM414 352h4v1h-4zM678 352h8v1h-8zM543 353h3v1h-3zM590 353h6v1h-6zM680 353h5v1h-5zM429 353h3v1h-3zM554 353h3v1h-3zM558 353h2v1h-2zM426 353h2v1h-2zM612 351h4v4h-4zM464 353h2v2h-2zM404 353h2v2h-2zM492 353h2v2h-2zM500 353h4v2h-4zM522 353h6v2h-6zM580 353h2v2h-2zM516 353h2v2h-2zM704 353h2v2h-2zM480 353h2v2h-2zM416 353h2v2h-2zM452 353h4v2h-4zM692 353h2v2h-2zM434 353h10v2h-10zM592 354h4v1h-4zM554 354h6v1h-6zM542 354h4v1h-4zM428 354h4v1h-4zM590 354h1v1h-1zM680 354h6v1h-6zM564 354h2v1h-2zM506 353h2v3h-2zM693 355h5v1h-5zM511 355h5v1h-5zM688 355h4v1h-4zM601 355h3v1h-3zM442 355h4v1h-4zM542 355h6v1h-6zM618 355h4v1h-4zM624 355h2v2h-2zM484 355h6v2h-6zM452 355h2v2h-2zM438 355h2v2h-2zM498 355h2v2h-2zM562 355h2v2h-2zM432 355h4v2h-4zM682 355h2v2h-2zM634 355h4v2h-4zM550 355h6v2h-6zM462 355h2v2h-2zM614 355h2v2h-2zM704 355h4v2h-4zM466 355h4v2h-4zM546 356h2v1h-2zM443 356h3v1h-3zM688 356h10v1h-10zM506 356h1v1h-1zM603 356h1v1h-1zM621 356h1v1h-1zM510 356h6v1h-6zM542 356h3v1h-3zM600 356h2v1h-2zM490 357h4v1h-4zM458 357h1v1h-1zM460 357h2v1h-2zM574 357h1v1h-1zM677 357h1v1h-1zM413 357h3v1h-3zM576 357h4v1h-4zM596 355h2v4h-2zM618 356h2v3h-2zM486 357h2v2h-2zM550 357h2v2h-2zM448 357h4v2h-4zM518 357h4v2h-4zM422 357h4v2h-4zM464 357h4v2h-4zM626 357h2v2h-2zM622 357h2v2h-2zM694 357h4v2h-4zM478 357h4v2h-4zM440 357h6v2h-6zM606 357h6v2h-6zM544 357h4v2h-4zM564 357h2v2h-2zM412 358h4v1h-4zM458 358h4v1h-4zM493 358h1v1h-1zM574 358h6v1h-6zM490 358h2v2h-2zM426 359h1v1h-1zM481 359h1v1h-1zM444 359h4v1h-4zM590 359h2v1h-2zM593 359h1v1h-1zM472 359h8v1h-8zM422 359h3v1h-3zM618 359h4v1h-4zM676 358h2v3h-2zM428 359h6v2h-6zM606 359h2v2h-2zM610 359h4v2h-4zM456 359h2v2h-2zM554 359h2v2h-2zM412 359h2v2h-2zM516 359h4v2h-4zM444 360h3v1h-3zM472 360h7v1h-7zM621 360h1v1h-1zM423 360h4v1h-4zM480 360h2v1h-2zM490 360h1v1h-1zM590 360h4v1h-4zM618 360h2v1h-2zM658 361h6v1h-6zM479 361h3v1h-3zM616 361h2v1h-2zM619 361h1v1h-1zM534 361h5v1h-5zM476 361h2v1h-2zM541 361h3v1h-3zM498 357h4v6h-4zM556 361h2v2h-2zM590 361h6v2h-6zM666 361h2v2h-2zM628 361h4v2h-4zM608 361h2v2h-2zM704 361h2v2h-2zM644 361h4v2h-4zM426 361h2v2h-2zM444 361h2v2h-2zM418 361h6v2h-6zM678 361h2v2h-2zM616 362h4v1h-4zM663 362h1v1h-1zM476 362h6v1h-6zM534 362h10v1h-10zM659 362h3v1h-3zM612 363h4v1h-4zM592 363h5v1h-5zM641 363h7v1h-7zM452 363h4v1h-4zM655 363h4v1h-4zM700 363h2v1h-2zM517 363h1v1h-1zM696 363h3v1h-3zM460 359h2v6h-2zM706 363h2v2h-2zM678 363h12v2h-12zM474 363h4v2h-4zM430 363h6v2h-6zM632 363h2v2h-2zM420 363h2v2h-2zM578 363h2v2h-2zM538 363h8v2h-8zM500 363h2v2h-2zM654 364h6v1h-6zM615 364h1v1h-1zM696 364h6v1h-6zM455 364h1v1h-1zM612 364h2v1h-2zM452 364h2v1h-2zM516 364h2v1h-2zM640 364h8v1h-8zM592 364h6v1h-6zM488 365h3v1h-3zM592 365h8v1h-8zM662 365h4v1h-4zM520 365h6v2h-6zM443 365h3v2h-3zM542 365h2v2h-2zM514 365h2v2h-2zM422 365h4v2h-4zM474 365h2v2h-2zM684 365h4v2h-4zM622 365h2v2h-2zM432 365h4v2h-4zM696 365h2v2h-2zM554 365h2v2h-2zM612 365h4v2h-4zM576 365h4v2h-4zM642 365h2v2h-2zM702 365h2v2h-2zM662 366h1v1h-1zM488 366h4v1h-4zM593 366h6v1h-6zM664 366h2v2h-2zM550 367h2v1h-2zM632 367h1v1h-1zM594 367h6v1h-6zM638 367h2v1h-2zM634 367h2v1h-2zM458 367h4v1h-4zM463 367h1v1h-1zM520 367h2v1h-2zM442 367h4v1h-4zM582 367h2v1h-2zM652 365h4v4h-4zM560 367h2v2h-2zM622 367h6v2h-6zM524 367h2v2h-2zM486 367h4v2h-4zM542 367h4v2h-4zM566 367h4v2h-4zM534 367h4v2h-4zM582 368h1v1h-1zM665 368h1v1h-1zM551 368h1v1h-1zM632 368h3v1h-3zM639 368h1v1h-1zM594 368h4v1h-4zM442 368h1v1h-1zM444 368h2v1h-2zM599 368h1v1h-1zM521 368h1v1h-1zM459 368h5v1h-5zM528 367h4v3h-4zM474 369h6v1h-6zM542 369h2v1h-2zM630 369h4v1h-4zM550 369h3v1h-3zM460 369h4v1h-4zM535 369h1v1h-1zM440 369h2v1h-2zM428 367h4v4h-4zM454 369h2v2h-2zM580 369h6v2h-6zM566 369h2v2h-2zM626 369h2v2h-2zM638 369h4v2h-4zM576 369h2v2h-2zM708 369h1v2h-1zM494 369h8v2h-8zM650 369h2v2h-2zM420 369h7v2h-7zM552 370h2v1h-2zM440 370h4v1h-4zM460 370h2v1h-2zM550 370h1v1h-1zM630 370h2v1h-2zM463 370h1v1h-1zM534 370h2v1h-2zM542 370h1v1h-1zM528 370h3v1h-3zM474 370h4v1h-4zM479 370h1v1h-1zM610 371h4v1h-4zM498 371h2v1h-2zM628 371h3v1h-3zM572 371h1v1h-1zM594 371h4v2h-4zM588 371h2v2h-2zM532 371h1v2h-1zM662 371h6v2h-6zM694 371h4v2h-4zM526 371h4v2h-4zM575 371h5v2h-5zM600 371h2v2h-2zM476 371h2v2h-2zM456 371h2v2h-2zM494 371h2v2h-2zM584 371h2v2h-2zM544 371h4v2h-4zM628 372h4v1h-4zM610 372h3v1h-3zM499 372h1v1h-1zM644 373h2v1h-2zM570 373h14v1h-14zM676 373h2v1h-2zM594 373h8v1h-8zM496 373h1v1h-1zM430 371h2v4h-2zM516 373h6v2h-6zM526 373h6v2h-6zM542 373h2v2h-2zM566 373h2v2h-2zM546 373h4v2h-4zM612 373h2v2h-2zM680 373h4v2h-4zM666 373h4v2h-4zM588 373h4v2h-4zM462 373h2v2h-2zM414 373h6v2h-6zM692 373h2v2h-2zM594 374h3v1h-3zM571 374h6v1h-6zM496 374h2v1h-2zM674 374h4v1h-4zM578 374h3v1h-3zM598 374h4v1h-4zM582 374h2v1h-2zM645 374h1v1h-1zM559 375h1v1h-1zM472 375h1v1h-1zM566 375h8v1h-8zM576 375h2v1h-2zM627 375h5v1h-5zM468 375h3v1h-3zM668 375h1v1h-1zM622 375h4v1h-4zM579 375h3v1h-3zM708 373h1v4h-1zM436 375h8v2h-8zM432 375h2v2h-2zM588 375h2v2h-2zM644 375h2v2h-2zM546 375h10v2h-10zM412 375h6v2h-6zM700 375h2v2h-2zM524 375h10v2h-10zM696 375h2v2h-2zM674 375h2v2h-2zM576 376h6v1h-6zM568 376h6v1h-6zM668 376h2v1h-2zM468 376h6v1h-6zM558 376h2v1h-2zM566 376h1v1h-1zM622 376h10v1h-10zM590 377h3v1h-3zM686 377h12v1h-12zM441 377h2v1h-2zM434 377h6v1h-6zM420 377h6v1h-6zM446 377h2v1h-2zM699 377h5v1h-5zM680 377h4v1h-4zM476 377h2v1h-2zM410 377h4v1h-4zM474 377h1v1h-1zM578 377h2v1h-2zM606 375h4v4h-4zM568 377h4v2h-4zM552 377h2v2h-2zM706 377h3v2h-3zM626 377h2v2h-2zM672 377h4v2h-4zM560 377h6v2h-6zM458 377h2v2h-2zM437 378h6v1h-6zM681 378h3v1h-3zM578 378h1v1h-1zM410 378h2v1h-2zM422 378h4v1h-4zM701 378h3v1h-3zM413 378h1v1h-1zM445 378h3v1h-3zM474 378h4v1h-4zM590 378h4v1h-4zM697 378h2v1h-2zM686 378h10v1h-10zM434 378h1v1h-1zM678 379h1v1h-1zM570 379h2v1h-2zM411 379h3v1h-3zM693 379h1v1h-1zM684 379h4v1h-4zM602 379h4v1h-4zM476 379h2v1h-2zM607 379h1v1h-1zM626 379h4v1h-4zM631 379h1v1h-1zM479 379h1v1h-1zM406 379h4v1h-4zM682 379h1v1h-1zM562 379h7v1h-7zM650 379h4v2h-4zM668 379h6v2h-6zM582 379h4v2h-4zM446 379h2v2h-2zM456 379h2v2h-2zM620 379h4v2h-4zM590 379h2v2h-2zM704 379h5v2h-5zM552 379h1v2h-1zM634 379h4v2h-4zM662 379h4v2h-4zM476 380h4v1h-4zM407 380h7v1h-7zM626 380h6v1h-6zM682 380h6v1h-6zM678 380h2v1h-2zM602 380h6v1h-6zM692 380h2v1h-2zM562 380h10v1h-10zM424 379h2v3h-2zM498 379h2v3h-2zM584 381h2v1h-2zM427 381h1v1h-1zM651 381h3v1h-3zM493 381h1v1h-1zM470 381h4v1h-4zM604 381h4v1h-4zM522 379h6v4h-6zM620 381h2v2h-2zM530 381h6v2h-6zM694 381h2v2h-2zM552 381h2v2h-2zM450 381h1v2h-1zM580 381h2v2h-2zM686 381h2v2h-2zM406 381h2v2h-2zM478 381h4v2h-4zM562 381h2v2h-2zM566 381h4v2h-4zM460 381h4v2h-4zM664 381h2v2h-2zM452 381h4v2h-4zM668 381h4v2h-4zM604 382h1v1h-1zM650 382h4v1h-4zM492 382h2v1h-2zM473 382h1v1h-1zM470 382h2v1h-2zM607 382h1v1h-1zM632 382h2v1h-2zM585 382h1v1h-1zM424 382h4v1h-4zM498 382h1v1h-1zM415 383h3v1h-3zM566 383h2v1h-2zM586 383h3v1h-3zM559 383h3v1h-3zM492 383h1v1h-1zM494 383h2v1h-2zM674 383h8v1h-8zM532 383h2v2h-2zM471 383h1v2h-1zM520 383h6v2h-6zM478 383h2v2h-2zM550 383h4v2h-4zM500 383h2v2h-2zM576 383h8v2h-8zM634 383h4v2h-4zM462 383h2v2h-2zM456 383h4v2h-4zM426 383h2v2h-2zM558 384h4v1h-4zM586 384h4v1h-4zM414 384h2v1h-2zM417 384h1v1h-1zM674 384h10v1h-10zM492 384h4v1h-4zM566 384h1v1h-1zM550 385h2v1h-2zM586 385h2v1h-2zM680 385h1v1h-1zM544 385h5v1h-5zM682 385h2v1h-2zM589 385h1v1h-1zM504 385h1v1h-1zM694 383h4v4h-4zM686 385h2v2h-2zM510 385h4v2h-4zM517 385h5v2h-5zM556 385h2v2h-2zM426 385h4v2h-4zM438 385h3v2h-3zM444 386h3v1h-3zM505 386h1v1h-1zM544 386h8v1h-8zM681 386h3v1h-3zM586 386h4v1h-4zM490 385h2v3h-2zM611 386h3v2h-3zM657 386h3v2h-3zM595 387h7v1h-7zM442 387h5v1h-5zM678 387h3v1h-3zM586 387h2v1h-2zM667 387h7v1h-7zM496 387h3v1h-3zM434 387h7v1h-7zM704 385h2v4h-2zM549 387h1v2h-1zM684 387h2v2h-2zM516 387h6v2h-6zM694 387h2v2h-2zM578 387h4v2h-4zM428 387h2v2h-2zM698 387h1v2h-1zM675 387h1v2h-1zM573 387h3v2h-3zM480 387h2v2h-2zM700 387h2v2h-2zM419 387h1v2h-1zM645 387h2v2h-2zM486 387h3v2h-3zM551 387h3v2h-3zM504 387h2v2h-2zM490 388h1v1h-1zM595 388h4v1h-4zM678 388h4v1h-4zM512 388h3v1h-3zM586 388h3v1h-3zM667 388h5v1h-5zM547 388h1v1h-1zM496 388h4v1h-4zM449 388h3v1h-3zM435 388h11v1h-11zM412 387h6v3h-6zM705 389h4v1h-4zM580 389h9v1h-9zM508 389h7v1h-7zM440 389h6v1h-6zM640 389h1v1h-1zM642 389h2v1h-2zM645 389h1v1h-1zM429 389h1v1h-1zM702 389h2v1h-2zM600 388h2v3h-2zM670 389h2v2h-2zM436 389h2v2h-2zM684 389h4v2h-4zM484 389h2v2h-2zM548 389h2v2h-2zM497 389h1v2h-1zM540 389h2v2h-2zM516 389h4v2h-4zM678 389h2v2h-2zM610 389h2v2h-2zM419 389h3v2h-3zM508 390h4v1h-4zM431 390h1v1h-1zM640 390h6v1h-6zM428 390h2v1h-2zM445 390h1v1h-1zM702 390h7v1h-7zM412 390h3v1h-3zM440 390h3v1h-3zM416 390h2v1h-2zM586 390h2v1h-2zM580 390h4v1h-4zM448 389h6v3h-6zM631 390h5v2h-5zM565 391h4v1h-4zM518 391h1v1h-1zM520 391h1v1h-1zM491 391h1v1h-1zM488 391h1v1h-1zM592 389h2v4h-2zM476 389h2v4h-2zM706 391h2v2h-2zM466 391h3v2h-3zM458 391h1v2h-1zM573 391h3v2h-3zM580 391h2v2h-2zM642 391h2v2h-2zM448 392h2v1h-2zM452 392h2v1h-2zM488 392h4v1h-4zM518 392h3v1h-3zM632 392h4v1h-4zM565 392h1v1h-1zM605 392h3v2h-3zM481 392h3v2h-3zM662 393h2v1h-2zM624 393h2v1h-2zM635 393h1v1h-1zM658 393h3v1h-3zM514 393h2v1h-2zM629 393h1v1h-1zM708 393h1v2h-1zM508 393h1v2h-1zM517 393h1v2h-1zM580 393h6v2h-6zM520 393h1v2h-1zM679 393h3v2h-3zM514 394h1v1h-1zM658 394h6v1h-6zM624 394h3v1h-3zM634 394h2v1h-2zM455 394h3v2h-3zM682 395h3v1h-3zM496 395h1v1h-1zM506 395h1v1h-1zM472 395h2v1h-2zM426 395h3v1h-3zM626 395h1v2h-1zM644 395h2v2h-2zM661 395h1v2h-1zM668 395h4v2h-4zM698 395h2v2h-2zM578 395h2v2h-2zM511 395h1v2h-1zM424 395h1v2h-1zM427 396h3v1h-3zM681 396h4v1h-4zM404 394h3v4h-3zM600 396h3v2h-3zM592 397h2v1h-2zM579 397h3v1h-3zM427 397h1v1h-1zM472 396h1v3h-1zM676 397h1v2h-1zM698 397h3v2h-3zM487 397h3v2h-3zM611 397h1v2h-1zM577 398h5v1h-5zM604 397h2v3h-2zM517 398h3v2h-3zM653 398h3v2h-3zM481 398h3v2h-3zM534 399h2v1h-2zM566 399h1v1h-1zM593 398h1v3h-1zM672 399h1v2h-1zM535 400h1v1h-1zM531 400h2v2h-2zM417 400h3v2h-3zM666 400h3v2h-3zM535 401h4v1h-4zM543 401h3v2h-3zM423 401h3v2h-3zM454 402h2v1h-2zM536 402h4v1h-4zM610 402h3v2h-3zM624 402h3v2h-3zM536 403h3v1h-3zM541 403h1v2h-1zM690 403h3v2h-3zM570 403h3v2h-3zM520 403h2v3h-2zM511 404h3v2h-3zM405 404h3v2h-3zM433 404h3v2h-3zM650 405h3v1h-3zM534 404h3v3h-3zM481 405h3v2h-3zM652 406h1v1h-1zM650 406h1v1h-1zM484 407h2v1h-2z" fill="#18aee0"/></svg><div style="position:absolute;left:366px;top:22px;width:337px;height:182px;overflow:hidden"><div style="position:absolute;left:8.5px;top:20.0px;font-size:9px;line-height:10px;color:#3070d8;white-space:pre;transform:scaleX(0.91);transform-origin:0 0">Analyzed   Subframe</div><div style="position:absolute;left:108px;top:20.0px;font-size:9px;line-height:10px;color:#3070d8;white-space:pre;transform:scaleX(0.91);transform-origin:0 0">[Sf0,sym0]</div><div style="position:absolute;left:8.5px;top:30.14px;font-size:9px;line-height:10px;color:#3070d8;white-space:pre;transform:scaleX(0.91);transform-origin:0 0">Channel  Power</div><div style="position:absolute;left:108px;top:30.14px;font-size:9px;line-height:10px;color:#3070d8;white-space:pre;transform:scaleX(0.91);transform-origin:0 0">44.782</div><div style="position:absolute;left:139px;top:30.14px;font-size:9px;line-height:10px;color:#3070d8;white-space:pre;transform:scaleX(0.91);transform-origin:0 0">dBm</div><div style="position:absolute;left:8.5px;top:40.28px;font-size:9px;line-height:10px;color:#3070d8;white-space:pre;transform:scaleX(0.91);transform-origin:0 0">OFDMSym.  Tx.   Power</div><div style="position:absolute;left:108px;top:40.28px;font-size:9px;line-height:10px;color:#3070d8;white-space:pre;transform:scaleX(0.91);transform-origin:0 0">45.11</div><div style="position:absolute;left:139px;top:40.28px;font-size:9px;line-height:10px;color:#3070d8;white-space:pre;transform:scaleX(0.91);transform-origin:0 0">dBm</div><div style="position:absolute;left:8.5px;top:50.42px;font-size:9px;line-height:10px;color:#3070d8;white-space:pre;transform:scaleX(0.91);transform-origin:0 0">EVM</div><div style="position:absolute;left:108px;top:50.42px;font-size:9px;line-height:10px;color:#3070d8;white-space:pre;transform:scaleX(0.91);transform-origin:0 0">-13.208</div><div style="position:absolute;left:162px;top:50.42px;font-size:9px;line-height:10px;color:#3070d8;white-space:pre;transform:scaleX(0.91);transform-origin:0 0">dB</div><div style="position:absolute;left:8.5px;top:60.56px;font-size:9px;line-height:10px;color:#3070d8;white-space:pre;transform:scaleX(0.91);transform-origin:0 0">EVMPk</div><div style="position:absolute;left:108px;top:60.56px;font-size:9px;line-height:10px;color:#3070d8;white-space:pre;transform:scaleX(0.91);transform-origin:0 0">-2.1714</div><div style="position:absolute;left:162px;top:60.56px;font-size:9px;line-height:10px;color:#3070d8;white-space:pre;transform:scaleX(0.91);transform-origin:0 0">dB</div><div style="position:absolute;left:8.5px;top:70.7px;font-size:9px;line-height:10px;color:#3070d8;white-space:pre;transform:scaleX(0.91);transform-origin:0 0">Mag Err</div><div style="position:absolute;left:108px;top:70.7px;font-size:9px;line-height:10px;color:#3070d8;white-space:pre;transform:scaleX(0.91);transform-origin:0 0">9.507</div><div style="position:absolute;left:135px;top:70.7px;font-size:9px;line-height:10px;color:#3070d8;white-space:pre;transform:scaleX(0.91);transform-origin:0 0">%rms</div><div style="position:absolute;left:8.5px;top:80.84px;font-size:9px;line-height:10px;color:#3070d8;white-space:pre;transform:scaleX(0.91);transform-origin:0 0">Mag Err   Pk</div><div style="position:absolute;left:108px;top:80.84px;font-size:9px;line-height:10px;color:#3070d8;white-space:pre;transform:scaleX(0.91);transform-origin:0 0">45.866</div><div style="position:absolute;left:139.5px;top:80.84px;font-size:9px;line-height:10px;color:#3070d8;white-space:pre;transform:scaleX(0.91);transform-origin:0 0">%pk</div><div style="position:absolute;left:8.5px;top:90.98px;font-size:9px;line-height:10px;color:#3070d8;white-space:pre;transform:scaleX(0.91);transform-origin:0 0">Phase  Err</div><div style="position:absolute;left:108px;top:90.98px;font-size:9px;line-height:10px;color:#3070d8;white-space:pre;transform:scaleX(0.91);transform-origin:0 0">0.1976</div><div style="position:absolute;left:139px;top:90.98px;font-size:9px;line-height:10px;color:#3070d8;white-space:pre;transform:scaleX(0.91);transform-origin:0 0">deg</div><div style="position:absolute;left:8.5px;top:101.12px;font-size:9px;line-height:10px;color:#3070d8;white-space:pre;transform:scaleX(0.91);transform-origin:0 0">Phase  Err   Pk</div><div style="position:absolute;left:108px;top:101.12px;font-size:9px;line-height:10px;color:#3070d8;white-space:pre;transform:scaleX(0.91);transform-origin:0 0">0.7653</div><div style="position:absolute;left:139px;top:101.12px;font-size:9px;line-height:10px;color:#3070d8;white-space:pre;transform:scaleX(0.91);transform-origin:0 0">deg</div><div style="position:absolute;left:8.5px;top:111.25999999999999px;font-size:9px;line-height:10px;color:#3070d8;white-space:pre;transform:scaleX(0.91);transform-origin:0 0">Frequency  Error</div><div style="position:absolute;left:108px;top:111.25999999999999px;font-size:9px;line-height:10px;color:#3070d8;white-space:pre;transform:scaleX(0.91);transform-origin:0 0">1.0003</div><div style="position:absolute;left:139px;top:111.25999999999999px;font-size:9px;line-height:10px;color:#3070d8;white-space:pre;transform:scaleX(0.91);transform-origin:0 0">kHz</div><div style="position:absolute;left:8.5px;top:121.4px;font-size:9px;line-height:10px;color:#3070d8;white-space:pre;transform:scaleX(0.91);transform-origin:0 0">Symbol  Clock  Error</div><div style="position:absolute;left:108px;top:121.4px;font-size:9px;line-height:10px;color:#3070d8;white-space:pre;transform:scaleX(0.91);transform-origin:0 0">-0.000</div><div style="position:absolute;left:139px;top:121.4px;font-size:9px;line-height:10px;color:#3070d8;white-space:pre;transform:scaleX(0.91);transform-origin:0 0">ppm</div><div style="position:absolute;left:8.5px;top:131.54000000000002px;font-size:9px;line-height:10px;color:#3070d8;white-space:pre;transform:scaleX(0.91);transform-origin:0 0">IQ  Offset</div><div style="position:absolute;left:108px;top:131.54000000000002px;font-size:9px;line-height:10px;color:#3070d8;white-space:pre;transform:scaleX(0.91);transform-origin:0 0">-48.409</div><div style="position:absolute;left:144px;top:131.54000000000002px;font-size:9px;line-height:10px;color:#3070d8;white-space:pre;transform:scaleX(0.91);transform-origin:0 0">dB</div><div style="position:absolute;left:8.5px;top:141.68px;font-size:9px;line-height:10px;color:#3070d8;white-space:pre;transform:scaleX(0.91);transform-origin:0 0">IQ  Gain  Imbalance</div><div style="position:absolute;left:108px;top:141.68px;font-size:9px;line-height:10px;color:#3070d8;white-space:pre;transform:scaleX(0.91);transform-origin:0 0">***</div><div style="position:absolute;left:8.5px;top:151.82px;font-size:9px;line-height:10px;color:#3070d8;white-space:pre;transform:scaleX(0.91);transform-origin:0 0">IQ  Quad  Error</div><div style="position:absolute;left:108px;top:151.82px;font-size:9px;line-height:10px;color:#3070d8;white-space:pre;transform:scaleX(0.91);transform-origin:0 0">***</div><div style="position:absolute;left:8.5px;top:161.96px;font-size:9px;line-height:10px;color:#3070d8;white-space:pre;transform:scaleX(0.91);transform-origin:0 0">IQ  Timing   Skew</div><div style="position:absolute;left:108px;top:161.96px;font-size:9px;line-height:10px;color:#3070d8;white-space:pre;transform:scaleX(0.91);transform-origin:0 0">***</div><div style="position:absolute;left:8.5px;top:172.10000000000002px;font-size:9px;line-height:10px;color:#3070d8;white-space:pre;transform:scaleX(0.91);transform-origin:0 0">Time  Offset</div><div style="position:absolute;left:108px;top:172.10000000000002px;font-size:9px;line-height:10px;color:#3070d8;white-space:pre;transform:scaleX(0.91);transform-origin:0 0">3.8924</div><div style="position:absolute;left:144px;top:172.10000000000002px;font-size:9px;line-height:10px;color:#3070d8;white-space:pre;transform:scaleX(0.91);transform-origin:0 0">ms</div><div style="position:absolute;left:179.79999999999995px;top:20px;font-size:9px;line-height:10px;color:#3070d8;white-space:pre;transform:scaleX(0.91);transform-origin:0 0">to</div><div style="position:absolute;left:193px;top:20px;font-size:9px;line-height:10px;color:#3070d8;white-space:pre;transform:scaleX(0.91);transform-origin:0 0">[Sf9,sym13]</div></div><div style="position:absolute;left:703px;top:22px;width:11px;height:194px;background:#f0f0f0;"></div><div style="position:absolute;left:366px;top:204px;width:348px;height:12px;background:#f0f0f0;"></div><div style="position:absolute;left:703px;top:34px;width:11px;height:11px;background:#cdcdcd;"></div><div style="position:absolute;left:378px;top:205px;width:11px;height:10px;background:#cdcdcd;"></div><svg style="position:absolute;left:0;top:0" width="1080" height="438"><path d="M705.5 30 L708.5 27 L711.5 30" stroke="#606060" stroke-width="1.2" fill="none"/><path d="M705.5 196.5 L708.5 199.5 L711.5 196.5" stroke="#606060" stroke-width="1.2" fill="none"/><path d="M373 207 L370 210 L373 213" stroke="#606060" stroke-width="1.2" fill="none"/><path d="M695 207 L698 210 L695 213" stroke="#606060" stroke-width="1.2" fill="none"/></svg><div style="position:absolute;right:323px;top:35px;font-size:9.5px;line-height:10px;color:#cccccc;white-space:pre;transform:scaleX(0.874);transform-origin:100% 0;text-align:right;">1.64</div><div style="position:absolute;right:323px;top:45.4px;font-size:9.5px;line-height:10px;color:#cccccc;white-space:pre;transform:scaleX(0.874);transform-origin:100% 0;text-align:right;">kcarriers</div><div style="position:absolute;right:323px;top:81px;font-size:9.5px;line-height:10px;color:#cccccc;white-space:pre;transform:scaleX(0.874);transform-origin:100% 0;text-align:right;">Real</div><div style="position:absolute;right:323px;top:116.6px;font-size:9.5px;line-height:10px;color:#cccccc;white-space:pre;transform:scaleX(0.874);transform-origin:100% 0;text-align:right;">328</div><div style="position:absolute;right:323px;top:126.6px;font-size:9.5px;line-height:10px;color:#cccccc;white-space:pre;transform:scaleX(0.874);transform-origin:100% 0;text-align:right;">carriers</div><div style="position:absolute;right:323px;top:136.5px;font-size:9.5px;line-height:10px;color:#cccccc;white-space:pre;transform:scaleX(0.874);transform-origin:100% 0;text-align:right;">/div</div><div style="position:absolute;right:323px;top:174px;font-size:9.5px;line-height:10px;color:#cccccc;white-space:pre;transform:scaleX(0.874);transform-origin:100% 0;text-align:right;">-1.64</div><div style="position:absolute;right:323px;top:183.4px;font-size:9.5px;line-height:10px;color:#cccccc;white-space:pre;transform:scaleX(0.874);transform-origin:100% 0;text-align:right;">kcarriers</div><div style="position:absolute;left:760px;top:193.8px;font-size:9.5px;line-height:10px;color:#cccccc;white-space:pre;transform:scaleX(0.874);transform-origin:0 0;">Start 0  sym</div><div style="position:absolute;right:15px;top:193.8px;font-size:9.5px;line-height:10px;color:#cccccc;white-space:pre;transform:scaleX(0.874);transform-origin:100% 0;text-align:right;">Stop 139  sym</div><svg style="position:absolute;left:0;top:0" width="1080" height="438"><path d="M760 34h305v158h-305z" fill="#cd9600"/><path d="M789.50 34h1.4v158h-1.4zM820.20 34h1.4v158h-1.4zM850.90 34h1.4v158h-1.4zM881.60 34h1.4v158h-1.4zM912.30 34h1.4v158h-1.4zM943.00 34h1.4v158h-1.4zM973.70 34h1.4v158h-1.4zM1004.40 34h1.4v158h-1.4zM1035.10 34h1.4v158h-1.4z" fill="#000"/><path d="M762.50 36.60h2.8v2.8h-2.8zM773.20 36.60h2.8v2.8h-2.8zM782.30 36.60h2.8v2.8h-2.8zM762.50 46.47h2.8v2.8h-2.8zM773.20 46.47h2.8v2.8h-2.8zM782.30 46.47h2.8v2.8h-2.8zM762.50 56.34h2.8v2.8h-2.8zM773.20 56.34h2.8v2.8h-2.8zM782.30 56.34h2.8v2.8h-2.8zM762.50 66.21h2.8v2.8h-2.8zM773.20 66.21h2.8v2.8h-2.8zM782.30 66.21h2.8v2.8h-2.8zM762.50 76.08h2.8v2.8h-2.8zM773.20 76.08h2.8v2.8h-2.8zM782.30 76.08h2.8v2.8h-2.8zM762.50 85.95h2.8v2.8h-2.8zM773.20 85.95h2.8v2.8h-2.8zM782.30 85.95h2.8v2.8h-2.8zM762.50 95.82h2.8v2.8h-2.8zM773.20 95.82h2.8v2.8h-2.8zM782.30 95.82h2.8v2.8h-2.8zM762.50 105.69h2.8v2.8h-2.8zM773.20 105.69h2.8v2.8h-2.8zM782.30 105.69h2.8v2.8h-2.8zM762.50 115.56h2.8v2.8h-2.8zM773.20 115.56h2.8v2.8h-2.8zM782.30 115.56h2.8v2.8h-2.8zM762.50 125.43h2.8v2.8h-2.8zM773.20 125.43h2.8v2.8h-2.8zM782.30 125.43h2.8v2.8h-2.8zM762.50 135.30h2.8v2.8h-2.8zM773.20 135.30h2.8v2.8h-2.8zM782.30 135.30h2.8v2.8h-2.8zM762.50 145.17h2.8v2.8h-2.8zM773.20 145.17h2.8v2.8h-2.8zM782.30 145.17h2.8v2.8h-2.8zM762.50 155.04h2.8v2.8h-2.8zM773.20 155.04h2.8v2.8h-2.8zM782.30 155.04h2.8v2.8h-2.8zM762.50 164.91h2.8v2.8h-2.8zM773.20 164.91h2.8v2.8h-2.8zM782.30 164.91h2.8v2.8h-2.8zM762.50 174.78h2.8v2.8h-2.8zM773.20 174.78h2.8v2.8h-2.8zM782.30 174.78h2.8v2.8h-2.8zM762.50 184.65h2.8v2.8h-2.8zM773.20 184.65h2.8v2.8h-2.8zM782.30 184.65h2.8v2.8h-2.8zM793.20 36.60h2.8v2.8h-2.8zM803.90 36.60h2.8v2.8h-2.8zM813.00 36.60h2.8v2.8h-2.8zM793.20 46.47h2.8v2.8h-2.8zM803.90 46.47h2.8v2.8h-2.8zM813.00 46.47h2.8v2.8h-2.8zM793.20 56.34h2.8v2.8h-2.8zM803.90 56.34h2.8v2.8h-2.8zM813.00 56.34h2.8v2.8h-2.8zM793.20 66.21h2.8v2.8h-2.8zM803.90 66.21h2.8v2.8h-2.8zM813.00 66.21h2.8v2.8h-2.8zM793.20 76.08h2.8v2.8h-2.8zM803.90 76.08h2.8v2.8h-2.8zM813.00 76.08h2.8v2.8h-2.8zM793.20 85.95h2.8v2.8h-2.8zM803.90 85.95h2.8v2.8h-2.8zM813.00 85.95h2.8v2.8h-2.8zM793.20 95.82h2.8v2.8h-2.8zM803.90 95.82h2.8v2.8h-2.8zM813.00 95.82h2.8v2.8h-2.8zM793.20 105.69h2.8v2.8h-2.8zM803.90 105.69h2.8v2.8h-2.8zM813.00 105.69h2.8v2.8h-2.8zM793.20 115.56h2.8v2.8h-2.8zM803.90 115.56h2.8v2.8h-2.8zM813.00 115.56h2.8v2.8h-2.8zM793.20 125.43h2.8v2.8h-2.8zM803.90 125.43h2.8v2.8h-2.8zM813.00 125.43h2.8v2.8h-2.8zM793.20 135.30h2.8v2.8h-2.8zM803.90 135.30h2.8v2.8h-2.8zM813.00 135.30h2.8v2.8h-2.8zM793.20 145.17h2.8v2.8h-2.8zM803.90 145.17h2.8v2.8h-2.8zM813.00 145.17h2.8v2.8h-2.8zM793.20 155.04h2.8v2.8h-2.8zM803.90 155.04h2.8v2.8h-2.8zM813.00 155.04h2.8v2.8h-2.8zM793.20 164.91h2.8v2.8h-2.8zM803.90 164.91h2.8v2.8h-2.8zM813.00 164.91h2.8v2.8h-2.8zM793.20 174.78h2.8v2.8h-2.8zM803.90 174.78h2.8v2.8h-2.8zM813.00 174.78h2.8v2.8h-2.8zM793.20 184.65h2.8v2.8h-2.8zM803.90 184.65h2.8v2.8h-2.8zM813.00 184.65h2.8v2.8h-2.8zM823.90 36.60h2.8v2.8h-2.8zM834.60 36.60h2.8v2.8h-2.8zM843.70 36.60h2.8v2.8h-2.8zM823.90 46.47h2.8v2.8h-2.8zM834.60 46.47h2.8v2.8h-2.8zM843.70 46.47h2.8v2.8h-2.8zM823.90 56.34h2.8v2.8h-2.8zM834.60 56.34h2.8v2.8h-2.8zM843.70 56.34h2.8v2.8h-2.8zM823.90 66.21h2.8v2.8h-2.8zM834.60 66.21h2.8v2.8h-2.8zM843.70 66.21h2.8v2.8h-2.8zM823.90 76.08h2.8v2.8h-2.8zM834.60 76.08h2.8v2.8h-2.8zM843.70 76.08h2.8v2.8h-2.8zM823.90 85.95h2.8v2.8h-2.8zM834.60 85.95h2.8v2.8h-2.8zM843.70 85.95h2.8v2.8h-2.8zM823.90 95.82h2.8v2.8h-2.8zM834.60 95.82h2.8v2.8h-2.8zM843.70 95.82h2.8v2.8h-2.8zM823.90 105.69h2.8v2.8h-2.8zM834.60 105.69h2.8v2.8h-2.8zM843.70 105.69h2.8v2.8h-2.8zM823.90 115.56h2.8v2.8h-2.8zM834.60 115.56h2.8v2.8h-2.8zM843.70 115.56h2.8v2.8h-2.8zM823.90 125.43h2.8v2.8h-2.8zM834.60 125.43h2.8v2.8h-2.8zM843.70 125.43h2.8v2.8h-2.8zM823.90 135.30h2.8v2.8h-2.8zM834.60 135.30h2.8v2.8h-2.8zM843.70 135.30h2.8v2.8h-2.8zM823.90 145.17h2.8v2.8h-2.8zM834.60 145.17h2.8v2.8h-2.8zM843.70 145.17h2.8v2.8h-2.8zM823.90 155.04h2.8v2.8h-2.8zM834.60 155.04h2.8v2.8h-2.8zM843.70 155.04h2.8v2.8h-2.8zM823.90 164.91h2.8v2.8h-2.8zM834.60 164.91h2.8v2.8h-2.8zM843.70 164.91h2.8v2.8h-2.8zM823.90 174.78h2.8v2.8h-2.8zM834.60 174.78h2.8v2.8h-2.8zM843.70 174.78h2.8v2.8h-2.8zM823.90 184.65h2.8v2.8h-2.8zM834.60 184.65h2.8v2.8h-2.8zM843.70 184.65h2.8v2.8h-2.8zM854.60 36.60h2.8v2.8h-2.8zM865.30 36.60h2.8v2.8h-2.8zM874.40 36.60h2.8v2.8h-2.8zM854.60 46.47h2.8v2.8h-2.8zM865.30 46.47h2.8v2.8h-2.8zM874.40 46.47h2.8v2.8h-2.8zM854.60 56.34h2.8v2.8h-2.8zM865.30 56.34h2.8v2.8h-2.8zM874.40 56.34h2.8v2.8h-2.8zM854.60 66.21h2.8v2.8h-2.8zM865.30 66.21h2.8v2.8h-2.8zM874.40 66.21h2.8v2.8h-2.8zM854.60 76.08h2.8v2.8h-2.8zM865.30 76.08h2.8v2.8h-2.8zM874.40 76.08h2.8v2.8h-2.8zM854.60 85.95h2.8v2.8h-2.8zM865.30 85.95h2.8v2.8h-2.8zM874.40 85.95h2.8v2.8h-2.8zM854.60 95.82h2.8v2.8h-2.8zM865.30 95.82h2.8v2.8h-2.8zM874.40 95.82h2.8v2.8h-2.8zM854.60 105.69h2.8v2.8h-2.8zM865.30 105.69h2.8v2.8h-2.8zM874.40 105.69h2.8v2.8h-2.8zM854.60 115.56h2.8v2.8h-2.8zM865.30 115.56h2.8v2.8h-2.8zM874.40 115.56h2.8v2.8h-2.8zM854.60 125.43h2.8v2.8h-2.8zM865.30 125.43h2.8v2.8h-2.8zM874.40 125.43h2.8v2.8h-2.8zM854.60 135.30h2.8v2.8h-2.8zM865.30 135.30h2.8v2.8h-2.8zM874.40 135.30h2.8v2.8h-2.8zM854.60 145.17h2.8v2.8h-2.8zM865.30 145.17h2.8v2.8h-2.8zM874.40 145.17h2.8v2.8h-2.8zM854.60 155.04h2.8v2.8h-2.8zM865.30 155.04h2.8v2.8h-2.8zM874.40 155.04h2.8v2.8h-2.8zM854.60 164.91h2.8v2.8h-2.8zM865.30 164.91h2.8v2.8h-2.8zM874.40 164.91h2.8v2.8h-2.8zM854.60 174.78h2.8v2.8h-2.8zM865.30 174.78h2.8v2.8h-2.8zM874.40 174.78h2.8v2.8h-2.8zM854.60 184.65h2.8v2.8h-2.8zM865.30 184.65h2.8v2.8h-2.8zM874.40 184.65h2.8v2.8h-2.8zM885.30 36.60h2.8v2.8h-2.8zM896.00 36.60h2.8v2.8h-2.8zM905.10 36.60h2.8v2.8h-2.8zM885.30 46.47h2.8v2.8h-2.8zM896.00 46.47h2.8v2.8h-2.8zM905.10 46.47h2.8v2.8h-2.8zM885.30 56.34h2.8v2.8h-2.8zM896.00 56.34h2.8v2.8h-2.8zM905.10 56.34h2.8v2.8h-2.8zM885.30 66.21h2.8v2.8h-2.8zM896.00 66.21h2.8v2.8h-2.8zM905.10 66.21h2.8v2.8h-2.8zM885.30 76.08h2.8v2.8h-2.8zM896.00 76.08h2.8v2.8h-2.8zM905.10 76.08h2.8v2.8h-2.8zM885.30 85.95h2.8v2.8h-2.8zM896.00 85.95h2.8v2.8h-2.8zM905.10 85.95h2.8v2.8h-2.8zM885.30 95.82h2.8v2.8h-2.8zM896.00 95.82h2.8v2.8h-2.8zM905.10 95.82h2.8v2.8h-2.8zM885.30 105.69h2.8v2.8h-2.8zM896.00 105.69h2.8v2.8h-2.8zM905.10 105.69h2.8v2.8h-2.8zM885.30 115.56h2.8v2.8h-2.8zM896.00 115.56h2.8v2.8h-2.8zM905.10 115.56h2.8v2.8h-2.8zM885.30 125.43h2.8v2.8h-2.8zM896.00 125.43h2.8v2.8h-2.8zM905.10 125.43h2.8v2.8h-2.8zM885.30 135.30h2.8v2.8h-2.8zM896.00 135.30h2.8v2.8h-2.8zM905.10 135.30h2.8v2.8h-2.8zM885.30 145.17h2.8v2.8h-2.8zM896.00 145.17h2.8v2.8h-2.8zM905.10 145.17h2.8v2.8h-2.8zM885.30 155.04h2.8v2.8h-2.8zM896.00 155.04h2.8v2.8h-2.8zM905.10 155.04h2.8v2.8h-2.8zM885.30 164.91h2.8v2.8h-2.8zM896.00 164.91h2.8v2.8h-2.8zM905.10 164.91h2.8v2.8h-2.8zM885.30 174.78h2.8v2.8h-2.8zM896.00 174.78h2.8v2.8h-2.8zM905.10 174.78h2.8v2.8h-2.8zM885.30 184.65h2.8v2.8h-2.8zM896.00 184.65h2.8v2.8h-2.8zM905.10 184.65h2.8v2.8h-2.8zM916.00 36.60h2.8v2.8h-2.8zM926.70 36.60h2.8v2.8h-2.8zM935.80 36.60h2.8v2.8h-2.8zM916.00 46.47h2.8v2.8h-2.8zM926.70 46.47h2.8v2.8h-2.8zM935.80 46.47h2.8v2.8h-2.8zM916.00 56.34h2.8v2.8h-2.8zM926.70 56.34h2.8v2.8h-2.8zM935.80 56.34h2.8v2.8h-2.8zM916.00 66.21h2.8v2.8h-2.8zM926.70 66.21h2.8v2.8h-2.8zM935.80 66.21h2.8v2.8h-2.8zM916.00 76.08h2.8v2.8h-2.8zM926.70 76.08h2.8v2.8h-2.8zM935.80 76.08h2.8v2.8h-2.8zM916.00 85.95h2.8v2.8h-2.8zM926.70 85.95h2.8v2.8h-2.8zM935.80 85.95h2.8v2.8h-2.8zM916.00 95.82h2.8v2.8h-2.8zM926.70 95.82h2.8v2.8h-2.8zM935.80 95.82h2.8v2.8h-2.8zM916.00 105.69h2.8v2.8h-2.8zM926.70 105.69h2.8v2.8h-2.8zM935.80 105.69h2.8v2.8h-2.8zM916.00 115.56h2.8v2.8h-2.8zM926.70 115.56h2.8v2.8h-2.8zM935.80 115.56h2.8v2.8h-2.8zM916.00 125.43h2.8v2.8h-2.8zM926.70 125.43h2.8v2.8h-2.8zM935.80 125.43h2.8v2.8h-2.8zM916.00 135.30h2.8v2.8h-2.8zM926.70 135.30h2.8v2.8h-2.8zM935.80 135.30h2.8v2.8h-2.8zM916.00 145.17h2.8v2.8h-2.8zM926.70 145.17h2.8v2.8h-2.8zM935.80 145.17h2.8v2.8h-2.8zM916.00 155.04h2.8v2.8h-2.8zM926.70 155.04h2.8v2.8h-2.8zM935.80 155.04h2.8v2.8h-2.8zM916.00 164.91h2.8v2.8h-2.8zM926.70 164.91h2.8v2.8h-2.8zM935.80 164.91h2.8v2.8h-2.8zM916.00 174.78h2.8v2.8h-2.8zM926.70 174.78h2.8v2.8h-2.8zM935.80 174.78h2.8v2.8h-2.8zM916.00 184.65h2.8v2.8h-2.8zM926.70 184.65h2.8v2.8h-2.8zM935.80 184.65h2.8v2.8h-2.8zM946.70 36.60h2.8v2.8h-2.8zM957.40 36.60h2.8v2.8h-2.8zM966.50 36.60h2.8v2.8h-2.8zM946.70 46.47h2.8v2.8h-2.8zM957.40 46.47h2.8v2.8h-2.8zM966.50 46.47h2.8v2.8h-2.8zM946.70 56.34h2.8v2.8h-2.8zM957.40 56.34h2.8v2.8h-2.8zM966.50 56.34h2.8v2.8h-2.8zM946.70 66.21h2.8v2.8h-2.8zM957.40 66.21h2.8v2.8h-2.8zM966.50 66.21h2.8v2.8h-2.8zM946.70 76.08h2.8v2.8h-2.8zM957.40 76.08h2.8v2.8h-2.8zM966.50 76.08h2.8v2.8h-2.8zM946.70 85.95h2.8v2.8h-2.8zM957.40 85.95h2.8v2.8h-2.8zM966.50 85.95h2.8v2.8h-2.8zM946.70 95.82h2.8v2.8h-2.8zM957.40 95.82h2.8v2.8h-2.8zM966.50 95.82h2.8v2.8h-2.8zM946.70 105.69h2.8v2.8h-2.8zM957.40 105.69h2.8v2.8h-2.8zM966.50 105.69h2.8v2.8h-2.8zM946.70 115.56h2.8v2.8h-2.8zM957.40 115.56h2.8v2.8h-2.8zM966.50 115.56h2.8v2.8h-2.8zM946.70 125.43h2.8v2.8h-2.8zM957.40 125.43h2.8v2.8h-2.8zM966.50 125.43h2.8v2.8h-2.8zM946.70 135.30h2.8v2.8h-2.8zM957.40 135.30h2.8v2.8h-2.8zM966.50 135.30h2.8v2.8h-2.8zM946.70 145.17h2.8v2.8h-2.8zM957.40 145.17h2.8v2.8h-2.8zM966.50 145.17h2.8v2.8h-2.8zM946.70 155.04h2.8v2.8h-2.8zM957.40 155.04h2.8v2.8h-2.8zM966.50 155.04h2.8v2.8h-2.8zM946.70 164.91h2.8v2.8h-2.8zM957.40 164.91h2.8v2.8h-2.8zM966.50 164.91h2.8v2.8h-2.8zM946.70 174.78h2.8v2.8h-2.8zM957.40 174.78h2.8v2.8h-2.8zM966.50 174.78h2.8v2.8h-2.8zM946.70 184.65h2.8v2.8h-2.8zM957.40 184.65h2.8v2.8h-2.8zM966.50 184.65h2.8v2.8h-2.8zM977.40 36.60h2.8v2.8h-2.8zM988.10 36.60h2.8v2.8h-2.8zM997.20 36.60h2.8v2.8h-2.8zM977.40 46.47h2.8v2.8h-2.8zM988.10 46.47h2.8v2.8h-2.8zM997.20 46.47h2.8v2.8h-2.8zM977.40 56.34h2.8v2.8h-2.8zM988.10 56.34h2.8v2.8h-2.8zM997.20 56.34h2.8v2.8h-2.8zM977.40 66.21h2.8v2.8h-2.8zM988.10 66.21h2.8v2.8h-2.8zM997.20 66.21h2.8v2.8h-2.8zM977.40 76.08h2.8v2.8h-2.8zM988.10 76.08h2.8v2.8h-2.8zM997.20 76.08h2.8v2.8h-2.8zM977.40 85.95h2.8v2.8h-2.8zM988.10 85.95h2.8v2.8h-2.8zM997.20 85.95h2.8v2.8h-2.8zM977.40 95.82h2.8v2.8h-2.8zM988.10 95.82h2.8v2.8h-2.8zM997.20 95.82h2.8v2.8h-2.8zM977.40 105.69h2.8v2.8h-2.8zM988.10 105.69h2.8v2.8h-2.8zM997.20 105.69h2.8v2.8h-2.8zM977.40 115.56h2.8v2.8h-2.8zM988.10 115.56h2.8v2.8h-2.8zM997.20 115.56h2.8v2.8h-2.8zM977.40 125.43h2.8v2.8h-2.8zM988.10 125.43h2.8v2.8h-2.8zM997.20 125.43h2.8v2.8h-2.8zM977.40 135.30h2.8v2.8h-2.8zM988.10 135.30h2.8v2.8h-2.8zM997.20 135.30h2.8v2.8h-2.8zM977.40 145.17h2.8v2.8h-2.8zM988.10 145.17h2.8v2.8h-2.8zM997.20 145.17h2.8v2.8h-2.8zM977.40 155.04h2.8v2.8h-2.8zM988.10 155.04h2.8v2.8h-2.8zM997.20 155.04h2.8v2.8h-2.8zM977.40 164.91h2.8v2.8h-2.8zM988.10 164.91h2.8v2.8h-2.8zM997.20 164.91h2.8v2.8h-2.8zM977.40 174.78h2.8v2.8h-2.8zM988.10 174.78h2.8v2.8h-2.8zM997.20 174.78h2.8v2.8h-2.8zM977.40 184.65h2.8v2.8h-2.8zM988.10 184.65h2.8v2.8h-2.8zM997.20 184.65h2.8v2.8h-2.8zM1008.10 36.60h2.8v2.8h-2.8zM1018.80 36.60h2.8v2.8h-2.8zM1027.90 36.60h2.8v2.8h-2.8zM1008.10 46.47h2.8v2.8h-2.8zM1018.80 46.47h2.8v2.8h-2.8zM1027.90 46.47h2.8v2.8h-2.8zM1008.10 56.34h2.8v2.8h-2.8zM1018.80 56.34h2.8v2.8h-2.8zM1027.90 56.34h2.8v2.8h-2.8zM1008.10 66.21h2.8v2.8h-2.8zM1018.80 66.21h2.8v2.8h-2.8zM1027.90 66.21h2.8v2.8h-2.8zM1008.10 76.08h2.8v2.8h-2.8zM1018.80 76.08h2.8v2.8h-2.8zM1027.90 76.08h2.8v2.8h-2.8zM1008.10 85.95h2.8v2.8h-2.8zM1018.80 85.95h2.8v2.8h-2.8zM1027.90 85.95h2.8v2.8h-2.8zM1008.10 95.82h2.8v2.8h-2.8zM1018.80 95.82h2.8v2.8h-2.8zM1027.90 95.82h2.8v2.8h-2.8zM1008.10 105.69h2.8v2.8h-2.8zM1018.80 105.69h2.8v2.8h-2.8zM1027.90 105.69h2.8v2.8h-2.8zM1008.10 115.56h2.8v2.8h-2.8zM1018.80 115.56h2.8v2.8h-2.8zM1027.90 115.56h2.8v2.8h-2.8zM1008.10 125.43h2.8v2.8h-2.8zM1018.80 125.43h2.8v2.8h-2.8zM1027.90 125.43h2.8v2.8h-2.8zM1008.10 135.30h2.8v2.8h-2.8zM1018.80 135.30h2.8v2.8h-2.8zM1027.90 135.30h2.8v2.8h-2.8zM1008.10 145.17h2.8v2.8h-2.8zM1018.80 145.17h2.8v2.8h-2.8zM1027.90 145.17h2.8v2.8h-2.8zM1008.10 155.04h2.8v2.8h-2.8zM1018.80 155.04h2.8v2.8h-2.8zM1027.90 155.04h2.8v2.8h-2.8zM1008.10 164.91h2.8v2.8h-2.8zM1018.80 164.91h2.8v2.8h-2.8zM1027.90 164.91h2.8v2.8h-2.8zM1008.10 174.78h2.8v2.8h-2.8zM1018.80 174.78h2.8v2.8h-2.8zM1027.90 174.78h2.8v2.8h-2.8zM1008.10 184.65h2.8v2.8h-2.8zM1018.80 184.65h2.8v2.8h-2.8zM1027.90 184.65h2.8v2.8h-2.8zM1038.80 36.60h2.8v2.8h-2.8zM1049.50 36.60h2.8v2.8h-2.8zM1058.60 36.60h2.8v2.8h-2.8zM1038.80 46.47h2.8v2.8h-2.8zM1049.50 46.47h2.8v2.8h-2.8zM1058.60 46.47h2.8v2.8h-2.8zM1038.80 56.34h2.8v2.8h-2.8zM1049.50 56.34h2.8v2.8h-2.8zM1058.60 56.34h2.8v2.8h-2.8zM1038.80 66.21h2.8v2.8h-2.8zM1049.50 66.21h2.8v2.8h-2.8zM1058.60 66.21h2.8v2.8h-2.8zM1038.80 76.08h2.8v2.8h-2.8zM1049.50 76.08h2.8v2.8h-2.8zM1058.60 76.08h2.8v2.8h-2.8zM1038.80 85.95h2.8v2.8h-2.8zM1049.50 85.95h2.8v2.8h-2.8zM1058.60 85.95h2.8v2.8h-2.8zM1038.80 95.82h2.8v2.8h-2.8zM1049.50 95.82h2.8v2.8h-2.8zM1058.60 95.82h2.8v2.8h-2.8zM1038.80 105.69h2.8v2.8h-2.8zM1049.50 105.69h2.8v2.8h-2.8zM1058.60 105.69h2.8v2.8h-2.8zM1038.80 115.56h2.8v2.8h-2.8zM1049.50 115.56h2.8v2.8h-2.8zM1058.60 115.56h2.8v2.8h-2.8zM1038.80 125.43h2.8v2.8h-2.8zM1049.50 125.43h2.8v2.8h-2.8zM1058.60 125.43h2.8v2.8h-2.8zM1038.80 135.30h2.8v2.8h-2.8zM1049.50 135.30h2.8v2.8h-2.8zM1058.60 135.30h2.8v2.8h-2.8zM1038.80 145.17h2.8v2.8h-2.8zM1049.50 145.17h2.8v2.8h-2.8zM1058.60 145.17h2.8v2.8h-2.8zM1038.80 155.04h2.8v2.8h-2.8zM1049.50 155.04h2.8v2.8h-2.8zM1058.60 155.04h2.8v2.8h-2.8zM1038.80 164.91h2.8v2.8h-2.8zM1049.50 164.91h2.8v2.8h-2.8zM1058.60 164.91h2.8v2.8h-2.8zM1038.80 174.78h2.8v2.8h-2.8zM1049.50 174.78h2.8v2.8h-2.8zM1058.60 174.78h2.8v2.8h-2.8zM1038.80 184.65h2.8v2.8h-2.8zM1049.50 184.65h2.8v2.8h-2.8zM1058.60 184.65h2.8v2.8h-2.8z" fill="#18aee0"/></svg><div style="position:absolute;left:720px;top:238px;width:1px;height:195px;background:#505a6a;"></div><div style="position:absolute;left:721px;top:239px;width:348px;height:1px;background:#6a5a8a;"></div><div style="position:absolute;left:721px;top:240px;width:348px;height:21px;background:#3a3a3a;"></div><div style="position:absolute;left:789px;top:240px;width:1px;height:21px;background:#4c4c4c;"></div><div style="position:absolute;left:825px;top:240px;width:1px;height:21px;background:#4c4c4c;"></div><div style="position:absolute;left:878px;top:240px;width:1px;height:21px;background:#4c4c4c;"></div><div style="position:absolute;left:921px;top:240px;width:1px;height:21px;background:#4c4c4c;"></div><div style="position:absolute;left:956px;top:240px;width:1px;height:21px;background:#4c4c4c;"></div><div style="position:absolute;left:991px;top:240px;width:1px;height:21px;background:#4c4c4c;"></div><div style="position:absolute;left:1026px;top:240px;width:1px;height:21px;background:#4c4c4c;"></div><div style="position:absolute;left:722px;top:246.3px;font-size:9.5px;line-height:10px;color:#eeeeee;white-space:pre;transform:scaleX(0.874);transform-origin:0 0;">Name</div><div style="position:absolute;left:791px;top:241.4px;font-size:9.5px;line-height:10px;color:#eeeeee;white-space:pre;transform:scaleX(0.874);transform-origin:0 0;">EVM</div><div style="position:absolute;left:791px;top:251.9px;font-size:9.5px;line-height:10px;color:#eeeeee;white-space:pre;transform:scaleX(0.874);transform-origin:0 0;">(dB)</div><div style="position:absolute;left:827px;top:241.4px;font-size:9.5px;line-height:10px;color:#eeeeee;white-space:pre;transform:scaleX(0.874);transform-origin:0 0;">Power per RE</div><div style="position:absolute;left:827px;top:251.9px;font-size:9.5px;line-height:10px;color:#eeeeee;white-space:pre;transform:scaleX(0.874);transform-origin:0 0;">(dBm)</div><div style="position:absolute;left:880px;top:246.3px;font-size:9.5px;line-height:10px;color:#eeeeee;white-space:pre;transform:scaleX(0.874);transform-origin:0 0;">Modulation</div><div style="position:absolute;left:922px;top:241.4px;font-size:9.5px;line-height:10px;color:#eeeeee;white-space:pre;transform:scaleX(0.874);transform-origin:0 0;">Num. of</div><div style="position:absolute;left:922px;top:251.9px;font-size:9.5px;line-height:10px;color:#eeeeee;white-space:pre;transform:scaleX(0.874);transform-origin:0 0;">RBs</div><div style="position:absolute;left:957.5px;top:246.3px;font-size:9.5px;line-height:10px;color:#eeeeee;white-space:pre;transform:scaleX(0.874);transform-origin:0 0;">RNTI</div><div style="position:absolute;left:992.5px;top:246.3px;font-size:9.5px;line-height:10px;color:#eeeeee;white-space:pre;transform:scaleX(0.874);transform-origin:0 0;">BWP ID</div><div style="position:absolute;right:294.4px;top:262.6px;font-size:9.5px;line-height:10px;color:#d09000;white-space:pre;transform:scaleX(0.874);transform-origin:100% 0;text-align:right;">PUSCH0</div><div style="position:absolute;right:259.29999999999995px;top:262.6px;font-size:9.5px;line-height:10px;color:#d09000;white-space:pre;transform:scaleX(0.874);transform-origin:100% 0;text-align:right;">-12.93</div><div style="position:absolute;right:205.20000000000005px;top:262.6px;font-size:9.5px;line-height:10px;color:#d09000;white-space:pre;transform:scaleX(0.874);transform-origin:100% 0;text-align:right;">10.00</div><div style="position:absolute;left:893.3px;top:262.6px;font-size:9.5px;line-height:10px;color:#d09000;white-space:pre;transform:scaleX(0.874);transform-origin:0 0;">QPSK</div><div style="position:absolute;right:128px;top:262.6px;font-size:9.5px;line-height:10px;color:#d09000;white-space:pre;transform:scaleX(0.874);transform-origin:100% 0;text-align:right;">2700</div><div style="position:absolute;right:93px;top:262.6px;font-size:9.5px;line-height:10px;color:#d09000;white-space:pre;transform:scaleX(0.874);transform-origin:100% 0;text-align:right;">0x0</div><div style="position:absolute;right:57.299999999999955px;top:262.6px;font-size:9.5px;line-height:10px;color:#d09000;white-space:pre;transform:scaleX(0.874);transform-origin:100% 0;text-align:right;">0</div><div style="position:absolute;left:722px;top:274.4px;font-size:9.5px;line-height:10px;color:#1a9ad0;white-space:pre;transform:scaleX(0.874);transform-origin:0 0;">PUSCH0_DMRS</div><div style="position:absolute;right:259.29999999999995px;top:274.4px;font-size:9.5px;line-height:10px;color:#1a9ad0;white-space:pre;transform:scaleX(0.874);transform-origin:100% 0;text-align:right;">-20.18</div><div style="position:absolute;right:205.20000000000005px;top:274.4px;font-size:9.5px;line-height:10px;color:#1a9ad0;white-space:pre;transform:scaleX(0.874);transform-origin:100% 0;text-align:right;">10.00</div><div style="position:absolute;left:893.3px;top:274.4px;font-size:9.5px;line-height:10px;color:#1a9ad0;white-space:pre;transform:scaleX(0.874);transform-origin:0 0;">QPSK</div><div style="position:absolute;right:128px;top:274.4px;font-size:9.5px;line-height:10px;color:#1a9ad0;white-space:pre;transform:scaleX(0.874);transform-origin:100% 0;text-align:right;">2700</div><div style="position:absolute;right:93px;top:274.4px;font-size:9.5px;line-height:10px;color:#1a9ad0;white-space:pre;transform:scaleX(0.874);transform-origin:100% 0;text-align:right;">0x0</div><div style="position:absolute;right:57.299999999999955px;top:274.4px;font-size:9.5px;line-height:10px;color:#1a9ad0;white-space:pre;transform:scaleX(0.874);transform-origin:100% 0;text-align:right;">0</div>
</body></html>
